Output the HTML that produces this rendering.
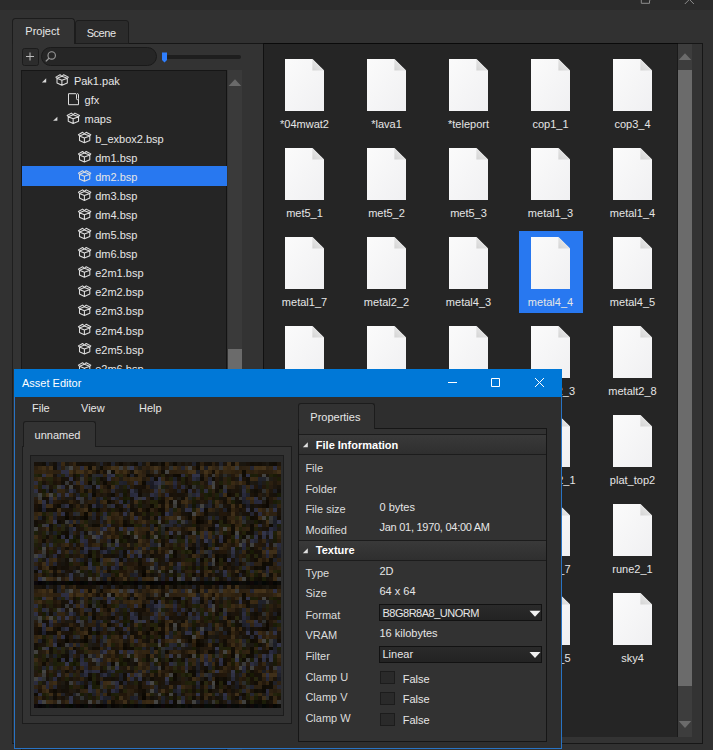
<!DOCTYPE html><html><head><meta charset="utf-8"><style>
html,body{margin:0;padding:0;}
body{width:713px;height:750px;position:relative;overflow:hidden;background:#313131;font-family:"Liberation Sans", sans-serif;}
.t{position:absolute;white-space:pre;}
.b{position:absolute;box-sizing:border-box;}
svg{position:absolute;overflow:visible;}
</style></head><body>
<div class="b" style="left:0px;top:0px;width:713px;height:10px;background:#2b2b2b"></div>
<svg style="left:0;top:0" width="713" height="10"><path d="M641.3 -3 V3.3 H649.5 V1 L650 0" stroke="#8c8c8c" fill="none" stroke-width="1"/><path d="M684.8 4 L689.4 -0.6 L693.9 4" stroke="#8c8c8c" fill="none" stroke-width="1"/></svg>
<div class="b" style="left:12px;top:43px;width:691px;height:701px;background:#333333;border:1px solid #161616;border-left-color:#1e1e1e"></div>
<div class="b" style="left:12px;top:18px;width:63px;height:26px;background:#333333;border:1px solid #1c1c1c;border-bottom:none;border-radius:3.5px 3.5px 0 0"></div>
<div class="b" style="left:75px;top:20px;width:54px;height:24px;background:#2b2b2b;border:1px solid #1c1c1c;border-radius:3px 3px 0 0"></div>
<div class="b" style="left:13px;top:42px;width:61px;height:3px;background:#333333"></div>
<div class="t" style="left:25.3px;top:26.39px;font-size:11px;line-height:11px;color:#e6e6e6;font-weight:normal;">Project</div>
<div class="t" style="left:86.7px;top:28.09px;font-size:11px;line-height:11px;color:#e6e6e6;font-weight:normal;letter-spacing:-0.45px">Scene</div>
<div class="b" style="left:21.5px;top:47.5px;width:17.5px;height:18px;background:#2c2c2c;border:1px solid #1c1c1c;border-radius:2.5px"></div>
<svg style="left:0;top:0" width="713" height="750"><path d="M26 56.5 H34 M30 52.5 V60.5" stroke="#bdbdbd" stroke-width="1" fill="none"/></svg>
<div class="b" style="left:41px;top:47px;width:116px;height:19px;background:#262626;border:1px solid #1a1a1a;border-radius:9.5px"></div>
<svg style="left:0;top:0" width="713" height="750"><circle cx="51.7" cy="55.4" r="3.7" stroke="#9c9c9c" stroke-width="1.1" fill="none"/><path d="M49 58.2 L45.8 61.4" stroke="#9c9c9c" stroke-width="1.3"/></svg>
<div class="b" style="left:166px;top:55px;width:75px;height:4px;background:#1e1e1e;border-radius:2px"></div>
<svg style="left:0;top:0" width="713" height="750"><path d="M162 52.5 H167 V60 L164.5 62.5 L162 60 Z" fill="#2f7fff"/></svg>
<div class="b" style="left:21px;top:70px;width:206px;height:680px;background:#252525;border-left:1px solid #181818;border-top:1px solid #161616;border-right:1px solid #141414"></div>
<div class="b" style="left:228px;top:70px;width:14px;height:680px;background:#3a3a3a"></div>
<svg style="left:0;top:0" width="713" height="750"><path d="M228.6 86 L235 79.2 L241.2 86 Z" fill="#6a6a6a"/></svg>
<div class="b" style="left:228px;top:349px;width:14px;height:30px;background:#6b6b6b"></div>
<div class="t" style="left:73.9px;top:75.99px;font-size:11px;line-height:11px;color:#e6e6e6;font-weight:normal;">Pak1.pak</div>
<div class="t" style="left:84.55000000000001px;top:95.19px;font-size:11px;line-height:11px;color:#e6e6e6;font-weight:normal;">gfx</div>
<div class="t" style="left:84.55000000000001px;top:114.39px;font-size:11px;line-height:11px;color:#e6e6e6;font-weight:normal;">maps</div>
<div class="t" style="left:95.2px;top:133.59px;font-size:11px;line-height:11px;color:#e6e6e6;font-weight:normal;">b_exbox2.bsp</div>
<div class="t" style="left:95.2px;top:152.79px;font-size:11px;line-height:11px;color:#e6e6e6;font-weight:normal;">dm1.bsp</div>
<div class="b" style="left:22px;top:166.4px;width:205px;height:19.2px;background:#2878f0"></div>
<div class="t" style="left:95.2px;top:171.99px;font-size:11px;line-height:11px;color:#e6e6e6;font-weight:normal;">dm2.bsp</div>
<div class="t" style="left:95.2px;top:191.19px;font-size:11px;line-height:11px;color:#e6e6e6;font-weight:normal;">dm3.bsp</div>
<div class="t" style="left:95.2px;top:210.39px;font-size:11px;line-height:11px;color:#e6e6e6;font-weight:normal;">dm4.bsp</div>
<div class="t" style="left:95.2px;top:229.59px;font-size:11px;line-height:11px;color:#e6e6e6;font-weight:normal;">dm5.bsp</div>
<div class="t" style="left:95.2px;top:248.79px;font-size:11px;line-height:11px;color:#e6e6e6;font-weight:normal;">dm6.bsp</div>
<div class="t" style="left:95.2px;top:267.99px;font-size:11px;line-height:11px;color:#e6e6e6;font-weight:normal;">e2m1.bsp</div>
<div class="t" style="left:95.2px;top:287.19px;font-size:11px;line-height:11px;color:#e6e6e6;font-weight:normal;">e2m2.bsp</div>
<div class="t" style="left:95.2px;top:306.39px;font-size:11px;line-height:11px;color:#e6e6e6;font-weight:normal;">e2m3.bsp</div>
<div class="t" style="left:95.2px;top:325.59px;font-size:11px;line-height:11px;color:#e6e6e6;font-weight:normal;">e2m4.bsp</div>
<div class="t" style="left:95.2px;top:344.79px;font-size:11px;line-height:11px;color:#e6e6e6;font-weight:normal;">e2m5.bsp</div>
<div class="t" style="left:95.2px;top:363.99px;font-size:11px;line-height:11px;color:#e6e6e6;font-weight:normal;">e2m6.bsp</div>
<svg style="left:0;top:0" width="713" height="750"><path d="M41.9 82.4 L46.199999999999996 82.4 L46.199999999999996 78.30000000000001 Z" fill="#d8d8d8"/><g transform="translate(55.7,74.30000000000001)" stroke="#dedede" stroke-width="1.05" fill="none" stroke-linejoin="round"><path d="M1.3 4 L6.2 6 L11.6 4 M1.3 4 L6.2 2 L11.6 4 M1.3 4 V8.6 L6.2 10.9 L11.6 8.6 V4 M6.2 6 V10.9 M1.3 4 L0.2 2.8 L4.4 0.4 L6.2 2 M11.6 4 L12.6 2.8 L8 0.4 L6.2 2"/></g><g transform="translate(68,93.2)" stroke="#dedede" stroke-width="1" fill="none"><path d="M8 0.5 H0.5 V11.5 H10.5 V6"/><rect x="8.5" y="0.5" width="2" height="6" rx="1"/></g><path d="M53.099999999999994 120.80000000000001 L57.39999999999999 120.80000000000001 L57.39999999999999 116.70000000000002 Z" fill="#d8d8d8"/><g transform="translate(66.95,112.70000000000002)" stroke="#dedede" stroke-width="1.05" fill="none" stroke-linejoin="round"><path d="M1.3 4 L6.2 6 L11.6 4 M1.3 4 L6.2 2 L11.6 4 M1.3 4 V8.6 L6.2 10.9 L11.6 8.6 V4 M6.2 6 V10.9 M1.3 4 L0.2 2.8 L4.4 0.4 L6.2 2 M11.6 4 L12.6 2.8 L8 0.4 L6.2 2"/></g><g transform="translate(78.2,131.9)" stroke="#dedede" stroke-width="1.05" fill="none" stroke-linejoin="round"><path d="M1.3 4 L6.2 6 L11.6 4 M1.3 4 L6.2 2 L11.6 4 M1.3 4 V8.6 L6.2 10.9 L11.6 8.6 V4 M6.2 6 V10.9 M1.3 4 L0.2 2.8 L4.4 0.4 L6.2 2 M11.6 4 L12.6 2.8 L8 0.4 L6.2 2"/></g><g transform="translate(78.2,151.1)" stroke="#dedede" stroke-width="1.05" fill="none" stroke-linejoin="round"><path d="M1.3 4 L6.2 6 L11.6 4 M1.3 4 L6.2 2 L11.6 4 M1.3 4 V8.6 L6.2 10.9 L11.6 8.6 V4 M6.2 6 V10.9 M1.3 4 L0.2 2.8 L4.4 0.4 L6.2 2 M11.6 4 L12.6 2.8 L8 0.4 L6.2 2"/></g><g transform="translate(78.2,170.3)" stroke="#dedede" stroke-width="1.05" fill="none" stroke-linejoin="round"><path d="M1.3 4 L6.2 6 L11.6 4 M1.3 4 L6.2 2 L11.6 4 M1.3 4 V8.6 L6.2 10.9 L11.6 8.6 V4 M6.2 6 V10.9 M1.3 4 L0.2 2.8 L4.4 0.4 L6.2 2 M11.6 4 L12.6 2.8 L8 0.4 L6.2 2"/></g><g transform="translate(78.2,189.5)" stroke="#dedede" stroke-width="1.05" fill="none" stroke-linejoin="round"><path d="M1.3 4 L6.2 6 L11.6 4 M1.3 4 L6.2 2 L11.6 4 M1.3 4 V8.6 L6.2 10.9 L11.6 8.6 V4 M6.2 6 V10.9 M1.3 4 L0.2 2.8 L4.4 0.4 L6.2 2 M11.6 4 L12.6 2.8 L8 0.4 L6.2 2"/></g><g transform="translate(78.2,208.70000000000002)" stroke="#dedede" stroke-width="1.05" fill="none" stroke-linejoin="round"><path d="M1.3 4 L6.2 6 L11.6 4 M1.3 4 L6.2 2 L11.6 4 M1.3 4 V8.6 L6.2 10.9 L11.6 8.6 V4 M6.2 6 V10.9 M1.3 4 L0.2 2.8 L4.4 0.4 L6.2 2 M11.6 4 L12.6 2.8 L8 0.4 L6.2 2"/></g><g transform="translate(78.2,227.9)" stroke="#dedede" stroke-width="1.05" fill="none" stroke-linejoin="round"><path d="M1.3 4 L6.2 6 L11.6 4 M1.3 4 L6.2 2 L11.6 4 M1.3 4 V8.6 L6.2 10.9 L11.6 8.6 V4 M6.2 6 V10.9 M1.3 4 L0.2 2.8 L4.4 0.4 L6.2 2 M11.6 4 L12.6 2.8 L8 0.4 L6.2 2"/></g><g transform="translate(78.2,247.1)" stroke="#dedede" stroke-width="1.05" fill="none" stroke-linejoin="round"><path d="M1.3 4 L6.2 6 L11.6 4 M1.3 4 L6.2 2 L11.6 4 M1.3 4 V8.6 L6.2 10.9 L11.6 8.6 V4 M6.2 6 V10.9 M1.3 4 L0.2 2.8 L4.4 0.4 L6.2 2 M11.6 4 L12.6 2.8 L8 0.4 L6.2 2"/></g><g transform="translate(78.2,266.29999999999995)" stroke="#dedede" stroke-width="1.05" fill="none" stroke-linejoin="round"><path d="M1.3 4 L6.2 6 L11.6 4 M1.3 4 L6.2 2 L11.6 4 M1.3 4 V8.6 L6.2 10.9 L11.6 8.6 V4 M6.2 6 V10.9 M1.3 4 L0.2 2.8 L4.4 0.4 L6.2 2 M11.6 4 L12.6 2.8 L8 0.4 L6.2 2"/></g><g transform="translate(78.2,285.5)" stroke="#dedede" stroke-width="1.05" fill="none" stroke-linejoin="round"><path d="M1.3 4 L6.2 6 L11.6 4 M1.3 4 L6.2 2 L11.6 4 M1.3 4 V8.6 L6.2 10.9 L11.6 8.6 V4 M6.2 6 V10.9 M1.3 4 L0.2 2.8 L4.4 0.4 L6.2 2 M11.6 4 L12.6 2.8 L8 0.4 L6.2 2"/></g><g transform="translate(78.2,304.69999999999993)" stroke="#dedede" stroke-width="1.05" fill="none" stroke-linejoin="round"><path d="M1.3 4 L6.2 6 L11.6 4 M1.3 4 L6.2 2 L11.6 4 M1.3 4 V8.6 L6.2 10.9 L11.6 8.6 V4 M6.2 6 V10.9 M1.3 4 L0.2 2.8 L4.4 0.4 L6.2 2 M11.6 4 L12.6 2.8 L8 0.4 L6.2 2"/></g><g transform="translate(78.2,323.9)" stroke="#dedede" stroke-width="1.05" fill="none" stroke-linejoin="round"><path d="M1.3 4 L6.2 6 L11.6 4 M1.3 4 L6.2 2 L11.6 4 M1.3 4 V8.6 L6.2 10.9 L11.6 8.6 V4 M6.2 6 V10.9 M1.3 4 L0.2 2.8 L4.4 0.4 L6.2 2 M11.6 4 L12.6 2.8 L8 0.4 L6.2 2"/></g><g transform="translate(78.2,343.1)" stroke="#dedede" stroke-width="1.05" fill="none" stroke-linejoin="round"><path d="M1.3 4 L6.2 6 L11.6 4 M1.3 4 L6.2 2 L11.6 4 M1.3 4 V8.6 L6.2 10.9 L11.6 8.6 V4 M6.2 6 V10.9 M1.3 4 L0.2 2.8 L4.4 0.4 L6.2 2 M11.6 4 L12.6 2.8 L8 0.4 L6.2 2"/></g><g transform="translate(78.2,362.29999999999995)" stroke="#dedede" stroke-width="1.05" fill="none" stroke-linejoin="round"><path d="M1.3 4 L6.2 6 L11.6 4 M1.3 4 L6.2 2 L11.6 4 M1.3 4 V8.6 L6.2 10.9 L11.6 8.6 V4 M6.2 6 V10.9 M1.3 4 L0.2 2.8 L4.4 0.4 L6.2 2 M11.6 4 L12.6 2.8 L8 0.4 L6.2 2"/></g></svg>
<div class="b" style="left:263px;top:43px;width:415px;height:694px;background:#252525;border-left:1px solid #111111;border-top:1px solid #0a0a0a"></div>
<div class="b" style="left:677px;top:44px;width:1px;height:693px;background:#1a1a1a"></div>
<div class="b" style="left:678px;top:44px;width:14px;height:693px;background:#3d3d3d"></div>
<div class="b" style="left:678px;top:69.5px;width:14px;height:616px;background:#6b6b6b"></div>
<svg style="left:0;top:0" width="713" height="750"><path d="M678.7 60 L685 53.2 L691.3 60 Z" fill="#6b6b6b"/><path d="M678.7 721 L685 728 L691.3 721 Z" fill="#6b6b6b"/></svg>
<div class="t" style="left:244.5px;width:120px;text-align:center;top:118.69px;font-size:11px;line-height:11px;color:#e6e6e6;">*04mwat2</div>
<div class="t" style="left:326.5px;width:120px;text-align:center;top:118.69px;font-size:11px;line-height:11px;color:#e6e6e6;">*lava1</div>
<div class="t" style="left:408.5px;width:120px;text-align:center;top:118.69px;font-size:11px;line-height:11px;color:#e6e6e6;">*teleport</div>
<div class="t" style="left:490.5px;width:120px;text-align:center;top:118.69px;font-size:11px;line-height:11px;color:#e6e6e6;">cop1_1</div>
<div class="t" style="left:572.5px;width:120px;text-align:center;top:118.69px;font-size:11px;line-height:11px;color:#e6e6e6;">cop3_4</div>
<div class="t" style="left:244.5px;width:120px;text-align:center;top:207.69px;font-size:11px;line-height:11px;color:#e6e6e6;">met5_1</div>
<div class="t" style="left:326.5px;width:120px;text-align:center;top:207.69px;font-size:11px;line-height:11px;color:#e6e6e6;">met5_2</div>
<div class="t" style="left:408.5px;width:120px;text-align:center;top:207.69px;font-size:11px;line-height:11px;color:#e6e6e6;">met5_3</div>
<div class="t" style="left:490.5px;width:120px;text-align:center;top:207.69px;font-size:11px;line-height:11px;color:#e6e6e6;">metal1_3</div>
<div class="t" style="left:572.5px;width:120px;text-align:center;top:207.69px;font-size:11px;line-height:11px;color:#e6e6e6;">metal1_4</div>
<div class="t" style="left:244.5px;width:120px;text-align:center;top:296.69px;font-size:11px;line-height:11px;color:#e6e6e6;">metal1_7</div>
<div class="t" style="left:326.5px;width:120px;text-align:center;top:296.69px;font-size:11px;line-height:11px;color:#e6e6e6;">metal2_2</div>
<div class="t" style="left:408.5px;width:120px;text-align:center;top:296.69px;font-size:11px;line-height:11px;color:#e6e6e6;">metal4_3</div>
<div class="b" style="left:519px;top:231px;width:64px;height:82px;background:#2878f0"></div>
<div class="t" style="left:490.5px;width:120px;text-align:center;top:296.69px;font-size:11px;line-height:11px;color:#e6e6e6;">metal4_4</div>
<div class="t" style="left:572.5px;width:120px;text-align:center;top:296.69px;font-size:11px;line-height:11px;color:#e6e6e6;">metal4_5</div>
<div class="t" style="left:244.5px;width:120px;text-align:center;top:385.69px;font-size:11px;line-height:11px;color:#e6e6e6;">metal5_1</div>
<div class="t" style="left:326.5px;width:120px;text-align:center;top:385.69px;font-size:11px;line-height:11px;color:#e6e6e6;">metal5_2</div>
<div class="t" style="left:408.5px;width:120px;text-align:center;top:385.69px;font-size:11px;line-height:11px;color:#e6e6e6;">metal5_4</div>
<div class="t" style="left:455.0px;width:120px;text-align:center;top:385.69px;font-size:11px;line-height:11px;color:#e6e6e6;text-align:right">metalt2_3</div>
<div class="t" style="left:572.5px;width:120px;text-align:center;top:385.69px;font-size:11px;line-height:11px;color:#e6e6e6;">metalt2_8</div>
<div class="t" style="left:244.5px;width:120px;text-align:center;top:474.69px;font-size:11px;line-height:11px;color:#e6e6e6;">mmetal1_1</div>
<div class="t" style="left:326.5px;width:120px;text-align:center;top:474.69px;font-size:11px;line-height:11px;color:#e6e6e6;">mmetal1_2</div>
<div class="t" style="left:408.5px;width:120px;text-align:center;top:474.69px;font-size:11px;line-height:11px;color:#e6e6e6;">mmetal1_3</div>
<div class="t" style="left:455.5px;width:120px;text-align:center;top:474.69px;font-size:11px;line-height:11px;color:#e6e6e6;text-align:right">plat_top2_1</div>
<div class="t" style="left:572.5px;width:120px;text-align:center;top:474.69px;font-size:11px;line-height:11px;color:#e6e6e6;">plat_top2</div>
<div class="t" style="left:244.5px;width:120px;text-align:center;top:563.69px;font-size:11px;line-height:11px;color:#e6e6e6;">plat_side1</div>
<div class="t" style="left:326.5px;width:120px;text-align:center;top:563.69px;font-size:11px;line-height:11px;color:#e6e6e6;">plat_stem</div>
<div class="t" style="left:408.5px;width:120px;text-align:center;top:563.69px;font-size:11px;line-height:11px;color:#e6e6e6;">plat_top1</div>
<div class="t" style="left:450.5px;width:120px;text-align:center;top:563.69px;font-size:11px;line-height:11px;color:#e6e6e6;text-align:right">rune1_7</div>
<div class="t" style="left:572.5px;width:120px;text-align:center;top:563.69px;font-size:11px;line-height:11px;color:#e6e6e6;">rune2_1</div>
<div class="t" style="left:244.5px;width:120px;text-align:center;top:652.69px;font-size:11px;line-height:11px;color:#e6e6e6;">rune2_2</div>
<div class="t" style="left:326.5px;width:120px;text-align:center;top:652.69px;font-size:11px;line-height:11px;color:#e6e6e6;">rune2_3</div>
<div class="t" style="left:408.5px;width:120px;text-align:center;top:652.69px;font-size:11px;line-height:11px;color:#e6e6e6;">rune2_4</div>
<div class="t" style="left:450.5px;width:120px;text-align:center;top:652.69px;font-size:11px;line-height:11px;color:#e6e6e6;text-align:right">rune1_5</div>
<div class="t" style="left:572.5px;width:120px;text-align:center;top:652.69px;font-size:11px;line-height:11px;color:#e6e6e6;">sky4</div>
<svg style="left:0;top:0" width="713" height="750"><defs><linearGradient id="pg" x1="0" y1="0" x2="1" y2="1"><stop offset="0" stop-color="#fbfbfb"/><stop offset="1" stop-color="#f0f0f2"/></linearGradient><linearGradient id="fd" x1="1" y1="0" x2="0" y2="1"><stop offset="0" stop-color="#f2f2f2"/><stop offset="1" stop-color="#d4d4d4"/></linearGradient></defs><g transform="translate(285,59)"><path d="M0 0 H27.4 L39 11.4 V52 H0 Z" fill="url(#pg)"/><path d="M27.4 0 L39 11.4 H27.4 Z" fill="url(#fd)"/></g><g transform="translate(367,59)"><path d="M0 0 H27.4 L39 11.4 V52 H0 Z" fill="url(#pg)"/><path d="M27.4 0 L39 11.4 H27.4 Z" fill="url(#fd)"/></g><g transform="translate(449,59)"><path d="M0 0 H27.4 L39 11.4 V52 H0 Z" fill="url(#pg)"/><path d="M27.4 0 L39 11.4 H27.4 Z" fill="url(#fd)"/></g><g transform="translate(531,59)"><path d="M0 0 H27.4 L39 11.4 V52 H0 Z" fill="url(#pg)"/><path d="M27.4 0 L39 11.4 H27.4 Z" fill="url(#fd)"/></g><g transform="translate(613,59)"><path d="M0 0 H27.4 L39 11.4 V52 H0 Z" fill="url(#pg)"/><path d="M27.4 0 L39 11.4 H27.4 Z" fill="url(#fd)"/></g><g transform="translate(285,148)"><path d="M0 0 H27.4 L39 11.4 V52 H0 Z" fill="url(#pg)"/><path d="M27.4 0 L39 11.4 H27.4 Z" fill="url(#fd)"/></g><g transform="translate(367,148)"><path d="M0 0 H27.4 L39 11.4 V52 H0 Z" fill="url(#pg)"/><path d="M27.4 0 L39 11.4 H27.4 Z" fill="url(#fd)"/></g><g transform="translate(449,148)"><path d="M0 0 H27.4 L39 11.4 V52 H0 Z" fill="url(#pg)"/><path d="M27.4 0 L39 11.4 H27.4 Z" fill="url(#fd)"/></g><g transform="translate(531,148)"><path d="M0 0 H27.4 L39 11.4 V52 H0 Z" fill="url(#pg)"/><path d="M27.4 0 L39 11.4 H27.4 Z" fill="url(#fd)"/></g><g transform="translate(613,148)"><path d="M0 0 H27.4 L39 11.4 V52 H0 Z" fill="url(#pg)"/><path d="M27.4 0 L39 11.4 H27.4 Z" fill="url(#fd)"/></g><g transform="translate(285,237)"><path d="M0 0 H27.4 L39 11.4 V52 H0 Z" fill="url(#pg)"/><path d="M27.4 0 L39 11.4 H27.4 Z" fill="url(#fd)"/></g><g transform="translate(367,237)"><path d="M0 0 H27.4 L39 11.4 V52 H0 Z" fill="url(#pg)"/><path d="M27.4 0 L39 11.4 H27.4 Z" fill="url(#fd)"/></g><g transform="translate(449,237)"><path d="M0 0 H27.4 L39 11.4 V52 H0 Z" fill="url(#pg)"/><path d="M27.4 0 L39 11.4 H27.4 Z" fill="url(#fd)"/></g><g transform="translate(531,237)"><path d="M0 0 H27.4 L39 11.4 V52 H0 Z" fill="url(#pg)"/><path d="M27.4 0 L39 11.4 H27.4 Z" fill="url(#fd)"/></g><g transform="translate(613,237)"><path d="M0 0 H27.4 L39 11.4 V52 H0 Z" fill="url(#pg)"/><path d="M27.4 0 L39 11.4 H27.4 Z" fill="url(#fd)"/></g><g transform="translate(285,326)"><path d="M0 0 H27.4 L39 11.4 V52 H0 Z" fill="url(#pg)"/><path d="M27.4 0 L39 11.4 H27.4 Z" fill="url(#fd)"/></g><g transform="translate(367,326)"><path d="M0 0 H27.4 L39 11.4 V52 H0 Z" fill="url(#pg)"/><path d="M27.4 0 L39 11.4 H27.4 Z" fill="url(#fd)"/></g><g transform="translate(449,326)"><path d="M0 0 H27.4 L39 11.4 V52 H0 Z" fill="url(#pg)"/><path d="M27.4 0 L39 11.4 H27.4 Z" fill="url(#fd)"/></g><g transform="translate(531,326)"><path d="M0 0 H27.4 L39 11.4 V52 H0 Z" fill="url(#pg)"/><path d="M27.4 0 L39 11.4 H27.4 Z" fill="url(#fd)"/></g><g transform="translate(613,326)"><path d="M0 0 H27.4 L39 11.4 V52 H0 Z" fill="url(#pg)"/><path d="M27.4 0 L39 11.4 H27.4 Z" fill="url(#fd)"/></g><g transform="translate(285,415)"><path d="M0 0 H27.4 L39 11.4 V52 H0 Z" fill="url(#pg)"/><path d="M27.4 0 L39 11.4 H27.4 Z" fill="url(#fd)"/></g><g transform="translate(367,415)"><path d="M0 0 H27.4 L39 11.4 V52 H0 Z" fill="url(#pg)"/><path d="M27.4 0 L39 11.4 H27.4 Z" fill="url(#fd)"/></g><g transform="translate(449,415)"><path d="M0 0 H27.4 L39 11.4 V52 H0 Z" fill="url(#pg)"/><path d="M27.4 0 L39 11.4 H27.4 Z" fill="url(#fd)"/></g><g transform="translate(531,415)"><path d="M0 0 H27.4 L39 11.4 V52 H0 Z" fill="url(#pg)"/><path d="M27.4 0 L39 11.4 H27.4 Z" fill="url(#fd)"/></g><g transform="translate(613,415)"><path d="M0 0 H27.4 L39 11.4 V52 H0 Z" fill="url(#pg)"/><path d="M27.4 0 L39 11.4 H27.4 Z" fill="url(#fd)"/></g><g transform="translate(285,504)"><path d="M0 0 H27.4 L39 11.4 V52 H0 Z" fill="url(#pg)"/><path d="M27.4 0 L39 11.4 H27.4 Z" fill="url(#fd)"/></g><g transform="translate(367,504)"><path d="M0 0 H27.4 L39 11.4 V52 H0 Z" fill="url(#pg)"/><path d="M27.4 0 L39 11.4 H27.4 Z" fill="url(#fd)"/></g><g transform="translate(449,504)"><path d="M0 0 H27.4 L39 11.4 V52 H0 Z" fill="url(#pg)"/><path d="M27.4 0 L39 11.4 H27.4 Z" fill="url(#fd)"/></g><g transform="translate(531,504)"><path d="M0 0 H27.4 L39 11.4 V52 H0 Z" fill="url(#pg)"/><path d="M27.4 0 L39 11.4 H27.4 Z" fill="url(#fd)"/></g><g transform="translate(613,504)"><path d="M0 0 H27.4 L39 11.4 V52 H0 Z" fill="url(#pg)"/><path d="M27.4 0 L39 11.4 H27.4 Z" fill="url(#fd)"/></g><g transform="translate(285,593)"><path d="M0 0 H27.4 L39 11.4 V52 H0 Z" fill="url(#pg)"/><path d="M27.4 0 L39 11.4 H27.4 Z" fill="url(#fd)"/></g><g transform="translate(367,593)"><path d="M0 0 H27.4 L39 11.4 V52 H0 Z" fill="url(#pg)"/><path d="M27.4 0 L39 11.4 H27.4 Z" fill="url(#fd)"/></g><g transform="translate(449,593)"><path d="M0 0 H27.4 L39 11.4 V52 H0 Z" fill="url(#pg)"/><path d="M27.4 0 L39 11.4 H27.4 Z" fill="url(#fd)"/></g><g transform="translate(531,593)"><path d="M0 0 H27.4 L39 11.4 V52 H0 Z" fill="url(#pg)"/><path d="M27.4 0 L39 11.4 H27.4 Z" fill="url(#fd)"/></g><g transform="translate(613,593)"><path d="M0 0 H27.4 L39 11.4 V52 H0 Z" fill="url(#pg)"/><path d="M27.4 0 L39 11.4 H27.4 Z" fill="url(#fd)"/></g></svg>
<div class="b" style="left:14px;top:369px;width:548px;height:380px;background:#2e2e2e;border:1px solid #2873c4;border-top:none"></div>
<div class="b" style="left:14px;top:369px;width:548px;height:28px;background:#0078d7"></div>
<div class="t" style="left:22px;top:377.69px;font-size:11px;line-height:11px;color:#ffffff;font-weight:normal;">Asset Editor</div>
<svg style="left:0;top:0" width="713" height="750"><path d="M448 382.5 H457" stroke="#fff" stroke-width="1"/><path d="M491.5 378.5 H499.5 V386.5 H491.5 Z" stroke="#fff" fill="none"/><path d="M535 378 L544 387 M544 378 L535 387" stroke="#fff" stroke-width="1"/></svg>
<div class="t" style="left:32px;top:403.19px;font-size:11px;line-height:11px;color:#e6e6e6;font-weight:normal;">File</div>
<div class="t" style="left:81px;top:403.19px;font-size:11px;line-height:11px;color:#e6e6e6;font-weight:normal;">View</div>
<div class="t" style="left:139px;top:403.19px;font-size:11px;line-height:11px;color:#e6e6e6;font-weight:normal;">Help</div>
<div class="b" style="left:22px;top:446px;width:270px;height:278px;border:1px solid #1c1c1c;background:#333333"></div>
<div class="b" style="left:23px;top:421px;width:73px;height:26px;background:#333333;border:1px solid #1c1c1c;border-bottom:none;border-radius:3px 3px 0 0"></div>
<div class="t" style="left:34.6px;top:430.29px;font-size:11px;line-height:11px;color:#e6e6e6;font-weight:normal;">unnamed</div>
<div class="b" style="left:30px;top:455px;width:254px;height:261px;background:linear-gradient(#2a2a2a,#2e2e2e);border:1px solid #1c1c1c"></div>
<div class="b" style="left:34px;top:462px;width:247px;height:246px;background:#2c261c"><svg id="tex" width="247" height="246" viewBox="0 0 64 64" preserveAspectRatio="none" shape-rendering="crispEdges"><rect x="0" y="0" width="1.02" height="1.02" fill="#19120a"/><rect x="1" y="0" width="1.02" height="1.02" fill="#17120b"/><rect x="2" y="0" width="1.02" height="1.02" fill="#120e07"/><rect x="3" y="0" width="1.02" height="1.02" fill="#1e2029"/><rect x="4" y="0" width="1.02" height="1.02" fill="#1d1912"/><rect x="5" y="0" width="1.02" height="1.02" fill="#151009"/><rect x="6" y="0" width="1.02" height="1.02" fill="#1d1f28"/><rect x="7" y="0" width="1.02" height="1.02" fill="#392913"/><rect x="8" y="0" width="1.02" height="1.02" fill="#1a160f"/><rect x="9" y="0" width="1.02" height="1.02" fill="#251a0e"/><rect x="10" y="0" width="1.02" height="1.02" fill="#332512"/><rect x="11" y="0" width="1.02" height="1.02" fill="#151009"/><rect x="12" y="0" width="1.02" height="1.02" fill="#160f07"/><rect x="13" y="0" width="1.02" height="1.02" fill="#181109"/><rect x="14" y="0" width="1.02" height="1.02" fill="#151009"/><rect x="15" y="0" width="1.02" height="1.02" fill="#19120a"/><rect x="16" y="0" width="1.02" height="1.02" fill="#201c15"/><rect x="17" y="0" width="1.02" height="1.02" fill="#20222b"/><rect x="18" y="0" width="1.02" height="1.02" fill="#1c150d"/><rect x="19" y="0" width="1.02" height="1.02" fill="#160f07"/><rect x="20" y="0" width="1.02" height="1.02" fill="#20222b"/><rect x="21" y="0" width="1.02" height="1.02" fill="#1d150b"/><rect x="22" y="0" width="1.02" height="1.02" fill="#110c05"/><rect x="23" y="0" width="1.02" height="1.02" fill="#1c150d"/><rect x="24" y="0" width="1.02" height="1.02" fill="#1d1912"/><rect x="25" y="0" width="1.02" height="1.02" fill="#17120b"/><rect x="26" y="0" width="1.02" height="1.02" fill="#100c05"/><rect x="27" y="0" width="1.02" height="1.02" fill="#20222b"/><rect x="28" y="0" width="1.02" height="1.02" fill="#1a160f"/><rect x="29" y="0" width="1.02" height="1.02" fill="#332512"/><rect x="30" y="0" width="1.02" height="1.02" fill="#110c05"/><rect x="31" y="0" width="1.02" height="1.02" fill="#130f08"/><rect x="32" y="0" width="1.02" height="1.02" fill="#1c1811"/><rect x="33" y="0" width="1.02" height="1.02" fill="#0e0a03"/><rect x="34" y="0" width="1.02" height="1.02" fill="#312310"/><rect x="35" y="0" width="1.02" height="1.02" fill="#1a160f"/><rect x="36" y="0" width="1.02" height="1.02" fill="#0f0b04"/><rect x="37" y="0" width="1.02" height="1.02" fill="#1d1912"/><rect x="38" y="0" width="1.02" height="1.02" fill="#1b1309"/><rect x="39" y="0" width="1.02" height="1.02" fill="#1e1a13"/><rect x="40" y="0" width="1.02" height="1.02" fill="#1c150d"/><rect x="41" y="0" width="1.02" height="1.02" fill="#1f212a"/><rect x="42" y="0" width="1.02" height="1.02" fill="#130f08"/><rect x="43" y="0" width="1.02" height="1.02" fill="#2a1e0f"/><rect x="44" y="0" width="1.02" height="1.02" fill="#171008"/><rect x="45" y="0" width="1.02" height="1.02" fill="#140f08"/><rect x="46" y="0" width="1.02" height="1.02" fill="#2b1f10"/><rect x="47" y="0" width="1.02" height="1.02" fill="#19120a"/><rect x="48" y="0" width="1.02" height="1.02" fill="#21232c"/><rect x="49" y="0" width="1.02" height="1.02" fill="#1b140c"/><rect x="50" y="0" width="1.02" height="1.02" fill="#3e2e18"/><rect x="51" y="0" width="1.02" height="1.02" fill="#140f08"/><rect x="52" y="0" width="1.02" height="1.02" fill="#3c2c16"/><rect x="53" y="0" width="1.02" height="1.02" fill="#1a160f"/><rect x="54" y="0" width="1.02" height="1.02" fill="#1a160f"/><rect x="55" y="0" width="1.02" height="1.02" fill="#19120a"/><rect x="56" y="0" width="1.02" height="1.02" fill="#120e07"/><rect x="57" y="0" width="1.02" height="1.02" fill="#151009"/><rect x="58" y="0" width="1.02" height="1.02" fill="#130e07"/><rect x="59" y="0" width="1.02" height="1.02" fill="#17120b"/><rect x="60" y="0" width="1.02" height="1.02" fill="#1b1710"/><rect x="61" y="0" width="1.02" height="1.02" fill="#120e07"/><rect x="62" y="0" width="1.02" height="1.02" fill="#110c05"/><rect x="63" y="0" width="1.02" height="1.02" fill="#1e160c"/><rect x="0" y="1" width="1.02" height="1.02" fill="#2a1e0f"/><rect x="1" y="1" width="1.02" height="1.02" fill="#352714"/><rect x="2" y="1" width="1.02" height="1.02" fill="#3f2e16"/><rect x="3" y="1" width="1.02" height="1.02" fill="#2d2112"/><rect x="4" y="1" width="1.02" height="1.02" fill="#423119"/><rect x="5" y="1" width="1.02" height="1.02" fill="#130f08"/><rect x="6" y="1" width="1.02" height="1.02" fill="#21232c"/><rect x="7" y="1" width="1.02" height="1.02" fill="#2b1f10"/><rect x="8" y="1" width="1.02" height="1.02" fill="#2d2f2f"/><rect x="9" y="1" width="1.02" height="1.02" fill="#454543"/><rect x="10" y="1" width="1.02" height="1.02" fill="#2f2314"/><rect x="11" y="1" width="1.02" height="1.02" fill="#352714"/><rect x="12" y="1" width="1.02" height="1.02" fill="#2c2d40"/><rect x="13" y="1" width="1.02" height="1.02" fill="#3e2d15"/><rect x="14" y="1" width="1.02" height="1.02" fill="#110d06"/><rect x="15" y="1" width="1.02" height="1.02" fill="#423119"/><rect x="16" y="1" width="1.02" height="1.02" fill="#201c15"/><rect x="17" y="1" width="1.02" height="1.02" fill="#100c05"/><rect x="18" y="1" width="1.02" height="1.02" fill="#2a1e0f"/><rect x="19" y="1" width="1.02" height="1.02" fill="#312310"/><rect x="20" y="1" width="1.02" height="1.02" fill="#44331b"/><rect x="21" y="1" width="1.02" height="1.02" fill="#402f17"/><rect x="22" y="1" width="1.02" height="1.02" fill="#3a3a3a"/><rect x="23" y="1" width="1.02" height="1.02" fill="#362815"/><rect x="24" y="1" width="1.02" height="1.02" fill="#373737"/><rect x="25" y="1" width="1.02" height="1.02" fill="#34364b"/><rect x="26" y="1" width="1.02" height="1.02" fill="#2f2314"/><rect x="27" y="1" width="1.02" height="1.02" fill="#1d1912"/><rect x="28" y="1" width="1.02" height="1.02" fill="#2e2213"/><rect x="29" y="1" width="1.02" height="1.02" fill="#291d0e"/><rect x="30" y="1" width="1.02" height="1.02" fill="#362815"/><rect x="31" y="1" width="1.02" height="1.02" fill="#44331b"/><rect x="32" y="1" width="1.02" height="1.02" fill="#352714"/><rect x="33" y="1" width="1.02" height="1.02" fill="#1a130b"/><rect x="34" y="1" width="1.02" height="1.02" fill="#291d0e"/><rect x="35" y="1" width="1.02" height="1.02" fill="#2e3030"/><rect x="36" y="1" width="1.02" height="1.02" fill="#3f2e16"/><rect x="37" y="1" width="1.02" height="1.02" fill="#2f2314"/><rect x="38" y="1" width="1.02" height="1.02" fill="#232430"/><rect x="39" y="1" width="1.02" height="1.02" fill="#3f2e16"/><rect x="40" y="1" width="1.02" height="1.02" fill="#424240"/><rect x="41" y="1" width="1.02" height="1.02" fill="#291d0e"/><rect x="42" y="1" width="1.02" height="1.02" fill="#110d06"/><rect x="43" y="1" width="1.02" height="1.02" fill="#413018"/><rect x="44" y="1" width="1.02" height="1.02" fill="#1b1c23"/><rect x="45" y="1" width="1.02" height="1.02" fill="#423119"/><rect x="46" y="1" width="1.02" height="1.02" fill="#362815"/><rect x="47" y="1" width="1.02" height="1.02" fill="#2f2314"/><rect x="48" y="1" width="1.02" height="1.02" fill="#353535"/><rect x="49" y="1" width="1.02" height="1.02" fill="#3e2d15"/><rect x="50" y="1" width="1.02" height="1.02" fill="#352714"/><rect x="51" y="1" width="1.02" height="1.02" fill="#413018"/><rect x="52" y="1" width="1.02" height="1.02" fill="#383838"/><rect x="53" y="1" width="1.02" height="1.02" fill="#2b1f10"/><rect x="54" y="1" width="1.02" height="1.02" fill="#2d2112"/><rect x="55" y="1" width="1.02" height="1.02" fill="#2f2314"/><rect x="56" y="1" width="1.02" height="1.02" fill="#242531"/><rect x="57" y="1" width="1.02" height="1.02" fill="#423119"/><rect x="58" y="1" width="1.02" height="1.02" fill="#402f17"/><rect x="59" y="1" width="1.02" height="1.02" fill="#44331b"/><rect x="60" y="1" width="1.02" height="1.02" fill="#2e2213"/><rect x="61" y="1" width="1.02" height="1.02" fill="#342613"/><rect x="62" y="1" width="1.02" height="1.02" fill="#2e2f42"/><rect x="63" y="1" width="1.02" height="1.02" fill="#30220f"/><rect x="0" y="2" width="1.02" height="1.02" fill="#30220f"/><rect x="1" y="2" width="1.02" height="1.02" fill="#30220f"/><rect x="2" y="2" width="1.02" height="1.02" fill="#362815"/><rect x="3" y="2" width="1.02" height="1.02" fill="#2e2213"/><rect x="4" y="2" width="1.02" height="1.02" fill="#312310"/><rect x="5" y="2" width="1.02" height="1.02" fill="#2c2011"/><rect x="6" y="2" width="1.02" height="1.02" fill="#2c2011"/><rect x="7" y="2" width="1.02" height="1.02" fill="#2d2e41"/><rect x="8" y="2" width="1.02" height="1.02" fill="#2d2e41"/><rect x="9" y="2" width="1.02" height="1.02" fill="#413018"/><rect x="10" y="2" width="1.02" height="1.02" fill="#2b1f10"/><rect x="11" y="2" width="1.02" height="1.02" fill="#402f17"/><rect x="12" y="2" width="1.02" height="1.02" fill="#413018"/><rect x="13" y="2" width="1.02" height="1.02" fill="#2c2011"/><rect x="14" y="2" width="1.02" height="1.02" fill="#402f17"/><rect x="15" y="2" width="1.02" height="1.02" fill="#291d0e"/><rect x="16" y="2" width="1.02" height="1.02" fill="#160f07"/><rect x="17" y="2" width="1.02" height="1.02" fill="#30220f"/><rect x="18" y="2" width="1.02" height="1.02" fill="#181109"/><rect x="19" y="2" width="1.02" height="1.02" fill="#464644"/><rect x="20" y="2" width="1.02" height="1.02" fill="#110d06"/><rect x="21" y="2" width="1.02" height="1.02" fill="#423119"/><rect x="22" y="2" width="1.02" height="1.02" fill="#30220f"/><rect x="23" y="2" width="1.02" height="1.02" fill="#3f2e16"/><rect x="24" y="2" width="1.02" height="1.02" fill="#2b1f10"/><rect x="25" y="2" width="1.02" height="1.02" fill="#17120b"/><rect x="26" y="2" width="1.02" height="1.02" fill="#44331b"/><rect x="27" y="2" width="1.02" height="1.02" fill="#362815"/><rect x="28" y="2" width="1.02" height="1.02" fill="#2b1f10"/><rect x="29" y="2" width="1.02" height="1.02" fill="#1c1811"/><rect x="30" y="2" width="1.02" height="1.02" fill="#2d2112"/><rect x="31" y="2" width="1.02" height="1.02" fill="#353535"/><rect x="32" y="2" width="1.02" height="1.02" fill="#2a1e0f"/><rect x="33" y="2" width="1.02" height="1.02" fill="#120e07"/><rect x="34" y="2" width="1.02" height="1.02" fill="#434341"/><rect x="35" y="2" width="1.02" height="1.02" fill="#2b1f10"/><rect x="36" y="2" width="1.02" height="1.02" fill="#2b1f10"/><rect x="37" y="2" width="1.02" height="1.02" fill="#2e2213"/><rect x="38" y="2" width="1.02" height="1.02" fill="#2d2112"/><rect x="39" y="2" width="1.02" height="1.02" fill="#30220f"/><rect x="40" y="2" width="1.02" height="1.02" fill="#413018"/><rect x="41" y="2" width="1.02" height="1.02" fill="#44331b"/><rect x="42" y="2" width="1.02" height="1.02" fill="#1c1d24"/><rect x="43" y="2" width="1.02" height="1.02" fill="#2b1f10"/><rect x="44" y="2" width="1.02" height="1.02" fill="#43321a"/><rect x="45" y="2" width="1.02" height="1.02" fill="#322411"/><rect x="46" y="2" width="1.02" height="1.02" fill="#160f07"/><rect x="47" y="2" width="1.02" height="1.02" fill="#402f17"/><rect x="48" y="2" width="1.02" height="1.02" fill="#291d0e"/><rect x="49" y="2" width="1.02" height="1.02" fill="#362815"/><rect x="50" y="2" width="1.02" height="1.02" fill="#342613"/><rect x="51" y="2" width="1.02" height="1.02" fill="#30220f"/><rect x="52" y="2" width="1.02" height="1.02" fill="#2b1f10"/><rect x="53" y="2" width="1.02" height="1.02" fill="#322411"/><rect x="54" y="2" width="1.02" height="1.02" fill="#0f0b04"/><rect x="55" y="2" width="1.02" height="1.02" fill="#312310"/><rect x="56" y="2" width="1.02" height="1.02" fill="#2b1f10"/><rect x="57" y="2" width="1.02" height="1.02" fill="#322411"/><rect x="58" y="2" width="1.02" height="1.02" fill="#2a1e0f"/><rect x="59" y="2" width="1.02" height="1.02" fill="#291d0e"/><rect x="60" y="2" width="1.02" height="1.02" fill="#2a1e0f"/><rect x="61" y="2" width="1.02" height="1.02" fill="#2c2011"/><rect x="62" y="2" width="1.02" height="1.02" fill="#352714"/><rect x="63" y="2" width="1.02" height="1.02" fill="#423119"/><rect x="0" y="3" width="1.02" height="1.02" fill="#22220c"/><rect x="1" y="3" width="1.02" height="1.02" fill="#1b1d08"/><rect x="2" y="3" width="1.02" height="1.02" fill="#2f3146"/><rect x="3" y="3" width="1.02" height="1.02" fill="#3e2e18"/><rect x="4" y="3" width="1.02" height="1.02" fill="#3e2e18"/><rect x="5" y="3" width="1.02" height="1.02" fill="#1a130b"/><rect x="6" y="3" width="1.02" height="1.02" fill="#202128"/><rect x="7" y="3" width="1.02" height="1.02" fill="#23230d"/><rect x="8" y="3" width="1.02" height="1.02" fill="#28293c"/><rect x="9" y="3" width="1.02" height="1.02" fill="#2e2213"/><rect x="10" y="3" width="1.02" height="1.02" fill="#140f08"/><rect x="11" y="3" width="1.02" height="1.02" fill="#181a05"/><rect x="12" y="3" width="1.02" height="1.02" fill="#1f2027"/><rect x="13" y="3" width="1.02" height="1.02" fill="#30220f"/><rect x="14" y="3" width="1.02" height="1.02" fill="#16110a"/><rect x="15" y="3" width="1.02" height="1.02" fill="#292b2b"/><rect x="16" y="3" width="1.02" height="1.02" fill="#262733"/><rect x="17" y="3" width="1.02" height="1.02" fill="#23252e"/><rect x="18" y="3" width="1.02" height="1.02" fill="#312310"/><rect x="19" y="3" width="1.02" height="1.02" fill="#292a3d"/><rect x="20" y="3" width="1.02" height="1.02" fill="#313348"/><rect x="21" y="3" width="1.02" height="1.02" fill="#20200a"/><rect x="22" y="3" width="1.02" height="1.02" fill="#282710"/><rect x="23" y="3" width="1.02" height="1.02" fill="#291d0e"/><rect x="24" y="3" width="1.02" height="1.02" fill="#100c05"/><rect x="25" y="3" width="1.02" height="1.02" fill="#21232c"/><rect x="26" y="3" width="1.02" height="1.02" fill="#140f08"/><rect x="27" y="3" width="1.02" height="1.02" fill="#352714"/><rect x="28" y="3" width="1.02" height="1.02" fill="#2e2213"/><rect x="29" y="3" width="1.02" height="1.02" fill="#110d06"/><rect x="30" y="3" width="1.02" height="1.02" fill="#151009"/><rect x="31" y="3" width="1.02" height="1.02" fill="#24190d"/><rect x="32" y="3" width="1.02" height="1.02" fill="#1b1309"/><rect x="33" y="3" width="1.02" height="1.02" fill="#24230c"/><rect x="34" y="3" width="1.02" height="1.02" fill="#160f07"/><rect x="35" y="3" width="1.02" height="1.02" fill="#1b140c"/><rect x="36" y="3" width="1.02" height="1.02" fill="#0f0b04"/><rect x="37" y="3" width="1.02" height="1.02" fill="#0e0a03"/><rect x="38" y="3" width="1.02" height="1.02" fill="#2b2c3f"/><rect x="39" y="3" width="1.02" height="1.02" fill="#25240d"/><rect x="40" y="3" width="1.02" height="1.02" fill="#24190d"/><rect x="41" y="3" width="1.02" height="1.02" fill="#303247"/><rect x="42" y="3" width="1.02" height="1.02" fill="#303247"/><rect x="43" y="3" width="1.02" height="1.02" fill="#17120b"/><rect x="44" y="3" width="1.02" height="1.02" fill="#362815"/><rect x="45" y="3" width="1.02" height="1.02" fill="#1b1309"/><rect x="46" y="3" width="1.02" height="1.02" fill="#393939"/><rect x="47" y="3" width="1.02" height="1.02" fill="#322411"/><rect x="48" y="3" width="1.02" height="1.02" fill="#1d1912"/><rect x="49" y="3" width="1.02" height="1.02" fill="#292b2b"/><rect x="50" y="3" width="1.02" height="1.02" fill="#201c15"/><rect x="51" y="3" width="1.02" height="1.02" fill="#23180c"/><rect x="52" y="3" width="1.02" height="1.02" fill="#352714"/><rect x="53" y="3" width="1.02" height="1.02" fill="#363636"/><rect x="54" y="3" width="1.02" height="1.02" fill="#0f0b04"/><rect x="55" y="3" width="1.02" height="1.02" fill="#2e3045"/><rect x="56" y="3" width="1.02" height="1.02" fill="#1b1d08"/><rect x="57" y="3" width="1.02" height="1.02" fill="#1c1e09"/><rect x="58" y="3" width="1.02" height="1.02" fill="#21160a"/><rect x="59" y="3" width="1.02" height="1.02" fill="#434341"/><rect x="60" y="3" width="1.02" height="1.02" fill="#1b140c"/><rect x="61" y="3" width="1.02" height="1.02" fill="#22210a"/><rect x="62" y="3" width="1.02" height="1.02" fill="#191b06"/><rect x="63" y="3" width="1.02" height="1.02" fill="#1d150b"/><rect x="0" y="4" width="1.02" height="1.02" fill="#332512"/><rect x="1" y="4" width="1.02" height="1.02" fill="#3e2e18"/><rect x="2" y="4" width="1.02" height="1.02" fill="#291d0e"/><rect x="3" y="4" width="1.02" height="1.02" fill="#26250e"/><rect x="4" y="4" width="1.02" height="1.02" fill="#25240d"/><rect x="5" y="4" width="1.02" height="1.02" fill="#22170b"/><rect x="6" y="4" width="1.02" height="1.02" fill="#2b1f10"/><rect x="7" y="4" width="1.02" height="1.02" fill="#16110a"/><rect x="8" y="4" width="1.02" height="1.02" fill="#19120a"/><rect x="9" y="4" width="1.02" height="1.02" fill="#303247"/><rect x="10" y="4" width="1.02" height="1.02" fill="#160f07"/><rect x="11" y="4" width="1.02" height="1.02" fill="#20180e"/><rect x="12" y="4" width="1.02" height="1.02" fill="#353535"/><rect x="13" y="4" width="1.02" height="1.02" fill="#2b1f0e"/><rect x="14" y="4" width="1.02" height="1.02" fill="#1b1d08"/><rect x="15" y="4" width="1.02" height="1.02" fill="#232424"/><rect x="16" y="4" width="1.02" height="1.02" fill="#1e200b"/><rect x="17" y="4" width="1.02" height="1.02" fill="#120d06"/><rect x="18" y="4" width="1.02" height="1.02" fill="#17120b"/><rect x="19" y="4" width="1.02" height="1.02" fill="#2e3045"/><rect x="20" y="4" width="1.02" height="1.02" fill="#2a1e0f"/><rect x="21" y="4" width="1.02" height="1.02" fill="#312310"/><rect x="22" y="4" width="1.02" height="1.02" fill="#1f1b14"/><rect x="23" y="4" width="1.02" height="1.02" fill="#342613"/><rect x="24" y="4" width="1.02" height="1.02" fill="#312310"/><rect x="25" y="4" width="1.02" height="1.02" fill="#3b2b15"/><rect x="26" y="4" width="1.02" height="1.02" fill="#352714"/><rect x="27" y="4" width="1.02" height="1.02" fill="#3a2a14"/><rect x="28" y="4" width="1.02" height="1.02" fill="#20180e"/><rect x="29" y="4" width="1.02" height="1.02" fill="#2c2011"/><rect x="30" y="4" width="1.02" height="1.02" fill="#232430"/><rect x="31" y="4" width="1.02" height="1.02" fill="#0f0b04"/><rect x="32" y="4" width="1.02" height="1.02" fill="#303247"/><rect x="33" y="4" width="1.02" height="1.02" fill="#352714"/><rect x="34" y="4" width="1.02" height="1.02" fill="#1c140a"/><rect x="35" y="4" width="1.02" height="1.02" fill="#20200a"/><rect x="36" y="4" width="1.02" height="1.02" fill="#1d1f28"/><rect x="37" y="4" width="1.02" height="1.02" fill="#171008"/><rect x="38" y="4" width="1.02" height="1.02" fill="#21210b"/><rect x="39" y="4" width="1.02" height="1.02" fill="#160f07"/><rect x="40" y="4" width="1.02" height="1.02" fill="#261b0f"/><rect x="41" y="4" width="1.02" height="1.02" fill="#292b3d"/><rect x="42" y="4" width="1.02" height="1.02" fill="#22242d"/><rect x="43" y="4" width="1.02" height="1.02" fill="#100c06"/><rect x="44" y="4" width="1.02" height="1.02" fill="#2e2213"/><rect x="45" y="4" width="1.02" height="1.02" fill="#232430"/><rect x="46" y="4" width="1.02" height="1.02" fill="#100c05"/><rect x="47" y="4" width="1.02" height="1.02" fill="#23180c"/><rect x="48" y="4" width="1.02" height="1.02" fill="#18150f"/><rect x="49" y="4" width="1.02" height="1.02" fill="#2c2011"/><rect x="50" y="4" width="1.02" height="1.02" fill="#22210a"/><rect x="51" y="4" width="1.02" height="1.02" fill="#1e140a"/><rect x="52" y="4" width="1.02" height="1.02" fill="#1b1710"/><rect x="53" y="4" width="1.02" height="1.02" fill="#2e3045"/><rect x="54" y="4" width="1.02" height="1.02" fill="#1b1309"/><rect x="55" y="4" width="1.02" height="1.02" fill="#130e07"/><rect x="56" y="4" width="1.02" height="1.02" fill="#3b2b15"/><rect x="57" y="4" width="1.02" height="1.02" fill="#392913"/><rect x="58" y="4" width="1.02" height="1.02" fill="#1f212a"/><rect x="59" y="4" width="1.02" height="1.02" fill="#202128"/><rect x="60" y="4" width="1.02" height="1.02" fill="#3a3a3a"/><rect x="61" y="4" width="1.02" height="1.02" fill="#201c15"/><rect x="62" y="4" width="1.02" height="1.02" fill="#21190f"/><rect x="63" y="4" width="1.02" height="1.02" fill="#1d1d07"/><rect x="0" y="5" width="1.02" height="1.02" fill="#2c2d40"/><rect x="1" y="5" width="1.02" height="1.02" fill="#24230c"/><rect x="2" y="5" width="1.02" height="1.02" fill="#19120a"/><rect x="3" y="5" width="1.02" height="1.02" fill="#261b0f"/><rect x="4" y="5" width="1.02" height="1.02" fill="#201f0c"/><rect x="5" y="5" width="1.02" height="1.02" fill="#1b1309"/><rect x="6" y="5" width="1.02" height="1.02" fill="#22170b"/><rect x="7" y="5" width="1.02" height="1.02" fill="#120e08"/><rect x="8" y="5" width="1.02" height="1.02" fill="#353535"/><rect x="9" y="5" width="1.02" height="1.02" fill="#1b140c"/><rect x="10" y="5" width="1.02" height="1.02" fill="#272834"/><rect x="11" y="5" width="1.02" height="1.02" fill="#3b2b15"/><rect x="12" y="5" width="1.02" height="1.02" fill="#2b2c3f"/><rect x="13" y="5" width="1.02" height="1.02" fill="#2b1f10"/><rect x="14" y="5" width="1.02" height="1.02" fill="#0e0a03"/><rect x="15" y="5" width="1.02" height="1.02" fill="#2d2f2f"/><rect x="16" y="5" width="1.02" height="1.02" fill="#1b1d08"/><rect x="17" y="5" width="1.02" height="1.02" fill="#21190f"/><rect x="18" y="5" width="1.02" height="1.02" fill="#0e0a03"/><rect x="19" y="5" width="1.02" height="1.02" fill="#22170b"/><rect x="20" y="5" width="1.02" height="1.02" fill="#1d1d07"/><rect x="21" y="5" width="1.02" height="1.02" fill="#26250e"/><rect x="22" y="5" width="1.02" height="1.02" fill="#21222e"/><rect x="23" y="5" width="1.02" height="1.02" fill="#1e2029"/><rect x="24" y="5" width="1.02" height="1.02" fill="#291d0c"/><rect x="25" y="5" width="1.02" height="1.02" fill="#30220f"/><rect x="26" y="5" width="1.02" height="1.02" fill="#2e2f42"/><rect x="27" y="5" width="1.02" height="1.02" fill="#302310"/><rect x="28" y="5" width="1.02" height="1.02" fill="#0e0a03"/><rect x="29" y="5" width="1.02" height="1.02" fill="#1d1e25"/><rect x="30" y="5" width="1.02" height="1.02" fill="#1b1b26"/><rect x="31" y="5" width="1.02" height="1.02" fill="#2d2e41"/><rect x="32" y="5" width="1.02" height="1.02" fill="#33354a"/><rect x="33" y="5" width="1.02" height="1.02" fill="#2b2d2d"/><rect x="34" y="5" width="1.02" height="1.02" fill="#3b2b15"/><rect x="35" y="5" width="1.02" height="1.02" fill="#352714"/><rect x="36" y="5" width="1.02" height="1.02" fill="#28293c"/><rect x="37" y="5" width="1.02" height="1.02" fill="#271c10"/><rect x="38" y="5" width="1.02" height="1.02" fill="#1d1d0a"/><rect x="39" y="5" width="1.02" height="1.02" fill="#171008"/><rect x="40" y="5" width="1.02" height="1.02" fill="#21180d"/><rect x="41" y="5" width="1.02" height="1.02" fill="#22210a"/><rect x="42" y="5" width="1.02" height="1.02" fill="#1c1e09"/><rect x="43" y="5" width="1.02" height="1.02" fill="#2d2112"/><rect x="44" y="5" width="1.02" height="1.02" fill="#1e160c"/><rect x="45" y="5" width="1.02" height="1.02" fill="#2a2b3e"/><rect x="46" y="5" width="1.02" height="1.02" fill="#424240"/><rect x="47" y="5" width="1.02" height="1.02" fill="#20160c"/><rect x="48" y="5" width="1.02" height="1.02" fill="#1d1f0a"/><rect x="49" y="5" width="1.02" height="1.02" fill="#2d2112"/><rect x="50" y="5" width="1.02" height="1.02" fill="#23220b"/><rect x="51" y="5" width="1.02" height="1.02" fill="#3a2a14"/><rect x="52" y="5" width="1.02" height="1.02" fill="#2e2213"/><rect x="53" y="5" width="1.02" height="1.02" fill="#3f2f19"/><rect x="54" y="5" width="1.02" height="1.02" fill="#30220f"/><rect x="55" y="5" width="1.02" height="1.02" fill="#130f08"/><rect x="56" y="5" width="1.02" height="1.02" fill="#1d1912"/><rect x="57" y="5" width="1.02" height="1.02" fill="#1b1710"/><rect x="58" y="5" width="1.02" height="1.02" fill="#1b1d25"/><rect x="59" y="5" width="1.02" height="1.02" fill="#201c15"/><rect x="60" y="5" width="1.02" height="1.02" fill="#23230d"/><rect x="61" y="5" width="1.02" height="1.02" fill="#2b1f10"/><rect x="62" y="5" width="1.02" height="1.02" fill="#1f170d"/><rect x="63" y="5" width="1.02" height="1.02" fill="#291d0e"/><rect x="0" y="6" width="1.02" height="1.02" fill="#392913"/><rect x="1" y="6" width="1.02" height="1.02" fill="#1f1f0b"/><rect x="2" y="6" width="1.02" height="1.02" fill="#28293c"/><rect x="3" y="6" width="1.02" height="1.02" fill="#2e3030"/><rect x="4" y="6" width="1.02" height="1.02" fill="#1d150b"/><rect x="5" y="6" width="1.02" height="1.02" fill="#22220c"/><rect x="6" y="6" width="1.02" height="1.02" fill="#3a3a3a"/><rect x="7" y="6" width="1.02" height="1.02" fill="#2a2b3e"/><rect x="8" y="6" width="1.02" height="1.02" fill="#1c140a"/><rect x="9" y="6" width="1.02" height="1.02" fill="#41413f"/><rect x="10" y="6" width="1.02" height="1.02" fill="#181109"/><rect x="11" y="6" width="1.02" height="1.02" fill="#1c140a"/><rect x="12" y="6" width="1.02" height="1.02" fill="#332512"/><rect x="13" y="6" width="1.02" height="1.02" fill="#272834"/><rect x="14" y="6" width="1.02" height="1.02" fill="#23252e"/><rect x="15" y="6" width="1.02" height="1.02" fill="#130e07"/><rect x="16" y="6" width="1.02" height="1.02" fill="#33354a"/><rect x="17" y="6" width="1.02" height="1.02" fill="#342613"/><rect x="18" y="6" width="1.02" height="1.02" fill="#24190d"/><rect x="19" y="6" width="1.02" height="1.02" fill="#130e07"/><rect x="20" y="6" width="1.02" height="1.02" fill="#3e2e18"/><rect x="21" y="6" width="1.02" height="1.02" fill="#22232f"/><rect x="22" y="6" width="1.02" height="1.02" fill="#1d1912"/><rect x="23" y="6" width="1.02" height="1.02" fill="#20200a"/><rect x="24" y="6" width="1.02" height="1.02" fill="#21222e"/><rect x="25" y="6" width="1.02" height="1.02" fill="#281c0b"/><rect x="26" y="6" width="1.02" height="1.02" fill="#19120a"/><rect x="27" y="6" width="1.02" height="1.02" fill="#181109"/><rect x="28" y="6" width="1.02" height="1.02" fill="#160f07"/><rect x="29" y="6" width="1.02" height="1.02" fill="#2c2011"/><rect x="30" y="6" width="1.02" height="1.02" fill="#191922"/><rect x="31" y="6" width="1.02" height="1.02" fill="#20222b"/><rect x="32" y="6" width="1.02" height="1.02" fill="#393939"/><rect x="33" y="6" width="1.02" height="1.02" fill="#1d1f0a"/><rect x="34" y="6" width="1.02" height="1.02" fill="#1b1710"/><rect x="35" y="6" width="1.02" height="1.02" fill="#251a0e"/><rect x="36" y="6" width="1.02" height="1.02" fill="#202131"/><rect x="37" y="6" width="1.02" height="1.02" fill="#21160a"/><rect x="38" y="6" width="1.02" height="1.02" fill="#292a3d"/><rect x="39" y="6" width="1.02" height="1.02" fill="#201c15"/><rect x="40" y="6" width="1.02" height="1.02" fill="#130e07"/><rect x="41" y="6" width="1.02" height="1.02" fill="#2f3131"/><rect x="42" y="6" width="1.02" height="1.02" fill="#201c15"/><rect x="43" y="6" width="1.02" height="1.02" fill="#22220c"/><rect x="44" y="6" width="1.02" height="1.02" fill="#23180c"/><rect x="45" y="6" width="1.02" height="1.02" fill="#352714"/><rect x="46" y="6" width="1.02" height="1.02" fill="#454543"/><rect x="47" y="6" width="1.02" height="1.02" fill="#1d140c"/><rect x="48" y="6" width="1.02" height="1.02" fill="#100c05"/><rect x="49" y="6" width="1.02" height="1.02" fill="#343434"/><rect x="50" y="6" width="1.02" height="1.02" fill="#312310"/><rect x="51" y="6" width="1.02" height="1.02" fill="#2e2213"/><rect x="52" y="6" width="1.02" height="1.02" fill="#1d150b"/><rect x="53" y="6" width="1.02" height="1.02" fill="#1d1912"/><rect x="54" y="6" width="1.02" height="1.02" fill="#242531"/><rect x="55" y="6" width="1.02" height="1.02" fill="#362815"/><rect x="56" y="6" width="1.02" height="1.02" fill="#252632"/><rect x="57" y="6" width="1.02" height="1.02" fill="#21160a"/><rect x="58" y="6" width="1.02" height="1.02" fill="#15161d"/><rect x="59" y="6" width="1.02" height="1.02" fill="#21160a"/><rect x="60" y="6" width="1.02" height="1.02" fill="#20200d"/><rect x="61" y="6" width="1.02" height="1.02" fill="#261b0f"/><rect x="62" y="6" width="1.02" height="1.02" fill="#1d160e"/><rect x="63" y="6" width="1.02" height="1.02" fill="#17120b"/><rect x="0" y="7" width="1.02" height="1.02" fill="#2e3045"/><rect x="1" y="7" width="1.02" height="1.02" fill="#21160a"/><rect x="2" y="7" width="1.02" height="1.02" fill="#181a05"/><rect x="3" y="7" width="1.02" height="1.02" fill="#20222b"/><rect x="4" y="7" width="1.02" height="1.02" fill="#150f06"/><rect x="5" y="7" width="1.02" height="1.02" fill="#1f212a"/><rect x="6" y="7" width="1.02" height="1.02" fill="#322411"/><rect x="7" y="7" width="1.02" height="1.02" fill="#322411"/><rect x="8" y="7" width="1.02" height="1.02" fill="#201c15"/><rect x="9" y="7" width="1.02" height="1.02" fill="#2e3045"/><rect x="10" y="7" width="1.02" height="1.02" fill="#20222b"/><rect x="11" y="7" width="1.02" height="1.02" fill="#1b140c"/><rect x="12" y="7" width="1.02" height="1.02" fill="#312310"/><rect x="13" y="7" width="1.02" height="1.02" fill="#141009"/><rect x="14" y="7" width="1.02" height="1.02" fill="#332512"/><rect x="15" y="7" width="1.02" height="1.02" fill="#120e08"/><rect x="16" y="7" width="1.02" height="1.02" fill="#1f170d"/><rect x="17" y="7" width="1.02" height="1.02" fill="#26250e"/><rect x="18" y="7" width="1.02" height="1.02" fill="#2e2213"/><rect x="19" y="7" width="1.02" height="1.02" fill="#24190d"/><rect x="20" y="7" width="1.02" height="1.02" fill="#262733"/><rect x="21" y="7" width="1.02" height="1.02" fill="#20180e"/><rect x="22" y="7" width="1.02" height="1.02" fill="#1a1711"/><rect x="23" y="7" width="1.02" height="1.02" fill="#191906"/><rect x="24" y="7" width="1.02" height="1.02" fill="#19120a"/><rect x="25" y="7" width="1.02" height="1.02" fill="#2f3146"/><rect x="26" y="7" width="1.02" height="1.02" fill="#1f2027"/><rect x="27" y="7" width="1.02" height="1.02" fill="#150f08"/><rect x="28" y="7" width="1.02" height="1.02" fill="#20180e"/><rect x="29" y="7" width="1.02" height="1.02" fill="#1e160c"/><rect x="30" y="7" width="1.02" height="1.02" fill="#2a1e0f"/><rect x="31" y="7" width="1.02" height="1.02" fill="#2c2d40"/><rect x="32" y="7" width="1.02" height="1.02" fill="#3a2a14"/><rect x="33" y="7" width="1.02" height="1.02" fill="#2b2d2d"/><rect x="34" y="7" width="1.02" height="1.02" fill="#2b1f10"/><rect x="35" y="7" width="1.02" height="1.02" fill="#22170b"/><rect x="36" y="7" width="1.02" height="1.02" fill="#1c140a"/><rect x="37" y="7" width="1.02" height="1.02" fill="#20222b"/><rect x="38" y="7" width="1.02" height="1.02" fill="#23180c"/><rect x="39" y="7" width="1.02" height="1.02" fill="#110c05"/><rect x="40" y="7" width="1.02" height="1.02" fill="#2c2d40"/><rect x="41" y="7" width="1.02" height="1.02" fill="#22170b"/><rect x="42" y="7" width="1.02" height="1.02" fill="#262733"/><rect x="43" y="7" width="1.02" height="1.02" fill="#1c1e09"/><rect x="44" y="7" width="1.02" height="1.02" fill="#2d2e41"/><rect x="45" y="7" width="1.02" height="1.02" fill="#1d1f0a"/><rect x="46" y="7" width="1.02" height="1.02" fill="#2e2213"/><rect x="47" y="7" width="1.02" height="1.02" fill="#130f08"/><rect x="48" y="7" width="1.02" height="1.02" fill="#23230d"/><rect x="49" y="7" width="1.02" height="1.02" fill="#2a2b3e"/><rect x="50" y="7" width="1.02" height="1.02" fill="#151009"/><rect x="51" y="7" width="1.02" height="1.02" fill="#1b140c"/><rect x="52" y="7" width="1.02" height="1.02" fill="#1b1309"/><rect x="53" y="7" width="1.02" height="1.02" fill="#191610"/><rect x="54" y="7" width="1.02" height="1.02" fill="#2c2d40"/><rect x="55" y="7" width="1.02" height="1.02" fill="#26250e"/><rect x="56" y="7" width="1.02" height="1.02" fill="#16110a"/><rect x="57" y="7" width="1.02" height="1.02" fill="#110d06"/><rect x="58" y="7" width="1.02" height="1.02" fill="#19120a"/><rect x="59" y="7" width="1.02" height="1.02" fill="#2d2f2f"/><rect x="60" y="7" width="1.02" height="1.02" fill="#332512"/><rect x="61" y="7" width="1.02" height="1.02" fill="#1e160c"/><rect x="62" y="7" width="1.02" height="1.02" fill="#1c1d24"/><rect x="63" y="7" width="1.02" height="1.02" fill="#120e08"/><rect x="0" y="8" width="1.02" height="1.02" fill="#2a2c2c"/><rect x="1" y="8" width="1.02" height="1.02" fill="#41413f"/><rect x="2" y="8" width="1.02" height="1.02" fill="#23230d"/><rect x="3" y="8" width="1.02" height="1.02" fill="#3e2e18"/><rect x="4" y="8" width="1.02" height="1.02" fill="#454543"/><rect x="5" y="8" width="1.02" height="1.02" fill="#25240d"/><rect x="6" y="8" width="1.02" height="1.02" fill="#2e2f42"/><rect x="7" y="8" width="1.02" height="1.02" fill="#2b1f10"/><rect x="8" y="8" width="1.02" height="1.02" fill="#33354a"/><rect x="9" y="8" width="1.02" height="1.02" fill="#322411"/><rect x="10" y="8" width="1.02" height="1.02" fill="#1e160c"/><rect x="11" y="8" width="1.02" height="1.02" fill="#1e2029"/><rect x="12" y="8" width="1.02" height="1.02" fill="#1d1d07"/><rect x="13" y="8" width="1.02" height="1.02" fill="#21210b"/><rect x="14" y="8" width="1.02" height="1.02" fill="#262733"/><rect x="15" y="8" width="1.02" height="1.02" fill="#0c0903"/><rect x="16" y="8" width="1.02" height="1.02" fill="#251a0e"/><rect x="17" y="8" width="1.02" height="1.02" fill="#1d150b"/><rect x="18" y="8" width="1.02" height="1.02" fill="#21190f"/><rect x="19" y="8" width="1.02" height="1.02" fill="#16110a"/><rect x="20" y="8" width="1.02" height="1.02" fill="#0f0b04"/><rect x="21" y="8" width="1.02" height="1.02" fill="#261b0f"/><rect x="22" y="8" width="1.02" height="1.02" fill="#252632"/><rect x="23" y="8" width="1.02" height="1.02" fill="#151505"/><rect x="24" y="8" width="1.02" height="1.02" fill="#1f170d"/><rect x="25" y="8" width="1.02" height="1.02" fill="#282a3c"/><rect x="26" y="8" width="1.02" height="1.02" fill="#2b2c3f"/><rect x="27" y="8" width="1.02" height="1.02" fill="#120d06"/><rect x="28" y="8" width="1.02" height="1.02" fill="#1f1b14"/><rect x="29" y="8" width="1.02" height="1.02" fill="#1d1912"/><rect x="30" y="8" width="1.02" height="1.02" fill="#2d2e41"/><rect x="31" y="8" width="1.02" height="1.02" fill="#252632"/><rect x="32" y="8" width="1.02" height="1.02" fill="#332613"/><rect x="33" y="8" width="1.02" height="1.02" fill="#251a0e"/><rect x="34" y="8" width="1.02" height="1.02" fill="#28293c"/><rect x="35" y="8" width="1.02" height="1.02" fill="#181109"/><rect x="36" y="8" width="1.02" height="1.02" fill="#1a130a"/><rect x="37" y="8" width="1.02" height="1.02" fill="#181109"/><rect x="38" y="8" width="1.02" height="1.02" fill="#17120b"/><rect x="39" y="8" width="1.02" height="1.02" fill="#1e160c"/><rect x="40" y="8" width="1.02" height="1.02" fill="#2b2d2d"/><rect x="41" y="8" width="1.02" height="1.02" fill="#232430"/><rect x="42" y="8" width="1.02" height="1.02" fill="#2c2d40"/><rect x="43" y="8" width="1.02" height="1.02" fill="#24190d"/><rect x="44" y="8" width="1.02" height="1.02" fill="#1c1e09"/><rect x="45" y="8" width="1.02" height="1.02" fill="#171907"/><rect x="46" y="8" width="1.02" height="1.02" fill="#241a0d"/><rect x="47" y="8" width="1.02" height="1.02" fill="#1e200b"/><rect x="48" y="8" width="1.02" height="1.02" fill="#1e1f26"/><rect x="49" y="8" width="1.02" height="1.02" fill="#3e2e18"/><rect x="50" y="8" width="1.02" height="1.02" fill="#0f0a04"/><rect x="51" y="8" width="1.02" height="1.02" fill="#160f07"/><rect x="52" y="8" width="1.02" height="1.02" fill="#282710"/><rect x="53" y="8" width="1.02" height="1.02" fill="#17140f"/><rect x="54" y="8" width="1.02" height="1.02" fill="#28293a"/><rect x="55" y="8" width="1.02" height="1.02" fill="#1f2027"/><rect x="56" y="8" width="1.02" height="1.02" fill="#1b1309"/><rect x="57" y="8" width="1.02" height="1.02" fill="#140f08"/><rect x="58" y="8" width="1.02" height="1.02" fill="#271c10"/><rect x="59" y="8" width="1.02" height="1.02" fill="#1d1912"/><rect x="60" y="8" width="1.02" height="1.02" fill="#2d2111"/><rect x="61" y="8" width="1.02" height="1.02" fill="#19120a"/><rect x="62" y="8" width="1.02" height="1.02" fill="#16110a"/><rect x="63" y="8" width="1.02" height="1.02" fill="#181a05"/><rect x="0" y="9" width="1.02" height="1.02" fill="#271c10"/><rect x="1" y="9" width="1.02" height="1.02" fill="#3a3a39"/><rect x="2" y="9" width="1.02" height="1.02" fill="#130f08"/><rect x="3" y="9" width="1.02" height="1.02" fill="#160f07"/><rect x="4" y="9" width="1.02" height="1.02" fill="#2d2e41"/><rect x="5" y="9" width="1.02" height="1.02" fill="#3e2e18"/><rect x="6" y="9" width="1.02" height="1.02" fill="#1d1f28"/><rect x="7" y="9" width="1.02" height="1.02" fill="#261b0f"/><rect x="8" y="9" width="1.02" height="1.02" fill="#1c1811"/><rect x="9" y="9" width="1.02" height="1.02" fill="#1e1a13"/><rect x="10" y="9" width="1.02" height="1.02" fill="#181109"/><rect x="11" y="9" width="1.02" height="1.02" fill="#33354a"/><rect x="12" y="9" width="1.02" height="1.02" fill="#363636"/><rect x="13" y="9" width="1.02" height="1.02" fill="#1e160c"/><rect x="14" y="9" width="1.02" height="1.02" fill="#23252e"/><rect x="15" y="9" width="1.02" height="1.02" fill="#30220f"/><rect x="16" y="9" width="1.02" height="1.02" fill="#1c1d24"/><rect x="17" y="9" width="1.02" height="1.02" fill="#272834"/><rect x="18" y="9" width="1.02" height="1.02" fill="#1b1d08"/><rect x="19" y="9" width="1.02" height="1.02" fill="#20180e"/><rect x="20" y="9" width="1.02" height="1.02" fill="#2e2f42"/><rect x="21" y="9" width="1.02" height="1.02" fill="#1f212a"/><rect x="22" y="9" width="1.02" height="1.02" fill="#23180c"/><rect x="23" y="9" width="1.02" height="1.02" fill="#191b06"/><rect x="24" y="9" width="1.02" height="1.02" fill="#1d1f0a"/><rect x="25" y="9" width="1.02" height="1.02" fill="#151009"/><rect x="26" y="9" width="1.02" height="1.02" fill="#2e2f42"/><rect x="27" y="9" width="1.02" height="1.02" fill="#363636"/><rect x="28" y="9" width="1.02" height="1.02" fill="#33354a"/><rect x="29" y="9" width="1.02" height="1.02" fill="#271c10"/><rect x="30" y="9" width="1.02" height="1.02" fill="#141009"/><rect x="31" y="9" width="1.02" height="1.02" fill="#1f202b"/><rect x="32" y="9" width="1.02" height="1.02" fill="#1a1c07"/><rect x="33" y="9" width="1.02" height="1.02" fill="#171008"/><rect x="34" y="9" width="1.02" height="1.02" fill="#322411"/><rect x="35" y="9" width="1.02" height="1.02" fill="#3f2f19"/><rect x="36" y="9" width="1.02" height="1.02" fill="#1d150b"/><rect x="37" y="9" width="1.02" height="1.02" fill="#201c15"/><rect x="38" y="9" width="1.02" height="1.02" fill="#120e08"/><rect x="39" y="9" width="1.02" height="1.02" fill="#3d2d17"/><rect x="40" y="9" width="1.02" height="1.02" fill="#212323"/><rect x="41" y="9" width="1.02" height="1.02" fill="#1b1d08"/><rect x="42" y="9" width="1.02" height="1.02" fill="#332512"/><rect x="43" y="9" width="1.02" height="1.02" fill="#1e150b"/><rect x="44" y="9" width="1.02" height="1.02" fill="#1f1f09"/><rect x="45" y="9" width="1.02" height="1.02" fill="#2c2011"/><rect x="46" y="9" width="1.02" height="1.02" fill="#1b1308"/><rect x="47" y="9" width="1.02" height="1.02" fill="#181a08"/><rect x="48" y="9" width="1.02" height="1.02" fill="#17120b"/><rect x="49" y="9" width="1.02" height="1.02" fill="#16110a"/><rect x="50" y="9" width="1.02" height="1.02" fill="#3a2a14"/><rect x="51" y="9" width="1.02" height="1.02" fill="#2d2f2f"/><rect x="52" y="9" width="1.02" height="1.02" fill="#181109"/><rect x="53" y="9" width="1.02" height="1.02" fill="#353535"/><rect x="54" y="9" width="1.02" height="1.02" fill="#212230"/><rect x="55" y="9" width="1.02" height="1.02" fill="#392913"/><rect x="56" y="9" width="1.02" height="1.02" fill="#3e2e18"/><rect x="57" y="9" width="1.02" height="1.02" fill="#2e3045"/><rect x="58" y="9" width="1.02" height="1.02" fill="#20170c"/><rect x="59" y="9" width="1.02" height="1.02" fill="#2e3030"/><rect x="60" y="9" width="1.02" height="1.02" fill="#140f08"/><rect x="61" y="9" width="1.02" height="1.02" fill="#23180c"/><rect x="62" y="9" width="1.02" height="1.02" fill="#2f2314"/><rect x="63" y="9" width="1.02" height="1.02" fill="#242531"/><rect x="0" y="10" width="1.02" height="1.02" fill="#22170b"/><rect x="1" y="10" width="1.02" height="1.02" fill="#3f2f19"/><rect x="2" y="10" width="1.02" height="1.02" fill="#2e3045"/><rect x="3" y="10" width="1.02" height="1.02" fill="#16110a"/><rect x="4" y="10" width="1.02" height="1.02" fill="#252636"/><rect x="5" y="10" width="1.02" height="1.02" fill="#261b0f"/><rect x="6" y="10" width="1.02" height="1.02" fill="#22170b"/><rect x="7" y="10" width="1.02" height="1.02" fill="#19120a"/><rect x="8" y="10" width="1.02" height="1.02" fill="#1c140a"/><rect x="9" y="10" width="1.02" height="1.02" fill="#322411"/><rect x="10" y="10" width="1.02" height="1.02" fill="#23180c"/><rect x="11" y="10" width="1.02" height="1.02" fill="#1a130b"/><rect x="12" y="10" width="1.02" height="1.02" fill="#313131"/><rect x="13" y="10" width="1.02" height="1.02" fill="#21190f"/><rect x="14" y="10" width="1.02" height="1.02" fill="#2b1f10"/><rect x="15" y="10" width="1.02" height="1.02" fill="#2a1e0f"/><rect x="16" y="10" width="1.02" height="1.02" fill="#17171d"/><rect x="17" y="10" width="1.02" height="1.02" fill="#312310"/><rect x="18" y="10" width="1.02" height="1.02" fill="#3b2b15"/><rect x="19" y="10" width="1.02" height="1.02" fill="#0f0b04"/><rect x="20" y="10" width="1.02" height="1.02" fill="#1c140a"/><rect x="21" y="10" width="1.02" height="1.02" fill="#2d2112"/><rect x="22" y="10" width="1.02" height="1.02" fill="#2c2d40"/><rect x="23" y="10" width="1.02" height="1.02" fill="#121402"/><rect x="24" y="10" width="1.02" height="1.02" fill="#1e2029"/><rect x="25" y="10" width="1.02" height="1.02" fill="#1a130b"/><rect x="26" y="10" width="1.02" height="1.02" fill="#3c2c16"/><rect x="27" y="10" width="1.02" height="1.02" fill="#1e200b"/><rect x="28" y="10" width="1.02" height="1.02" fill="#1b1309"/><rect x="29" y="10" width="1.02" height="1.02" fill="#241b10"/><rect x="30" y="10" width="1.02" height="1.02" fill="#23220b"/><rect x="31" y="10" width="1.02" height="1.02" fill="#22210a"/><rect x="32" y="10" width="1.02" height="1.02" fill="#130e07"/><rect x="33" y="10" width="1.02" height="1.02" fill="#110c05"/><rect x="34" y="10" width="1.02" height="1.02" fill="#362815"/><rect x="35" y="10" width="1.02" height="1.02" fill="#130e07"/><rect x="36" y="10" width="1.02" height="1.02" fill="#434341"/><rect x="37" y="10" width="1.02" height="1.02" fill="#160f07"/><rect x="38" y="10" width="1.02" height="1.02" fill="#3a2a14"/><rect x="39" y="10" width="1.02" height="1.02" fill="#3f2f19"/><rect x="40" y="10" width="1.02" height="1.02" fill="#2b1f10"/><rect x="41" y="10" width="1.02" height="1.02" fill="#181907"/><rect x="42" y="10" width="1.02" height="1.02" fill="#1b140c"/><rect x="43" y="10" width="1.02" height="1.02" fill="#261b0f"/><rect x="44" y="10" width="1.02" height="1.02" fill="#1e160c"/><rect x="45" y="10" width="1.02" height="1.02" fill="#21222e"/><rect x="46" y="10" width="1.02" height="1.02" fill="#1c1e09"/><rect x="47" y="10" width="1.02" height="1.02" fill="#3c2c16"/><rect x="48" y="10" width="1.02" height="1.02" fill="#261b0f"/><rect x="49" y="10" width="1.02" height="1.02" fill="#140f08"/><rect x="50" y="10" width="1.02" height="1.02" fill="#322411"/><rect x="51" y="10" width="1.02" height="1.02" fill="#1b1d08"/><rect x="52" y="10" width="1.02" height="1.02" fill="#141009"/><rect x="53" y="10" width="1.02" height="1.02" fill="#120e07"/><rect x="54" y="10" width="1.02" height="1.02" fill="#1e2029"/><rect x="55" y="10" width="1.02" height="1.02" fill="#232430"/><rect x="56" y="10" width="1.02" height="1.02" fill="#332512"/><rect x="57" y="10" width="1.02" height="1.02" fill="#27293b"/><rect x="58" y="10" width="1.02" height="1.02" fill="#292a3d"/><rect x="59" y="10" width="1.02" height="1.02" fill="#1f1b14"/><rect x="60" y="10" width="1.02" height="1.02" fill="#0e0903"/><rect x="61" y="10" width="1.02" height="1.02" fill="#20160c"/><rect x="62" y="10" width="1.02" height="1.02" fill="#1a1c07"/><rect x="63" y="10" width="1.02" height="1.02" fill="#21210b"/><rect x="0" y="11" width="1.02" height="1.02" fill="#1a1006"/><rect x="1" y="11" width="1.02" height="1.02" fill="#130e07"/><rect x="2" y="11" width="1.02" height="1.02" fill="#26283a"/><rect x="3" y="11" width="1.02" height="1.02" fill="#3d2d17"/><rect x="4" y="11" width="1.02" height="1.02" fill="#3d2d17"/><rect x="5" y="11" width="1.02" height="1.02" fill="#181109"/><rect x="6" y="11" width="1.02" height="1.02" fill="#0f0b04"/><rect x="7" y="11" width="1.02" height="1.02" fill="#23252e"/><rect x="8" y="11" width="1.02" height="1.02" fill="#2d2e41"/><rect x="9" y="11" width="1.02" height="1.02" fill="#110d06"/><rect x="10" y="11" width="1.02" height="1.02" fill="#1e160c"/><rect x="11" y="11" width="1.02" height="1.02" fill="#312310"/><rect x="12" y="11" width="1.02" height="1.02" fill="#1a160f"/><rect x="13" y="11" width="1.02" height="1.02" fill="#2b1f10"/><rect x="14" y="11" width="1.02" height="1.02" fill="#0f0b04"/><rect x="15" y="11" width="1.02" height="1.02" fill="#2c2d40"/><rect x="16" y="11" width="1.02" height="1.02" fill="#16161b"/><rect x="17" y="11" width="1.02" height="1.02" fill="#1d1e25"/><rect x="18" y="11" width="1.02" height="1.02" fill="#251a0e"/><rect x="19" y="11" width="1.02" height="1.02" fill="#2a2c2c"/><rect x="20" y="11" width="1.02" height="1.02" fill="#2d2e41"/><rect x="21" y="11" width="1.02" height="1.02" fill="#141009"/><rect x="22" y="11" width="1.02" height="1.02" fill="#1d150b"/><rect x="23" y="11" width="1.02" height="1.02" fill="#2b2c3f"/><rect x="24" y="11" width="1.02" height="1.02" fill="#3d2d17"/><rect x="25" y="11" width="1.02" height="1.02" fill="#161009"/><rect x="26" y="11" width="1.02" height="1.02" fill="#201c15"/><rect x="27" y="11" width="1.02" height="1.02" fill="#181a05"/><rect x="28" y="11" width="1.02" height="1.02" fill="#1c1811"/><rect x="29" y="11" width="1.02" height="1.02" fill="#1f170d"/><rect x="30" y="11" width="1.02" height="1.02" fill="#0e0a03"/><rect x="31" y="11" width="1.02" height="1.02" fill="#25240d"/><rect x="32" y="11" width="1.02" height="1.02" fill="#362815"/><rect x="33" y="11" width="1.02" height="1.02" fill="#160f07"/><rect x="34" y="11" width="1.02" height="1.02" fill="#3f2f19"/><rect x="35" y="11" width="1.02" height="1.02" fill="#1b1309"/><rect x="36" y="11" width="1.02" height="1.02" fill="#383836"/><rect x="37" y="11" width="1.02" height="1.02" fill="#120e07"/><rect x="38" y="11" width="1.02" height="1.02" fill="#1d1912"/><rect x="39" y="11" width="1.02" height="1.02" fill="#332512"/><rect x="40" y="11" width="1.02" height="1.02" fill="#1b1c23"/><rect x="41" y="11" width="1.02" height="1.02" fill="#131405"/><rect x="42" y="11" width="1.02" height="1.02" fill="#1b1c23"/><rect x="43" y="11" width="1.02" height="1.02" fill="#434341"/><rect x="44" y="11" width="1.02" height="1.02" fill="#1c1d24"/><rect x="45" y="11" width="1.02" height="1.02" fill="#22232f"/><rect x="46" y="11" width="1.02" height="1.02" fill="#17120b"/><rect x="47" y="11" width="1.02" height="1.02" fill="#352714"/><rect x="48" y="11" width="1.02" height="1.02" fill="#2c2e2e"/><rect x="49" y="11" width="1.02" height="1.02" fill="#1a130b"/><rect x="50" y="11" width="1.02" height="1.02" fill="#16110a"/><rect x="51" y="11" width="1.02" height="1.02" fill="#3e2e18"/><rect x="52" y="11" width="1.02" height="1.02" fill="#1b1309"/><rect x="53" y="11" width="1.02" height="1.02" fill="#392913"/><rect x="54" y="11" width="1.02" height="1.02" fill="#151009"/><rect x="55" y="11" width="1.02" height="1.02" fill="#1b1b26"/><rect x="56" y="11" width="1.02" height="1.02" fill="#141009"/><rect x="57" y="11" width="1.02" height="1.02" fill="#1a130b"/><rect x="58" y="11" width="1.02" height="1.02" fill="#171008"/><rect x="59" y="11" width="1.02" height="1.02" fill="#110c05"/><rect x="60" y="11" width="1.02" height="1.02" fill="#0d0803"/><rect x="61" y="11" width="1.02" height="1.02" fill="#201c15"/><rect x="62" y="11" width="1.02" height="1.02" fill="#1c1d24"/><rect x="63" y="11" width="1.02" height="1.02" fill="#312310"/><rect x="0" y="12" width="1.02" height="1.02" fill="#180f07"/><rect x="1" y="12" width="1.02" height="1.02" fill="#110d07"/><rect x="2" y="12" width="1.02" height="1.02" fill="#1e202f"/><rect x="3" y="12" width="1.02" height="1.02" fill="#120d06"/><rect x="4" y="12" width="1.02" height="1.02" fill="#140f08"/><rect x="5" y="12" width="1.02" height="1.02" fill="#120c05"/><rect x="6" y="12" width="1.02" height="1.02" fill="#3f2f19"/><rect x="7" y="12" width="1.02" height="1.02" fill="#1d150b"/><rect x="8" y="12" width="1.02" height="1.02" fill="#1b1309"/><rect x="9" y="12" width="1.02" height="1.02" fill="#19120a"/><rect x="10" y="12" width="1.02" height="1.02" fill="#22210a"/><rect x="11" y="12" width="1.02" height="1.02" fill="#2a1e0f"/><rect x="12" y="12" width="1.02" height="1.02" fill="#332512"/><rect x="13" y="12" width="1.02" height="1.02" fill="#3f2f19"/><rect x="14" y="12" width="1.02" height="1.02" fill="#110c05"/><rect x="15" y="12" width="1.02" height="1.02" fill="#191b06"/><rect x="16" y="12" width="1.02" height="1.02" fill="#0f0b04"/><rect x="17" y="12" width="1.02" height="1.02" fill="#23180c"/><rect x="18" y="12" width="1.02" height="1.02" fill="#291d0e"/><rect x="19" y="12" width="1.02" height="1.02" fill="#1a130b"/><rect x="20" y="12" width="1.02" height="1.02" fill="#1e1e08"/><rect x="21" y="12" width="1.02" height="1.02" fill="#1e160c"/><rect x="22" y="12" width="1.02" height="1.02" fill="#110d06"/><rect x="23" y="12" width="1.02" height="1.02" fill="#20180e"/><rect x="24" y="12" width="1.02" height="1.02" fill="#21232c"/><rect x="25" y="12" width="1.02" height="1.02" fill="#120e07"/><rect x="26" y="12" width="1.02" height="1.02" fill="#171008"/><rect x="27" y="12" width="1.02" height="1.02" fill="#392913"/><rect x="28" y="12" width="1.02" height="1.02" fill="#1b1309"/><rect x="29" y="12" width="1.02" height="1.02" fill="#0e0a03"/><rect x="30" y="12" width="1.02" height="1.02" fill="#2f2314"/><rect x="31" y="12" width="1.02" height="1.02" fill="#21160a"/><rect x="32" y="12" width="1.02" height="1.02" fill="#0f0b04"/><rect x="33" y="12" width="1.02" height="1.02" fill="#110b05"/><rect x="34" y="12" width="1.02" height="1.02" fill="#352714"/><rect x="35" y="12" width="1.02" height="1.02" fill="#1f212a"/><rect x="36" y="12" width="1.02" height="1.02" fill="#1d1f0a"/><rect x="37" y="12" width="1.02" height="1.02" fill="#312310"/><rect x="38" y="12" width="1.02" height="1.02" fill="#1a1711"/><rect x="39" y="12" width="1.02" height="1.02" fill="#2e3045"/><rect x="40" y="12" width="1.02" height="1.02" fill="#2e2f42"/><rect x="41" y="12" width="1.02" height="1.02" fill="#1e1e08"/><rect x="42" y="12" width="1.02" height="1.02" fill="#3e2e18"/><rect x="43" y="12" width="1.02" height="1.02" fill="#2e3045"/><rect x="44" y="12" width="1.02" height="1.02" fill="#0f0b04"/><rect x="45" y="12" width="1.02" height="1.02" fill="#352714"/><rect x="46" y="12" width="1.02" height="1.02" fill="#2d2112"/><rect x="47" y="12" width="1.02" height="1.02" fill="#1f1b14"/><rect x="48" y="12" width="1.02" height="1.02" fill="#21160a"/><rect x="49" y="12" width="1.02" height="1.02" fill="#1d1f28"/><rect x="50" y="12" width="1.02" height="1.02" fill="#120d06"/><rect x="51" y="12" width="1.02" height="1.02" fill="#312310"/><rect x="52" y="12" width="1.02" height="1.02" fill="#24190d"/><rect x="53" y="12" width="1.02" height="1.02" fill="#181109"/><rect x="54" y="12" width="1.02" height="1.02" fill="#1e160c"/><rect x="55" y="12" width="1.02" height="1.02" fill="#323449"/><rect x="56" y="12" width="1.02" height="1.02" fill="#130f09"/><rect x="57" y="12" width="1.02" height="1.02" fill="#2b2c3f"/><rect x="58" y="12" width="1.02" height="1.02" fill="#3b2b15"/><rect x="59" y="12" width="1.02" height="1.02" fill="#2d2112"/><rect x="60" y="12" width="1.02" height="1.02" fill="#363636"/><rect x="61" y="12" width="1.02" height="1.02" fill="#312310"/><rect x="62" y="12" width="1.02" height="1.02" fill="#2f3146"/><rect x="63" y="12" width="1.02" height="1.02" fill="#1c140a"/><rect x="0" y="13" width="1.02" height="1.02" fill="#312310"/><rect x="1" y="13" width="1.02" height="1.02" fill="#3a2a14"/><rect x="2" y="13" width="1.02" height="1.02" fill="#1b1d08"/><rect x="3" y="13" width="1.02" height="1.02" fill="#2d2112"/><rect x="4" y="13" width="1.02" height="1.02" fill="#282710"/><rect x="5" y="13" width="1.02" height="1.02" fill="#232430"/><rect x="6" y="13" width="1.02" height="1.02" fill="#322411"/><rect x="7" y="13" width="1.02" height="1.02" fill="#2e3045"/><rect x="8" y="13" width="1.02" height="1.02" fill="#100c05"/><rect x="9" y="13" width="1.02" height="1.02" fill="#24190d"/><rect x="10" y="13" width="1.02" height="1.02" fill="#262733"/><rect x="11" y="13" width="1.02" height="1.02" fill="#2b2d2d"/><rect x="12" y="13" width="1.02" height="1.02" fill="#2b1f0f"/><rect x="13" y="13" width="1.02" height="1.02" fill="#0e0a03"/><rect x="14" y="13" width="1.02" height="1.02" fill="#352714"/><rect x="15" y="13" width="1.02" height="1.02" fill="#22242d"/><rect x="16" y="13" width="1.02" height="1.02" fill="#21160a"/><rect x="17" y="13" width="1.02" height="1.02" fill="#24230c"/><rect x="18" y="13" width="1.02" height="1.02" fill="#28293c"/><rect x="19" y="13" width="1.02" height="1.02" fill="#1c1e09"/><rect x="20" y="13" width="1.02" height="1.02" fill="#322411"/><rect x="21" y="13" width="1.02" height="1.02" fill="#362815"/><rect x="22" y="13" width="1.02" height="1.02" fill="#21160a"/><rect x="23" y="13" width="1.02" height="1.02" fill="#2e3045"/><rect x="24" y="13" width="1.02" height="1.02" fill="#1f1b14"/><rect x="25" y="13" width="1.02" height="1.02" fill="#3e2e18"/><rect x="26" y="13" width="1.02" height="1.02" fill="#150f08"/><rect x="27" y="13" width="1.02" height="1.02" fill="#1b1309"/><rect x="28" y="13" width="1.02" height="1.02" fill="#23220b"/><rect x="29" y="13" width="1.02" height="1.02" fill="#17120b"/><rect x="30" y="13" width="1.02" height="1.02" fill="#1b1d08"/><rect x="31" y="13" width="1.02" height="1.02" fill="#251a0e"/><rect x="32" y="13" width="1.02" height="1.02" fill="#20200a"/><rect x="33" y="13" width="1.02" height="1.02" fill="#110c07"/><rect x="34" y="13" width="1.02" height="1.02" fill="#303247"/><rect x="35" y="13" width="1.02" height="1.02" fill="#1d1f27"/><rect x="36" y="13" width="1.02" height="1.02" fill="#2c2011"/><rect x="37" y="13" width="1.02" height="1.02" fill="#291d0c"/><rect x="38" y="13" width="1.02" height="1.02" fill="#19120a"/><rect x="39" y="13" width="1.02" height="1.02" fill="#16110a"/><rect x="40" y="13" width="1.02" height="1.02" fill="#120e07"/><rect x="41" y="13" width="1.02" height="1.02" fill="#454543"/><rect x="42" y="13" width="1.02" height="1.02" fill="#342613"/><rect x="43" y="13" width="1.02" height="1.02" fill="#2a1e0f"/><rect x="44" y="13" width="1.02" height="1.02" fill="#120d06"/><rect x="45" y="13" width="1.02" height="1.02" fill="#1c1811"/><rect x="46" y="13" width="1.02" height="1.02" fill="#1c1811"/><rect x="47" y="13" width="1.02" height="1.02" fill="#18150f"/><rect x="48" y="13" width="1.02" height="1.02" fill="#22170b"/><rect x="49" y="13" width="1.02" height="1.02" fill="#22170b"/><rect x="50" y="13" width="1.02" height="1.02" fill="#1c140a"/><rect x="51" y="13" width="1.02" height="1.02" fill="#3e2e18"/><rect x="52" y="13" width="1.02" height="1.02" fill="#1f160c"/><rect x="53" y="13" width="1.02" height="1.02" fill="#1f1b14"/><rect x="54" y="13" width="1.02" height="1.02" fill="#19120a"/><rect x="55" y="13" width="1.02" height="1.02" fill="#16110a"/><rect x="56" y="13" width="1.02" height="1.02" fill="#242531"/><rect x="57" y="13" width="1.02" height="1.02" fill="#171008"/><rect x="58" y="13" width="1.02" height="1.02" fill="#2a2b3e"/><rect x="59" y="13" width="1.02" height="1.02" fill="#291d0e"/><rect x="60" y="13" width="1.02" height="1.02" fill="#3a2a14"/><rect x="61" y="13" width="1.02" height="1.02" fill="#2c2011"/><rect x="62" y="13" width="1.02" height="1.02" fill="#2d2112"/><rect x="63" y="13" width="1.02" height="1.02" fill="#1a130a"/><rect x="0" y="14" width="1.02" height="1.02" fill="#362815"/><rect x="1" y="14" width="1.02" height="1.02" fill="#1d1f28"/><rect x="2" y="14" width="1.02" height="1.02" fill="#130f08"/><rect x="3" y="14" width="1.02" height="1.02" fill="#22210a"/><rect x="4" y="14" width="1.02" height="1.02" fill="#392913"/><rect x="5" y="14" width="1.02" height="1.02" fill="#20202b"/><rect x="6" y="14" width="1.02" height="1.02" fill="#1b1309"/><rect x="7" y="14" width="1.02" height="1.02" fill="#17120b"/><rect x="8" y="14" width="1.02" height="1.02" fill="#0a0701"/><rect x="9" y="14" width="1.02" height="1.02" fill="#1d140a"/><rect x="10" y="14" width="1.02" height="1.02" fill="#141009"/><rect x="11" y="14" width="1.02" height="1.02" fill="#1a130b"/><rect x="12" y="14" width="1.02" height="1.02" fill="#110d06"/><rect x="13" y="14" width="1.02" height="1.02" fill="#0b0701"/><rect x="14" y="14" width="1.02" height="1.02" fill="#201c15"/><rect x="15" y="14" width="1.02" height="1.02" fill="#202129"/><rect x="16" y="14" width="1.02" height="1.02" fill="#1a1006"/><rect x="17" y="14" width="1.02" height="1.02" fill="#1d1e25"/><rect x="18" y="14" width="1.02" height="1.02" fill="#2f3131"/><rect x="19" y="14" width="1.02" height="1.02" fill="#3d2d17"/><rect x="20" y="14" width="1.02" height="1.02" fill="#2a1d0d"/><rect x="21" y="14" width="1.02" height="1.02" fill="#2d2112"/><rect x="22" y="14" width="1.02" height="1.02" fill="#352714"/><rect x="23" y="14" width="1.02" height="1.02" fill="#1c1811"/><rect x="24" y="14" width="1.02" height="1.02" fill="#1d150b"/><rect x="25" y="14" width="1.02" height="1.02" fill="#392913"/><rect x="26" y="14" width="1.02" height="1.02" fill="#2a2b3e"/><rect x="27" y="14" width="1.02" height="1.02" fill="#322411"/><rect x="28" y="14" width="1.02" height="1.02" fill="#1b140c"/><rect x="29" y="14" width="1.02" height="1.02" fill="#14100a"/><rect x="30" y="14" width="1.02" height="1.02" fill="#2f2314"/><rect x="31" y="14" width="1.02" height="1.02" fill="#130e07"/><rect x="32" y="14" width="1.02" height="1.02" fill="#2e2f42"/><rect x="33" y="14" width="1.02" height="1.02" fill="#23180c"/><rect x="34" y="14" width="1.02" height="1.02" fill="#342613"/><rect x="35" y="14" width="1.02" height="1.02" fill="#3e2e18"/><rect x="36" y="14" width="1.02" height="1.02" fill="#352714"/><rect x="37" y="14" width="1.02" height="1.02" fill="#444442"/><rect x="38" y="14" width="1.02" height="1.02" fill="#2b1f10"/><rect x="39" y="14" width="1.02" height="1.02" fill="#1e160c"/><rect x="40" y="14" width="1.02" height="1.02" fill="#0f0b04"/><rect x="41" y="14" width="1.02" height="1.02" fill="#322411"/><rect x="42" y="14" width="1.02" height="1.02" fill="#0e0a03"/><rect x="43" y="14" width="1.02" height="1.02" fill="#151009"/><rect x="44" y="14" width="1.02" height="1.02" fill="#1c1811"/><rect x="45" y="14" width="1.02" height="1.02" fill="#272834"/><rect x="46" y="14" width="1.02" height="1.02" fill="#24230c"/><rect x="47" y="14" width="1.02" height="1.02" fill="#1e2029"/><rect x="48" y="14" width="1.02" height="1.02" fill="#1e160c"/><rect x="49" y="14" width="1.02" height="1.02" fill="#120d06"/><rect x="50" y="14" width="1.02" height="1.02" fill="#2d2112"/><rect x="51" y="14" width="1.02" height="1.02" fill="#322411"/><rect x="52" y="14" width="1.02" height="1.02" fill="#27260f"/><rect x="53" y="14" width="1.02" height="1.02" fill="#3e2e18"/><rect x="54" y="14" width="1.02" height="1.02" fill="#22232f"/><rect x="55" y="14" width="1.02" height="1.02" fill="#22220c"/><rect x="56" y="14" width="1.02" height="1.02" fill="#0f0b04"/><rect x="57" y="14" width="1.02" height="1.02" fill="#130d06"/><rect x="58" y="14" width="1.02" height="1.02" fill="#3b2b15"/><rect x="59" y="14" width="1.02" height="1.02" fill="#424240"/><rect x="60" y="14" width="1.02" height="1.02" fill="#1f1f09"/><rect x="61" y="14" width="1.02" height="1.02" fill="#373737"/><rect x="62" y="14" width="1.02" height="1.02" fill="#1e2029"/><rect x="63" y="14" width="1.02" height="1.02" fill="#140e06"/><rect x="0" y="15" width="1.02" height="1.02" fill="#130e07"/><rect x="1" y="15" width="1.02" height="1.02" fill="#1b140c"/><rect x="2" y="15" width="1.02" height="1.02" fill="#1b140c"/><rect x="3" y="15" width="1.02" height="1.02" fill="#282710"/><rect x="4" y="15" width="1.02" height="1.02" fill="#332512"/><rect x="5" y="15" width="1.02" height="1.02" fill="#323449"/><rect x="6" y="15" width="1.02" height="1.02" fill="#0f0b04"/><rect x="7" y="15" width="1.02" height="1.02" fill="#16110a"/><rect x="8" y="15" width="1.02" height="1.02" fill="#393939"/><rect x="9" y="15" width="1.02" height="1.02" fill="#21222e"/><rect x="10" y="15" width="1.02" height="1.02" fill="#3d2d17"/><rect x="11" y="15" width="1.02" height="1.02" fill="#21232c"/><rect x="12" y="15" width="1.02" height="1.02" fill="#2f2314"/><rect x="13" y="15" width="1.02" height="1.02" fill="#21210b"/><rect x="14" y="15" width="1.02" height="1.02" fill="#1e1b15"/><rect x="15" y="15" width="1.02" height="1.02" fill="#1b1710"/><rect x="16" y="15" width="1.02" height="1.02" fill="#1e160c"/><rect x="17" y="15" width="1.02" height="1.02" fill="#21222e"/><rect x="18" y="15" width="1.02" height="1.02" fill="#20180e"/><rect x="19" y="15" width="1.02" height="1.02" fill="#3c2c16"/><rect x="20" y="15" width="1.02" height="1.02" fill="#1d1f0a"/><rect x="21" y="15" width="1.02" height="1.02" fill="#23180c"/><rect x="22" y="15" width="1.02" height="1.02" fill="#312310"/><rect x="23" y="15" width="1.02" height="1.02" fill="#100c05"/><rect x="24" y="15" width="1.02" height="1.02" fill="#19120a"/><rect x="25" y="15" width="1.02" height="1.02" fill="#282710"/><rect x="26" y="15" width="1.02" height="1.02" fill="#23180c"/><rect x="27" y="15" width="1.02" height="1.02" fill="#2e2111"/><rect x="28" y="15" width="1.02" height="1.02" fill="#3d2d17"/><rect x="29" y="15" width="1.02" height="1.02" fill="#271c10"/><rect x="30" y="15" width="1.02" height="1.02" fill="#22210a"/><rect x="31" y="15" width="1.02" height="1.02" fill="#20200a"/><rect x="32" y="15" width="1.02" height="1.02" fill="#454543"/><rect x="33" y="15" width="1.02" height="1.02" fill="#1b1107"/><rect x="34" y="15" width="1.02" height="1.02" fill="#1f1f09"/><rect x="35" y="15" width="1.02" height="1.02" fill="#272834"/><rect x="36" y="15" width="1.02" height="1.02" fill="#242531"/><rect x="37" y="15" width="1.02" height="1.02" fill="#1b1d08"/><rect x="38" y="15" width="1.02" height="1.02" fill="#383838"/><rect x="39" y="15" width="1.02" height="1.02" fill="#21222e"/><rect x="40" y="15" width="1.02" height="1.02" fill="#1f1b14"/><rect x="41" y="15" width="1.02" height="1.02" fill="#281b0b"/><rect x="42" y="15" width="1.02" height="1.02" fill="#0b0701"/><rect x="43" y="15" width="1.02" height="1.02" fill="#0f0a04"/><rect x="44" y="15" width="1.02" height="1.02" fill="#1a130b"/><rect x="45" y="15" width="1.02" height="1.02" fill="#3a2a14"/><rect x="46" y="15" width="1.02" height="1.02" fill="#151009"/><rect x="47" y="15" width="1.02" height="1.02" fill="#130e07"/><rect x="48" y="15" width="1.02" height="1.02" fill="#22220c"/><rect x="49" y="15" width="1.02" height="1.02" fill="#110d07"/><rect x="50" y="15" width="1.02" height="1.02" fill="#21160a"/><rect x="51" y="15" width="1.02" height="1.02" fill="#3b2b15"/><rect x="52" y="15" width="1.02" height="1.02" fill="#261b0f"/><rect x="53" y="15" width="1.02" height="1.02" fill="#352714"/><rect x="54" y="15" width="1.02" height="1.02" fill="#2e3030"/><rect x="55" y="15" width="1.02" height="1.02" fill="#1d1912"/><rect x="56" y="15" width="1.02" height="1.02" fill="#1d1912"/><rect x="57" y="15" width="1.02" height="1.02" fill="#181a05"/><rect x="58" y="15" width="1.02" height="1.02" fill="#130f08"/><rect x="59" y="15" width="1.02" height="1.02" fill="#1c150d"/><rect x="60" y="15" width="1.02" height="1.02" fill="#3f2f19"/><rect x="61" y="15" width="1.02" height="1.02" fill="#313131"/><rect x="62" y="15" width="1.02" height="1.02" fill="#1b1d25"/><rect x="63" y="15" width="1.02" height="1.02" fill="#323449"/><rect x="0" y="16" width="1.02" height="1.02" fill="#140f08"/><rect x="1" y="16" width="1.02" height="1.02" fill="#1a1c07"/><rect x="2" y="16" width="1.02" height="1.02" fill="#3a3a3a"/><rect x="3" y="16" width="1.02" height="1.02" fill="#303247"/><rect x="4" y="16" width="1.02" height="1.02" fill="#120e07"/><rect x="5" y="16" width="1.02" height="1.02" fill="#22220c"/><rect x="6" y="16" width="1.02" height="1.02" fill="#202128"/><rect x="7" y="16" width="1.02" height="1.02" fill="#282710"/><rect x="8" y="16" width="1.02" height="1.02" fill="#1e1a13"/><rect x="9" y="16" width="1.02" height="1.02" fill="#3b2b15"/><rect x="10" y="16" width="1.02" height="1.02" fill="#0f0b04"/><rect x="11" y="16" width="1.02" height="1.02" fill="#1c140a"/><rect x="12" y="16" width="1.02" height="1.02" fill="#1e200b"/><rect x="13" y="16" width="1.02" height="1.02" fill="#362815"/><rect x="14" y="16" width="1.02" height="1.02" fill="#1b1710"/><rect x="15" y="16" width="1.02" height="1.02" fill="#100c05"/><rect x="16" y="16" width="1.02" height="1.02" fill="#110d06"/><rect x="17" y="16" width="1.02" height="1.02" fill="#332512"/><rect x="18" y="16" width="1.02" height="1.02" fill="#1f1b14"/><rect x="19" y="16" width="1.02" height="1.02" fill="#28293c"/><rect x="20" y="16" width="1.02" height="1.02" fill="#1a130b"/><rect x="21" y="16" width="1.02" height="1.02" fill="#1d150b"/><rect x="22" y="16" width="1.02" height="1.02" fill="#281c0b"/><rect x="23" y="16" width="1.02" height="1.02" fill="#0c0903"/><rect x="24" y="16" width="1.02" height="1.02" fill="#130d06"/><rect x="25" y="16" width="1.02" height="1.02" fill="#100c05"/><rect x="26" y="16" width="1.02" height="1.02" fill="#21210b"/><rect x="27" y="16" width="1.02" height="1.02" fill="#1e1e08"/><rect x="28" y="16" width="1.02" height="1.02" fill="#202128"/><rect x="29" y="16" width="1.02" height="1.02" fill="#1e160c"/><rect x="30" y="16" width="1.02" height="1.02" fill="#20222b"/><rect x="31" y="16" width="1.02" height="1.02" fill="#100c05"/><rect x="32" y="16" width="1.02" height="1.02" fill="#21210b"/><rect x="33" y="16" width="1.02" height="1.02" fill="#2d2f2f"/><rect x="34" y="16" width="1.02" height="1.02" fill="#23252e"/><rect x="35" y="16" width="1.02" height="1.02" fill="#24252f"/><rect x="36" y="16" width="1.02" height="1.02" fill="#1d1912"/><rect x="37" y="16" width="1.02" height="1.02" fill="#21222e"/><rect x="38" y="16" width="1.02" height="1.02" fill="#1f1b14"/><rect x="39" y="16" width="1.02" height="1.02" fill="#1b1710"/><rect x="40" y="16" width="1.02" height="1.02" fill="#1b1710"/><rect x="41" y="16" width="1.02" height="1.02" fill="#191b06"/><rect x="42" y="16" width="1.02" height="1.02" fill="#16110a"/><rect x="43" y="16" width="1.02" height="1.02" fill="#21190f"/><rect x="44" y="16" width="1.02" height="1.02" fill="#251a0e"/><rect x="45" y="16" width="1.02" height="1.02" fill="#271c10"/><rect x="46" y="16" width="1.02" height="1.02" fill="#17120b"/><rect x="47" y="16" width="1.02" height="1.02" fill="#34364b"/><rect x="48" y="16" width="1.02" height="1.02" fill="#1f1f0c"/><rect x="49" y="16" width="1.02" height="1.02" fill="#20200a"/><rect x="50" y="16" width="1.02" height="1.02" fill="#1f1f09"/><rect x="51" y="16" width="1.02" height="1.02" fill="#120d06"/><rect x="52" y="16" width="1.02" height="1.02" fill="#30220f"/><rect x="53" y="16" width="1.02" height="1.02" fill="#342613"/><rect x="54" y="16" width="1.02" height="1.02" fill="#181a05"/><rect x="55" y="16" width="1.02" height="1.02" fill="#21190f"/><rect x="56" y="16" width="1.02" height="1.02" fill="#0f0b04"/><rect x="57" y="16" width="1.02" height="1.02" fill="#332512"/><rect x="58" y="16" width="1.02" height="1.02" fill="#2a2b3e"/><rect x="59" y="16" width="1.02" height="1.02" fill="#20180e"/><rect x="60" y="16" width="1.02" height="1.02" fill="#30220f"/><rect x="61" y="16" width="1.02" height="1.02" fill="#0e0a03"/><rect x="62" y="16" width="1.02" height="1.02" fill="#1e2029"/><rect x="63" y="16" width="1.02" height="1.02" fill="#1c1e09"/><rect x="0" y="17" width="1.02" height="1.02" fill="#41413f"/><rect x="1" y="17" width="1.02" height="1.02" fill="#21190f"/><rect x="2" y="17" width="1.02" height="1.02" fill="#271c10"/><rect x="3" y="17" width="1.02" height="1.02" fill="#3e2e18"/><rect x="4" y="17" width="1.02" height="1.02" fill="#141009"/><rect x="5" y="17" width="1.02" height="1.02" fill="#23230d"/><rect x="6" y="17" width="1.02" height="1.02" fill="#24190d"/><rect x="7" y="17" width="1.02" height="1.02" fill="#252410"/><rect x="8" y="17" width="1.02" height="1.02" fill="#16130d"/><rect x="9" y="17" width="1.02" height="1.02" fill="#22242d"/><rect x="10" y="17" width="1.02" height="1.02" fill="#2e2f42"/><rect x="11" y="17" width="1.02" height="1.02" fill="#1a130a"/><rect x="12" y="17" width="1.02" height="1.02" fill="#1d150b"/><rect x="13" y="17" width="1.02" height="1.02" fill="#27260f"/><rect x="14" y="17" width="1.02" height="1.02" fill="#322411"/><rect x="15" y="17" width="1.02" height="1.02" fill="#2c2011"/><rect x="16" y="17" width="1.02" height="1.02" fill="#2e2213"/><rect x="17" y="17" width="1.02" height="1.02" fill="#22232f"/><rect x="18" y="17" width="1.02" height="1.02" fill="#303247"/><rect x="19" y="17" width="1.02" height="1.02" fill="#30220f"/><rect x="20" y="17" width="1.02" height="1.02" fill="#3d2d17"/><rect x="21" y="17" width="1.02" height="1.02" fill="#181209"/><rect x="22" y="17" width="1.02" height="1.02" fill="#2e3045"/><rect x="23" y="17" width="1.02" height="1.02" fill="#342613"/><rect x="24" y="17" width="1.02" height="1.02" fill="#292a3d"/><rect x="25" y="17" width="1.02" height="1.02" fill="#2c2d40"/><rect x="26" y="17" width="1.02" height="1.02" fill="#392913"/><rect x="27" y="17" width="1.02" height="1.02" fill="#2e2213"/><rect x="28" y="17" width="1.02" height="1.02" fill="#332512"/><rect x="29" y="17" width="1.02" height="1.02" fill="#312310"/><rect x="30" y="17" width="1.02" height="1.02" fill="#1e2027"/><rect x="31" y="17" width="1.02" height="1.02" fill="#3c2c16"/><rect x="32" y="17" width="1.02" height="1.02" fill="#1d1d0a"/><rect x="33" y="17" width="1.02" height="1.02" fill="#242626"/><rect x="34" y="17" width="1.02" height="1.02" fill="#110c05"/><rect x="35" y="17" width="1.02" height="1.02" fill="#2c2011"/><rect x="36" y="17" width="1.02" height="1.02" fill="#352714"/><rect x="37" y="17" width="1.02" height="1.02" fill="#2e2213"/><rect x="38" y="17" width="1.02" height="1.02" fill="#1d150b"/><rect x="39" y="17" width="1.02" height="1.02" fill="#291d0e"/><rect x="40" y="17" width="1.02" height="1.02" fill="#392913"/><rect x="41" y="17" width="1.02" height="1.02" fill="#3d2d17"/><rect x="42" y="17" width="1.02" height="1.02" fill="#110d07"/><rect x="43" y="17" width="1.02" height="1.02" fill="#1f170d"/><rect x="44" y="17" width="1.02" height="1.02" fill="#2e2213"/><rect x="45" y="17" width="1.02" height="1.02" fill="#110c05"/><rect x="46" y="17" width="1.02" height="1.02" fill="#100c06"/><rect x="47" y="17" width="1.02" height="1.02" fill="#1b1c23"/><rect x="48" y="17" width="1.02" height="1.02" fill="#2a1e0f"/><rect x="49" y="17" width="1.02" height="1.02" fill="#434341"/><rect x="50" y="17" width="1.02" height="1.02" fill="#392913"/><rect x="51" y="17" width="1.02" height="1.02" fill="#100c06"/><rect x="52" y="17" width="1.02" height="1.02" fill="#3e2e18"/><rect x="53" y="17" width="1.02" height="1.02" fill="#21210b"/><rect x="54" y="17" width="1.02" height="1.02" fill="#2d2112"/><rect x="55" y="17" width="1.02" height="1.02" fill="#322411"/><rect x="56" y="17" width="1.02" height="1.02" fill="#0f0c06"/><rect x="57" y="17" width="1.02" height="1.02" fill="#1f1f09"/><rect x="58" y="17" width="1.02" height="1.02" fill="#1a160f"/><rect x="59" y="17" width="1.02" height="1.02" fill="#19120a"/><rect x="60" y="17" width="1.02" height="1.02" fill="#171008"/><rect x="61" y="17" width="1.02" height="1.02" fill="#292a3d"/><rect x="62" y="17" width="1.02" height="1.02" fill="#21222e"/><rect x="63" y="17" width="1.02" height="1.02" fill="#1e1a13"/><rect x="0" y="18" width="1.02" height="1.02" fill="#1d1f0a"/><rect x="1" y="18" width="1.02" height="1.02" fill="#1f180f"/><rect x="2" y="18" width="1.02" height="1.02" fill="#22210a"/><rect x="3" y="18" width="1.02" height="1.02" fill="#2a2c2c"/><rect x="4" y="18" width="1.02" height="1.02" fill="#1b1710"/><rect x="5" y="18" width="1.02" height="1.02" fill="#1d1f28"/><rect x="6" y="18" width="1.02" height="1.02" fill="#1c1e09"/><rect x="7" y="18" width="1.02" height="1.02" fill="#130f08"/><rect x="8" y="18" width="1.02" height="1.02" fill="#110c05"/><rect x="9" y="18" width="1.02" height="1.02" fill="#23252e"/><rect x="10" y="18" width="1.02" height="1.02" fill="#2d2112"/><rect x="11" y="18" width="1.02" height="1.02" fill="#1f170d"/><rect x="12" y="18" width="1.02" height="1.02" fill="#242531"/><rect x="13" y="18" width="1.02" height="1.02" fill="#141009"/><rect x="14" y="18" width="1.02" height="1.02" fill="#393939"/><rect x="15" y="18" width="1.02" height="1.02" fill="#202128"/><rect x="16" y="18" width="1.02" height="1.02" fill="#332512"/><rect x="17" y="18" width="1.02" height="1.02" fill="#434341"/><rect x="18" y="18" width="1.02" height="1.02" fill="#2b1f10"/><rect x="19" y="18" width="1.02" height="1.02" fill="#21190f"/><rect x="20" y="18" width="1.02" height="1.02" fill="#30220f"/><rect x="21" y="18" width="1.02" height="1.02" fill="#1e160c"/><rect x="22" y="18" width="1.02" height="1.02" fill="#1e1e08"/><rect x="23" y="18" width="1.02" height="1.02" fill="#2c2011"/><rect x="24" y="18" width="1.02" height="1.02" fill="#41413f"/><rect x="25" y="18" width="1.02" height="1.02" fill="#1b1d08"/><rect x="26" y="18" width="1.02" height="1.02" fill="#3f2f19"/><rect x="27" y="18" width="1.02" height="1.02" fill="#2c2011"/><rect x="28" y="18" width="1.02" height="1.02" fill="#291d0e"/><rect x="29" y="18" width="1.02" height="1.02" fill="#130f08"/><rect x="30" y="18" width="1.02" height="1.02" fill="#3e2e18"/><rect x="31" y="18" width="1.02" height="1.02" fill="#1b1710"/><rect x="32" y="18" width="1.02" height="1.02" fill="#1b1d08"/><rect x="33" y="18" width="1.02" height="1.02" fill="#1f2121"/><rect x="34" y="18" width="1.02" height="1.02" fill="#322411"/><rect x="35" y="18" width="1.02" height="1.02" fill="#323449"/><rect x="36" y="18" width="1.02" height="1.02" fill="#1e160c"/><rect x="37" y="18" width="1.02" height="1.02" fill="#3a3a3a"/><rect x="38" y="18" width="1.02" height="1.02" fill="#1e160c"/><rect x="39" y="18" width="1.02" height="1.02" fill="#1b140c"/><rect x="40" y="18" width="1.02" height="1.02" fill="#110d06"/><rect x="41" y="18" width="1.02" height="1.02" fill="#41413f"/><rect x="42" y="18" width="1.02" height="1.02" fill="#181a05"/><rect x="43" y="18" width="1.02" height="1.02" fill="#3e2e18"/><rect x="44" y="18" width="1.02" height="1.02" fill="#2a2b3e"/><rect x="45" y="18" width="1.02" height="1.02" fill="#3c2c16"/><rect x="46" y="18" width="1.02" height="1.02" fill="#1d1f0a"/><rect x="47" y="18" width="1.02" height="1.02" fill="#2b2d2d"/><rect x="48" y="18" width="1.02" height="1.02" fill="#2f2314"/><rect x="49" y="18" width="1.02" height="1.02" fill="#1a1c07"/><rect x="50" y="18" width="1.02" height="1.02" fill="#22170b"/><rect x="51" y="18" width="1.02" height="1.02" fill="#0e0a03"/><rect x="52" y="18" width="1.02" height="1.02" fill="#454543"/><rect x="53" y="18" width="1.02" height="1.02" fill="#1c140a"/><rect x="54" y="18" width="1.02" height="1.02" fill="#22210a"/><rect x="55" y="18" width="1.02" height="1.02" fill="#110d06"/><rect x="56" y="18" width="1.02" height="1.02" fill="#120d06"/><rect x="57" y="18" width="1.02" height="1.02" fill="#202128"/><rect x="58" y="18" width="1.02" height="1.02" fill="#30220f"/><rect x="59" y="18" width="1.02" height="1.02" fill="#33354a"/><rect x="60" y="18" width="1.02" height="1.02" fill="#232430"/><rect x="61" y="18" width="1.02" height="1.02" fill="#323449"/><rect x="62" y="18" width="1.02" height="1.02" fill="#1f1f09"/><rect x="63" y="18" width="1.02" height="1.02" fill="#3f2f19"/><rect x="0" y="19" width="1.02" height="1.02" fill="#3b2b15"/><rect x="1" y="19" width="1.02" height="1.02" fill="#251a0e"/><rect x="2" y="19" width="1.02" height="1.02" fill="#1e1d09"/><rect x="3" y="19" width="1.02" height="1.02" fill="#130e07"/><rect x="4" y="19" width="1.02" height="1.02" fill="#271c10"/><rect x="5" y="19" width="1.02" height="1.02" fill="#1e200b"/><rect x="6" y="19" width="1.02" height="1.02" fill="#100c05"/><rect x="7" y="19" width="1.02" height="1.02" fill="#2c2d40"/><rect x="8" y="19" width="1.02" height="1.02" fill="#0f0b04"/><rect x="9" y="19" width="1.02" height="1.02" fill="#2e3045"/><rect x="10" y="19" width="1.02" height="1.02" fill="#191b06"/><rect x="11" y="19" width="1.02" height="1.02" fill="#141009"/><rect x="12" y="19" width="1.02" height="1.02" fill="#292a3d"/><rect x="13" y="19" width="1.02" height="1.02" fill="#21210b"/><rect x="14" y="19" width="1.02" height="1.02" fill="#261b0f"/><rect x="15" y="19" width="1.02" height="1.02" fill="#424240"/><rect x="16" y="19" width="1.02" height="1.02" fill="#323449"/><rect x="17" y="19" width="1.02" height="1.02" fill="#1e1f26"/><rect x="18" y="19" width="1.02" height="1.02" fill="#2a1e0f"/><rect x="19" y="19" width="1.02" height="1.02" fill="#3f2f19"/><rect x="20" y="19" width="1.02" height="1.02" fill="#261a09"/><rect x="21" y="19" width="1.02" height="1.02" fill="#312310"/><rect x="22" y="19" width="1.02" height="1.02" fill="#1b1b08"/><rect x="23" y="19" width="1.02" height="1.02" fill="#140f08"/><rect x="24" y="19" width="1.02" height="1.02" fill="#110c05"/><rect x="25" y="19" width="1.02" height="1.02" fill="#1b1710"/><rect x="26" y="19" width="1.02" height="1.02" fill="#444442"/><rect x="27" y="19" width="1.02" height="1.02" fill="#2b1f10"/><rect x="28" y="19" width="1.02" height="1.02" fill="#1d1f0a"/><rect x="29" y="19" width="1.02" height="1.02" fill="#130f09"/><rect x="30" y="19" width="1.02" height="1.02" fill="#25240d"/><rect x="31" y="19" width="1.02" height="1.02" fill="#454543"/><rect x="32" y="19" width="1.02" height="1.02" fill="#141503"/><rect x="33" y="19" width="1.02" height="1.02" fill="#1b1710"/><rect x="34" y="19" width="1.02" height="1.02" fill="#23230d"/><rect x="35" y="19" width="1.02" height="1.02" fill="#0e0a03"/><rect x="36" y="19" width="1.02" height="1.02" fill="#1d1912"/><rect x="37" y="19" width="1.02" height="1.02" fill="#1b1d08"/><rect x="38" y="19" width="1.02" height="1.02" fill="#140f08"/><rect x="39" y="19" width="1.02" height="1.02" fill="#262733"/><rect x="40" y="19" width="1.02" height="1.02" fill="#2f2314"/><rect x="41" y="19" width="1.02" height="1.02" fill="#312310"/><rect x="42" y="19" width="1.02" height="1.02" fill="#22242d"/><rect x="43" y="19" width="1.02" height="1.02" fill="#3e2e18"/><rect x="44" y="19" width="1.02" height="1.02" fill="#232334"/><rect x="45" y="19" width="1.02" height="1.02" fill="#3b2b15"/><rect x="46" y="19" width="1.02" height="1.02" fill="#1f2027"/><rect x="47" y="19" width="1.02" height="1.02" fill="#21160a"/><rect x="48" y="19" width="1.02" height="1.02" fill="#2e3045"/><rect x="49" y="19" width="1.02" height="1.02" fill="#130e07"/><rect x="50" y="19" width="1.02" height="1.02" fill="#1b1107"/><rect x="51" y="19" width="1.02" height="1.02" fill="#22210a"/><rect x="52" y="19" width="1.02" height="1.02" fill="#34364b"/><rect x="53" y="19" width="1.02" height="1.02" fill="#1c1e09"/><rect x="54" y="19" width="1.02" height="1.02" fill="#100c05"/><rect x="55" y="19" width="1.02" height="1.02" fill="#393939"/><rect x="56" y="19" width="1.02" height="1.02" fill="#1b1d08"/><rect x="57" y="19" width="1.02" height="1.02" fill="#2e2f42"/><rect x="58" y="19" width="1.02" height="1.02" fill="#160f07"/><rect x="59" y="19" width="1.02" height="1.02" fill="#2d2f41"/><rect x="60" y="19" width="1.02" height="1.02" fill="#17120b"/><rect x="61" y="19" width="1.02" height="1.02" fill="#34364b"/><rect x="62" y="19" width="1.02" height="1.02" fill="#1b1b08"/><rect x="63" y="19" width="1.02" height="1.02" fill="#322411"/><rect x="0" y="20" width="1.02" height="1.02" fill="#282710"/><rect x="1" y="20" width="1.02" height="1.02" fill="#2a1e0f"/><rect x="2" y="20" width="1.02" height="1.02" fill="#110c05"/><rect x="3" y="20" width="1.02" height="1.02" fill="#2c2011"/><rect x="4" y="20" width="1.02" height="1.02" fill="#201c15"/><rect x="5" y="20" width="1.02" height="1.02" fill="#1b1d0b"/><rect x="6" y="20" width="1.02" height="1.02" fill="#20200a"/><rect x="7" y="20" width="1.02" height="1.02" fill="#22220c"/><rect x="8" y="20" width="1.02" height="1.02" fill="#323449"/><rect x="9" y="20" width="1.02" height="1.02" fill="#1b1d08"/><rect x="10" y="20" width="1.02" height="1.02" fill="#131503"/><rect x="11" y="20" width="1.02" height="1.02" fill="#20200a"/><rect x="12" y="20" width="1.02" height="1.02" fill="#2d2e41"/><rect x="13" y="20" width="1.02" height="1.02" fill="#28293c"/><rect x="14" y="20" width="1.02" height="1.02" fill="#21160a"/><rect x="15" y="20" width="1.02" height="1.02" fill="#1c150d"/><rect x="16" y="20" width="1.02" height="1.02" fill="#2d2f2f"/><rect x="17" y="20" width="1.02" height="1.02" fill="#2c2011"/><rect x="18" y="20" width="1.02" height="1.02" fill="#271c0f"/><rect x="19" y="20" width="1.02" height="1.02" fill="#22232f"/><rect x="20" y="20" width="1.02" height="1.02" fill="#0e0a03"/><rect x="21" y="20" width="1.02" height="1.02" fill="#40403e"/><rect x="22" y="20" width="1.02" height="1.02" fill="#141403"/><rect x="23" y="20" width="1.02" height="1.02" fill="#1c1e09"/><rect x="24" y="20" width="1.02" height="1.02" fill="#16110a"/><rect x="25" y="20" width="1.02" height="1.02" fill="#18140e"/><rect x="26" y="20" width="1.02" height="1.02" fill="#151009"/><rect x="27" y="20" width="1.02" height="1.02" fill="#3f2f19"/><rect x="28" y="20" width="1.02" height="1.02" fill="#2e2213"/><rect x="29" y="20" width="1.02" height="1.02" fill="#251a0e"/><rect x="30" y="20" width="1.02" height="1.02" fill="#262733"/><rect x="31" y="20" width="1.02" height="1.02" fill="#1d1d07"/><rect x="32" y="20" width="1.02" height="1.02" fill="#312310"/><rect x="33" y="20" width="1.02" height="1.02" fill="#141009"/><rect x="34" y="20" width="1.02" height="1.02" fill="#21160a"/><rect x="35" y="20" width="1.02" height="1.02" fill="#2c2d40"/><rect x="36" y="20" width="1.02" height="1.02" fill="#2d2f2f"/><rect x="37" y="20" width="1.02" height="1.02" fill="#1e200b"/><rect x="38" y="20" width="1.02" height="1.02" fill="#22220c"/><rect x="39" y="20" width="1.02" height="1.02" fill="#2e2f42"/><rect x="40" y="20" width="1.02" height="1.02" fill="#1e1e08"/><rect x="41" y="20" width="1.02" height="1.02" fill="#352714"/><rect x="42" y="20" width="1.02" height="1.02" fill="#1d1f28"/><rect x="43" y="20" width="1.02" height="1.02" fill="#1c140a"/><rect x="44" y="20" width="1.02" height="1.02" fill="#34364b"/><rect x="45" y="20" width="1.02" height="1.02" fill="#1f212a"/><rect x="46" y="20" width="1.02" height="1.02" fill="#392913"/><rect x="47" y="20" width="1.02" height="1.02" fill="#141009"/><rect x="48" y="20" width="1.02" height="1.02" fill="#2a2b3e"/><rect x="49" y="20" width="1.02" height="1.02" fill="#110c05"/><rect x="50" y="20" width="1.02" height="1.02" fill="#322411"/><rect x="51" y="20" width="1.02" height="1.02" fill="#1a1905"/><rect x="52" y="20" width="1.02" height="1.02" fill="#392913"/><rect x="53" y="20" width="1.02" height="1.02" fill="#1e1a13"/><rect x="54" y="20" width="1.02" height="1.02" fill="#393939"/><rect x="55" y="20" width="1.02" height="1.02" fill="#261b0f"/><rect x="56" y="20" width="1.02" height="1.02" fill="#2c2d40"/><rect x="57" y="20" width="1.02" height="1.02" fill="#23252e"/><rect x="58" y="20" width="1.02" height="1.02" fill="#21160a"/><rect x="59" y="20" width="1.02" height="1.02" fill="#342613"/><rect x="60" y="20" width="1.02" height="1.02" fill="#1b1c23"/><rect x="61" y="20" width="1.02" height="1.02" fill="#1c1811"/><rect x="62" y="20" width="1.02" height="1.02" fill="#191908"/><rect x="63" y="20" width="1.02" height="1.02" fill="#281b0b"/><rect x="0" y="21" width="1.02" height="1.02" fill="#1f1e0a"/><rect x="1" y="21" width="1.02" height="1.02" fill="#20180e"/><rect x="2" y="21" width="1.02" height="1.02" fill="#23252e"/><rect x="3" y="21" width="1.02" height="1.02" fill="#24230c"/><rect x="4" y="21" width="1.02" height="1.02" fill="#2b2c3f"/><rect x="5" y="21" width="1.02" height="1.02" fill="#24230c"/><rect x="6" y="21" width="1.02" height="1.02" fill="#21190f"/><rect x="7" y="21" width="1.02" height="1.02" fill="#2f2314"/><rect x="8" y="21" width="1.02" height="1.02" fill="#392913"/><rect x="9" y="21" width="1.02" height="1.02" fill="#22170b"/><rect x="10" y="21" width="1.02" height="1.02" fill="#22242d"/><rect x="11" y="21" width="1.02" height="1.02" fill="#1b1309"/><rect x="12" y="21" width="1.02" height="1.02" fill="#352714"/><rect x="13" y="21" width="1.02" height="1.02" fill="#232434"/><rect x="14" y="21" width="1.02" height="1.02" fill="#23180c"/><rect x="15" y="21" width="1.02" height="1.02" fill="#322411"/><rect x="16" y="21" width="1.02" height="1.02" fill="#362815"/><rect x="17" y="21" width="1.02" height="1.02" fill="#1a130b"/><rect x="18" y="21" width="1.02" height="1.02" fill="#1f1f09"/><rect x="19" y="21" width="1.02" height="1.02" fill="#353535"/><rect x="20" y="21" width="1.02" height="1.02" fill="#282710"/><rect x="21" y="21" width="1.02" height="1.02" fill="#303247"/><rect x="22" y="21" width="1.02" height="1.02" fill="#21190f"/><rect x="23" y="21" width="1.02" height="1.02" fill="#1e160c"/><rect x="24" y="21" width="1.02" height="1.02" fill="#3e2e18"/><rect x="25" y="21" width="1.02" height="1.02" fill="#1d1912"/><rect x="26" y="21" width="1.02" height="1.02" fill="#25240d"/><rect x="27" y="21" width="1.02" height="1.02" fill="#342613"/><rect x="28" y="21" width="1.02" height="1.02" fill="#261c0f"/><rect x="29" y="21" width="1.02" height="1.02" fill="#342613"/><rect x="30" y="21" width="1.02" height="1.02" fill="#21222c"/><rect x="31" y="21" width="1.02" height="1.02" fill="#1e1f26"/><rect x="32" y="21" width="1.02" height="1.02" fill="#40403e"/><rect x="33" y="21" width="1.02" height="1.02" fill="#110d07"/><rect x="34" y="21" width="1.02" height="1.02" fill="#2d2112"/><rect x="35" y="21" width="1.02" height="1.02" fill="#24190d"/><rect x="36" y="21" width="1.02" height="1.02" fill="#282710"/><rect x="37" y="21" width="1.02" height="1.02" fill="#20180e"/><rect x="38" y="21" width="1.02" height="1.02" fill="#30220f"/><rect x="39" y="21" width="1.02" height="1.02" fill="#272838"/><rect x="40" y="21" width="1.02" height="1.02" fill="#261b0f"/><rect x="41" y="21" width="1.02" height="1.02" fill="#16110a"/><rect x="42" y="21" width="1.02" height="1.02" fill="#1f2027"/><rect x="43" y="21" width="1.02" height="1.02" fill="#1b140c"/><rect x="44" y="21" width="1.02" height="1.02" fill="#130f08"/><rect x="45" y="21" width="1.02" height="1.02" fill="#1d1f27"/><rect x="46" y="21" width="1.02" height="1.02" fill="#22220c"/><rect x="47" y="21" width="1.02" height="1.02" fill="#140f08"/><rect x="48" y="21" width="1.02" height="1.02" fill="#1c140a"/><rect x="49" y="21" width="1.02" height="1.02" fill="#342613"/><rect x="50" y="21" width="1.02" height="1.02" fill="#261b0f"/><rect x="51" y="21" width="1.02" height="1.02" fill="#1c140a"/><rect x="52" y="21" width="1.02" height="1.02" fill="#30220f"/><rect x="53" y="21" width="1.02" height="1.02" fill="#454543"/><rect x="54" y="21" width="1.02" height="1.02" fill="#292a3d"/><rect x="55" y="21" width="1.02" height="1.02" fill="#1d150b"/><rect x="56" y="21" width="1.02" height="1.02" fill="#40403e"/><rect x="57" y="21" width="1.02" height="1.02" fill="#251a0e"/><rect x="58" y="21" width="1.02" height="1.02" fill="#22170b"/><rect x="59" y="21" width="1.02" height="1.02" fill="#1e160c"/><rect x="60" y="21" width="1.02" height="1.02" fill="#2a2b3e"/><rect x="61" y="21" width="1.02" height="1.02" fill="#1c140a"/><rect x="62" y="21" width="1.02" height="1.02" fill="#383838"/><rect x="63" y="21" width="1.02" height="1.02" fill="#292a3d"/><rect x="0" y="22" width="1.02" height="1.02" fill="#21190f"/><rect x="1" y="22" width="1.02" height="1.02" fill="#191b06"/><rect x="2" y="22" width="1.02" height="1.02" fill="#454543"/><rect x="3" y="22" width="1.02" height="1.02" fill="#21160a"/><rect x="4" y="22" width="1.02" height="1.02" fill="#2f2314"/><rect x="5" y="22" width="1.02" height="1.02" fill="#21190f"/><rect x="6" y="22" width="1.02" height="1.02" fill="#1e1f26"/><rect x="7" y="22" width="1.02" height="1.02" fill="#261c0f"/><rect x="8" y="22" width="1.02" height="1.02" fill="#120e07"/><rect x="9" y="22" width="1.02" height="1.02" fill="#251a0e"/><rect x="10" y="22" width="1.02" height="1.02" fill="#1c150d"/><rect x="11" y="22" width="1.02" height="1.02" fill="#2c2011"/><rect x="12" y="22" width="1.02" height="1.02" fill="#16110a"/><rect x="13" y="22" width="1.02" height="1.02" fill="#2f3146"/><rect x="14" y="22" width="1.02" height="1.02" fill="#242531"/><rect x="15" y="22" width="1.02" height="1.02" fill="#2b2c3f"/><rect x="16" y="22" width="1.02" height="1.02" fill="#2b2c3f"/><rect x="17" y="22" width="1.02" height="1.02" fill="#140e07"/><rect x="18" y="22" width="1.02" height="1.02" fill="#1b140c"/><rect x="19" y="22" width="1.02" height="1.02" fill="#20222b"/><rect x="20" y="22" width="1.02" height="1.02" fill="#292a3d"/><rect x="21" y="22" width="1.02" height="1.02" fill="#1d1d07"/><rect x="22" y="22" width="1.02" height="1.02" fill="#1b1d08"/><rect x="23" y="22" width="1.02" height="1.02" fill="#1c1811"/><rect x="24" y="22" width="1.02" height="1.02" fill="#1d150b"/><rect x="25" y="22" width="1.02" height="1.02" fill="#16110a"/><rect x="26" y="22" width="1.02" height="1.02" fill="#30220f"/><rect x="27" y="22" width="1.02" height="1.02" fill="#1f2027"/><rect x="28" y="22" width="1.02" height="1.02" fill="#3f2f19"/><rect x="29" y="22" width="1.02" height="1.02" fill="#22242d"/><rect x="30" y="22" width="1.02" height="1.02" fill="#1b1d08"/><rect x="31" y="22" width="1.02" height="1.02" fill="#181a05"/><rect x="32" y="22" width="1.02" height="1.02" fill="#3c2c16"/><rect x="33" y="22" width="1.02" height="1.02" fill="#271c10"/><rect x="34" y="22" width="1.02" height="1.02" fill="#241a0d"/><rect x="35" y="22" width="1.02" height="1.02" fill="#1c1309"/><rect x="36" y="22" width="1.02" height="1.02" fill="#201f0b"/><rect x="37" y="22" width="1.02" height="1.02" fill="#1d1d07"/><rect x="38" y="22" width="1.02" height="1.02" fill="#261a09"/><rect x="39" y="22" width="1.02" height="1.02" fill="#373737"/><rect x="40" y="22" width="1.02" height="1.02" fill="#100c05"/><rect x="41" y="22" width="1.02" height="1.02" fill="#100c05"/><rect x="42" y="22" width="1.02" height="1.02" fill="#17181e"/><rect x="43" y="22" width="1.02" height="1.02" fill="#251a0e"/><rect x="44" y="22" width="1.02" height="1.02" fill="#0f0b05"/><rect x="45" y="22" width="1.02" height="1.02" fill="#24230c"/><rect x="46" y="22" width="1.02" height="1.02" fill="#3d2d17"/><rect x="47" y="22" width="1.02" height="1.02" fill="#313348"/><rect x="48" y="22" width="1.02" height="1.02" fill="#362815"/><rect x="49" y="22" width="1.02" height="1.02" fill="#2c2010"/><rect x="50" y="22" width="1.02" height="1.02" fill="#21180d"/><rect x="51" y="22" width="1.02" height="1.02" fill="#34364b"/><rect x="52" y="22" width="1.02" height="1.02" fill="#181a05"/><rect x="53" y="22" width="1.02" height="1.02" fill="#1b1710"/><rect x="54" y="22" width="1.02" height="1.02" fill="#242535"/><rect x="55" y="22" width="1.02" height="1.02" fill="#23220b"/><rect x="56" y="22" width="1.02" height="1.02" fill="#130f08"/><rect x="57" y="22" width="1.02" height="1.02" fill="#1d140a"/><rect x="58" y="22" width="1.02" height="1.02" fill="#312310"/><rect x="59" y="22" width="1.02" height="1.02" fill="#1b1c23"/><rect x="60" y="22" width="1.02" height="1.02" fill="#352714"/><rect x="61" y="22" width="1.02" height="1.02" fill="#22170b"/><rect x="62" y="22" width="1.02" height="1.02" fill="#332512"/><rect x="63" y="22" width="1.02" height="1.02" fill="#272834"/><rect x="0" y="23" width="1.02" height="1.02" fill="#23180c"/><rect x="1" y="23" width="1.02" height="1.02" fill="#2c2011"/><rect x="2" y="23" width="1.02" height="1.02" fill="#3a3a38"/><rect x="3" y="23" width="1.02" height="1.02" fill="#1d1309"/><rect x="4" y="23" width="1.02" height="1.02" fill="#1d1f0a"/><rect x="5" y="23" width="1.02" height="1.02" fill="#21160a"/><rect x="6" y="23" width="1.02" height="1.02" fill="#313348"/><rect x="7" y="23" width="1.02" height="1.02" fill="#231b0f"/><rect x="8" y="23" width="1.02" height="1.02" fill="#362815"/><rect x="9" y="23" width="1.02" height="1.02" fill="#21232c"/><rect x="10" y="23" width="1.02" height="1.02" fill="#26250e"/><rect x="11" y="23" width="1.02" height="1.02" fill="#281e11"/><rect x="12" y="23" width="1.02" height="1.02" fill="#1e2029"/><rect x="13" y="23" width="1.02" height="1.02" fill="#292b3d"/><rect x="14" y="23" width="1.02" height="1.02" fill="#130e07"/><rect x="15" y="23" width="1.02" height="1.02" fill="#1e200b"/><rect x="16" y="23" width="1.02" height="1.02" fill="#19120a"/><rect x="17" y="23" width="1.02" height="1.02" fill="#21222e"/><rect x="18" y="23" width="1.02" height="1.02" fill="#2c2d40"/><rect x="19" y="23" width="1.02" height="1.02" fill="#181a21"/><rect x="20" y="23" width="1.02" height="1.02" fill="#1e200b"/><rect x="21" y="23" width="1.02" height="1.02" fill="#21190f"/><rect x="22" y="23" width="1.02" height="1.02" fill="#1d1f28"/><rect x="23" y="23" width="1.02" height="1.02" fill="#110c05"/><rect x="24" y="23" width="1.02" height="1.02" fill="#313348"/><rect x="25" y="23" width="1.02" height="1.02" fill="#362815"/><rect x="26" y="23" width="1.02" height="1.02" fill="#2d2e41"/><rect x="27" y="23" width="1.02" height="1.02" fill="#3a3a3a"/><rect x="28" y="23" width="1.02" height="1.02" fill="#291d0e"/><rect x="29" y="23" width="1.02" height="1.02" fill="#1c150d"/><rect x="30" y="23" width="1.02" height="1.02" fill="#352714"/><rect x="31" y="23" width="1.02" height="1.02" fill="#17120b"/><rect x="32" y="23" width="1.02" height="1.02" fill="#342613"/><rect x="33" y="23" width="1.02" height="1.02" fill="#1e150a"/><rect x="34" y="23" width="1.02" height="1.02" fill="#362815"/><rect x="35" y="23" width="1.02" height="1.02" fill="#424240"/><rect x="36" y="23" width="1.02" height="1.02" fill="#0e0a03"/><rect x="37" y="23" width="1.02" height="1.02" fill="#21190f"/><rect x="38" y="23" width="1.02" height="1.02" fill="#23230d"/><rect x="39" y="23" width="1.02" height="1.02" fill="#191b06"/><rect x="40" y="23" width="1.02" height="1.02" fill="#26250e"/><rect x="41" y="23" width="1.02" height="1.02" fill="#0f0b04"/><rect x="42" y="23" width="1.02" height="1.02" fill="#232430"/><rect x="43" y="23" width="1.02" height="1.02" fill="#362815"/><rect x="44" y="23" width="1.02" height="1.02" fill="#2f3131"/><rect x="45" y="23" width="1.02" height="1.02" fill="#272834"/><rect x="46" y="23" width="1.02" height="1.02" fill="#1c1811"/><rect x="47" y="23" width="1.02" height="1.02" fill="#1b140c"/><rect x="48" y="23" width="1.02" height="1.02" fill="#21160a"/><rect x="49" y="23" width="1.02" height="1.02" fill="#22170b"/><rect x="50" y="23" width="1.02" height="1.02" fill="#1f1b14"/><rect x="51" y="23" width="1.02" height="1.02" fill="#2f3143"/><rect x="52" y="23" width="1.02" height="1.02" fill="#1d1912"/><rect x="53" y="23" width="1.02" height="1.02" fill="#1d1e25"/><rect x="54" y="23" width="1.02" height="1.02" fill="#352714"/><rect x="55" y="23" width="1.02" height="1.02" fill="#151009"/><rect x="56" y="23" width="1.02" height="1.02" fill="#181a05"/><rect x="57" y="23" width="1.02" height="1.02" fill="#171008"/><rect x="58" y="23" width="1.02" height="1.02" fill="#16110a"/><rect x="59" y="23" width="1.02" height="1.02" fill="#3d2d17"/><rect x="60" y="23" width="1.02" height="1.02" fill="#2e3045"/><rect x="61" y="23" width="1.02" height="1.02" fill="#3f2f19"/><rect x="62" y="23" width="1.02" height="1.02" fill="#3f2f19"/><rect x="63" y="23" width="1.02" height="1.02" fill="#20212b"/><rect x="0" y="24" width="1.02" height="1.02" fill="#41413f"/><rect x="1" y="24" width="1.02" height="1.02" fill="#2f3146"/><rect x="2" y="24" width="1.02" height="1.02" fill="#2e3030"/><rect x="3" y="24" width="1.02" height="1.02" fill="#16110a"/><rect x="4" y="24" width="1.02" height="1.02" fill="#201c15"/><rect x="5" y="24" width="1.02" height="1.02" fill="#28293c"/><rect x="6" y="24" width="1.02" height="1.02" fill="#17120b"/><rect x="7" y="24" width="1.02" height="1.02" fill="#22170b"/><rect x="8" y="24" width="1.02" height="1.02" fill="#1d1f0a"/><rect x="9" y="24" width="1.02" height="1.02" fill="#1a130b"/><rect x="10" y="24" width="1.02" height="1.02" fill="#21190f"/><rect x="11" y="24" width="1.02" height="1.02" fill="#20170c"/><rect x="12" y="24" width="1.02" height="1.02" fill="#312310"/><rect x="13" y="24" width="1.02" height="1.02" fill="#1a160f"/><rect x="14" y="24" width="1.02" height="1.02" fill="#0d0903"/><rect x="15" y="24" width="1.02" height="1.02" fill="#22220c"/><rect x="16" y="24" width="1.02" height="1.02" fill="#1a130b"/><rect x="17" y="24" width="1.02" height="1.02" fill="#2f2314"/><rect x="18" y="24" width="1.02" height="1.02" fill="#16110a"/><rect x="19" y="24" width="1.02" height="1.02" fill="#181109"/><rect x="20" y="24" width="1.02" height="1.02" fill="#140f08"/><rect x="21" y="24" width="1.02" height="1.02" fill="#17120b"/><rect x="22" y="24" width="1.02" height="1.02" fill="#1b1d25"/><rect x="23" y="24" width="1.02" height="1.02" fill="#110d06"/><rect x="24" y="24" width="1.02" height="1.02" fill="#3b2b15"/><rect x="25" y="24" width="1.02" height="1.02" fill="#292a3d"/><rect x="26" y="24" width="1.02" height="1.02" fill="#1c1811"/><rect x="27" y="24" width="1.02" height="1.02" fill="#2e3045"/><rect x="28" y="24" width="1.02" height="1.02" fill="#151009"/><rect x="29" y="24" width="1.02" height="1.02" fill="#201c15"/><rect x="30" y="24" width="1.02" height="1.02" fill="#110d06"/><rect x="31" y="24" width="1.02" height="1.02" fill="#1a130b"/><rect x="32" y="24" width="1.02" height="1.02" fill="#1b1309"/><rect x="33" y="24" width="1.02" height="1.02" fill="#1d150b"/><rect x="34" y="24" width="1.02" height="1.02" fill="#33354a"/><rect x="35" y="24" width="1.02" height="1.02" fill="#1c1e09"/><rect x="36" y="24" width="1.02" height="1.02" fill="#0f0b05"/><rect x="37" y="24" width="1.02" height="1.02" fill="#1d1912"/><rect x="38" y="24" width="1.02" height="1.02" fill="#261b0f"/><rect x="39" y="24" width="1.02" height="1.02" fill="#201c15"/><rect x="40" y="24" width="1.02" height="1.02" fill="#181109"/><rect x="41" y="24" width="1.02" height="1.02" fill="#3c2c16"/><rect x="42" y="24" width="1.02" height="1.02" fill="#2f2314"/><rect x="43" y="24" width="1.02" height="1.02" fill="#1d1912"/><rect x="44" y="24" width="1.02" height="1.02" fill="#130e07"/><rect x="45" y="24" width="1.02" height="1.02" fill="#22242d"/><rect x="46" y="24" width="1.02" height="1.02" fill="#332512"/><rect x="47" y="24" width="1.02" height="1.02" fill="#0e0a03"/><rect x="48" y="24" width="1.02" height="1.02" fill="#141009"/><rect x="49" y="24" width="1.02" height="1.02" fill="#100c05"/><rect x="50" y="24" width="1.02" height="1.02" fill="#1a160f"/><rect x="51" y="24" width="1.02" height="1.02" fill="#262837"/><rect x="52" y="24" width="1.02" height="1.02" fill="#1b1812"/><rect x="53" y="24" width="1.02" height="1.02" fill="#291d0e"/><rect x="54" y="24" width="1.02" height="1.02" fill="#22170b"/><rect x="55" y="24" width="1.02" height="1.02" fill="#23230d"/><rect x="56" y="24" width="1.02" height="1.02" fill="#160f07"/><rect x="57" y="24" width="1.02" height="1.02" fill="#25240d"/><rect x="58" y="24" width="1.02" height="1.02" fill="#15110b"/><rect x="59" y="24" width="1.02" height="1.02" fill="#2b1f10"/><rect x="60" y="24" width="1.02" height="1.02" fill="#242638"/><rect x="61" y="24" width="1.02" height="1.02" fill="#352714"/><rect x="62" y="24" width="1.02" height="1.02" fill="#1c140a"/><rect x="63" y="24" width="1.02" height="1.02" fill="#191a22"/><rect x="0" y="25" width="1.02" height="1.02" fill="#2a2b3e"/><rect x="1" y="25" width="1.02" height="1.02" fill="#25240d"/><rect x="2" y="25" width="1.02" height="1.02" fill="#1a160f"/><rect x="3" y="25" width="1.02" height="1.02" fill="#292a3d"/><rect x="4" y="25" width="1.02" height="1.02" fill="#352714"/><rect x="5" y="25" width="1.02" height="1.02" fill="#3d2d17"/><rect x="6" y="25" width="1.02" height="1.02" fill="#1f170d"/><rect x="7" y="25" width="1.02" height="1.02" fill="#1d1912"/><rect x="8" y="25" width="1.02" height="1.02" fill="#130f08"/><rect x="9" y="25" width="1.02" height="1.02" fill="#3a3a3a"/><rect x="10" y="25" width="1.02" height="1.02" fill="#2e2213"/><rect x="11" y="25" width="1.02" height="1.02" fill="#252632"/><rect x="12" y="25" width="1.02" height="1.02" fill="#1a1b22"/><rect x="13" y="25" width="1.02" height="1.02" fill="#1a130b"/><rect x="14" y="25" width="1.02" height="1.02" fill="#20222b"/><rect x="15" y="25" width="1.02" height="1.02" fill="#191b06"/><rect x="16" y="25" width="1.02" height="1.02" fill="#0f0b04"/><rect x="17" y="25" width="1.02" height="1.02" fill="#252632"/><rect x="18" y="25" width="1.02" height="1.02" fill="#3b2b15"/><rect x="19" y="25" width="1.02" height="1.02" fill="#3f2f19"/><rect x="20" y="25" width="1.02" height="1.02" fill="#373737"/><rect x="21" y="25" width="1.02" height="1.02" fill="#2b2c3f"/><rect x="22" y="25" width="1.02" height="1.02" fill="#120e07"/><rect x="23" y="25" width="1.02" height="1.02" fill="#21222e"/><rect x="24" y="25" width="1.02" height="1.02" fill="#1d150b"/><rect x="25" y="25" width="1.02" height="1.02" fill="#1d1912"/><rect x="26" y="25" width="1.02" height="1.02" fill="#22220c"/><rect x="27" y="25" width="1.02" height="1.02" fill="#140f08"/><rect x="28" y="25" width="1.02" height="1.02" fill="#261b0f"/><rect x="29" y="25" width="1.02" height="1.02" fill="#2c2d40"/><rect x="30" y="25" width="1.02" height="1.02" fill="#464644"/><rect x="31" y="25" width="1.02" height="1.02" fill="#25240d"/><rect x="32" y="25" width="1.02" height="1.02" fill="#1b1309"/><rect x="33" y="25" width="1.02" height="1.02" fill="#1b150c"/><rect x="34" y="25" width="1.02" height="1.02" fill="#252632"/><rect x="35" y="25" width="1.02" height="1.02" fill="#181109"/><rect x="36" y="25" width="1.02" height="1.02" fill="#181109"/><rect x="37" y="25" width="1.02" height="1.02" fill="#1b1309"/><rect x="38" y="25" width="1.02" height="1.02" fill="#231a0f"/><rect x="39" y="25" width="1.02" height="1.02" fill="#20200a"/><rect x="40" y="25" width="1.02" height="1.02" fill="#22220c"/><rect x="41" y="25" width="1.02" height="1.02" fill="#191b06"/><rect x="42" y="25" width="1.02" height="1.02" fill="#262733"/><rect x="43" y="25" width="1.02" height="1.02" fill="#0f0b04"/><rect x="44" y="25" width="1.02" height="1.02" fill="#282710"/><rect x="45" y="25" width="1.02" height="1.02" fill="#22170b"/><rect x="46" y="25" width="1.02" height="1.02" fill="#464644"/><rect x="47" y="25" width="1.02" height="1.02" fill="#0c0802"/><rect x="48" y="25" width="1.02" height="1.02" fill="#23220b"/><rect x="49" y="25" width="1.02" height="1.02" fill="#0d0a04"/><rect x="50" y="25" width="1.02" height="1.02" fill="#2f3146"/><rect x="51" y="25" width="1.02" height="1.02" fill="#181109"/><rect x="52" y="25" width="1.02" height="1.02" fill="#1c1d24"/><rect x="53" y="25" width="1.02" height="1.02" fill="#2c2011"/><rect x="54" y="25" width="1.02" height="1.02" fill="#2b2d2d"/><rect x="55" y="25" width="1.02" height="1.02" fill="#1e1e0b"/><rect x="56" y="25" width="1.02" height="1.02" fill="#181109"/><rect x="57" y="25" width="1.02" height="1.02" fill="#120d06"/><rect x="58" y="25" width="1.02" height="1.02" fill="#332512"/><rect x="59" y="25" width="1.02" height="1.02" fill="#23180c"/><rect x="60" y="25" width="1.02" height="1.02" fill="#332512"/><rect x="61" y="25" width="1.02" height="1.02" fill="#110d06"/><rect x="62" y="25" width="1.02" height="1.02" fill="#202128"/><rect x="63" y="25" width="1.02" height="1.02" fill="#2d2112"/><rect x="0" y="26" width="1.02" height="1.02" fill="#2e2213"/><rect x="1" y="26" width="1.02" height="1.02" fill="#22170b"/><rect x="2" y="26" width="1.02" height="1.02" fill="#3e2e18"/><rect x="3" y="26" width="1.02" height="1.02" fill="#262737"/><rect x="4" y="26" width="1.02" height="1.02" fill="#30220f"/><rect x="5" y="26" width="1.02" height="1.02" fill="#232430"/><rect x="6" y="26" width="1.02" height="1.02" fill="#1a130b"/><rect x="7" y="26" width="1.02" height="1.02" fill="#17140e"/><rect x="8" y="26" width="1.02" height="1.02" fill="#151009"/><rect x="9" y="26" width="1.02" height="1.02" fill="#1c1e09"/><rect x="10" y="26" width="1.02" height="1.02" fill="#2a1e0f"/><rect x="11" y="26" width="1.02" height="1.02" fill="#291d0e"/><rect x="12" y="26" width="1.02" height="1.02" fill="#1a1c07"/><rect x="13" y="26" width="1.02" height="1.02" fill="#110c05"/><rect x="14" y="26" width="1.02" height="1.02" fill="#2e3045"/><rect x="15" y="26" width="1.02" height="1.02" fill="#191b06"/><rect x="16" y="26" width="1.02" height="1.02" fill="#1d1d07"/><rect x="17" y="26" width="1.02" height="1.02" fill="#2d2f2f"/><rect x="18" y="26" width="1.02" height="1.02" fill="#342613"/><rect x="19" y="26" width="1.02" height="1.02" fill="#24230c"/><rect x="20" y="26" width="1.02" height="1.02" fill="#2a1e0f"/><rect x="21" y="26" width="1.02" height="1.02" fill="#272839"/><rect x="22" y="26" width="1.02" height="1.02" fill="#3d2d17"/><rect x="23" y="26" width="1.02" height="1.02" fill="#1d1912"/><rect x="24" y="26" width="1.02" height="1.02" fill="#22170b"/><rect x="25" y="26" width="1.02" height="1.02" fill="#22170b"/><rect x="26" y="26" width="1.02" height="1.02" fill="#271c10"/><rect x="27" y="26" width="1.02" height="1.02" fill="#110d06"/><rect x="28" y="26" width="1.02" height="1.02" fill="#24190d"/><rect x="29" y="26" width="1.02" height="1.02" fill="#251a0e"/><rect x="30" y="26" width="1.02" height="1.02" fill="#30220f"/><rect x="31" y="26" width="1.02" height="1.02" fill="#22242d"/><rect x="32" y="26" width="1.02" height="1.02" fill="#1a130a"/><rect x="33" y="26" width="1.02" height="1.02" fill="#1b1710"/><rect x="34" y="26" width="1.02" height="1.02" fill="#1d150b"/><rect x="35" y="26" width="1.02" height="1.02" fill="#3c2c16"/><rect x="36" y="26" width="1.02" height="1.02" fill="#1a160f"/><rect x="37" y="26" width="1.02" height="1.02" fill="#2e2f42"/><rect x="38" y="26" width="1.02" height="1.02" fill="#392913"/><rect x="39" y="26" width="1.02" height="1.02" fill="#2d2112"/><rect x="40" y="26" width="1.02" height="1.02" fill="#2c2011"/><rect x="41" y="26" width="1.02" height="1.02" fill="#19120a"/><rect x="42" y="26" width="1.02" height="1.02" fill="#1e1f29"/><rect x="43" y="26" width="1.02" height="1.02" fill="#1b1309"/><rect x="44" y="26" width="1.02" height="1.02" fill="#322411"/><rect x="45" y="26" width="1.02" height="1.02" fill="#1e2029"/><rect x="46" y="26" width="1.02" height="1.02" fill="#3c3c3a"/><rect x="47" y="26" width="1.02" height="1.02" fill="#160f07"/><rect x="48" y="26" width="1.02" height="1.02" fill="#1f1e0a"/><rect x="49" y="26" width="1.02" height="1.02" fill="#24190d"/><rect x="50" y="26" width="1.02" height="1.02" fill="#160f07"/><rect x="51" y="26" width="1.02" height="1.02" fill="#1c1811"/><rect x="52" y="26" width="1.02" height="1.02" fill="#19191f"/><rect x="53" y="26" width="1.02" height="1.02" fill="#160f07"/><rect x="54" y="26" width="1.02" height="1.02" fill="#261b0f"/><rect x="55" y="26" width="1.02" height="1.02" fill="#292b2b"/><rect x="56" y="26" width="1.02" height="1.02" fill="#21222e"/><rect x="57" y="26" width="1.02" height="1.02" fill="#2d2112"/><rect x="58" y="26" width="1.02" height="1.02" fill="#2e2213"/><rect x="59" y="26" width="1.02" height="1.02" fill="#0f0b04"/><rect x="60" y="26" width="1.02" height="1.02" fill="#120d06"/><rect x="61" y="26" width="1.02" height="1.02" fill="#100d07"/><rect x="62" y="26" width="1.02" height="1.02" fill="#2e2213"/><rect x="63" y="26" width="1.02" height="1.02" fill="#272834"/><rect x="0" y="27" width="1.02" height="1.02" fill="#22232f"/><rect x="1" y="27" width="1.02" height="1.02" fill="#1c1208"/><rect x="2" y="27" width="1.02" height="1.02" fill="#342613"/><rect x="3" y="27" width="1.02" height="1.02" fill="#3f2f19"/><rect x="4" y="27" width="1.02" height="1.02" fill="#181109"/><rect x="5" y="27" width="1.02" height="1.02" fill="#0f0b04"/><rect x="6" y="27" width="1.02" height="1.02" fill="#1a130b"/><rect x="7" y="27" width="1.02" height="1.02" fill="#140f08"/><rect x="8" y="27" width="1.02" height="1.02" fill="#151009"/><rect x="9" y="27" width="1.02" height="1.02" fill="#21190f"/><rect x="10" y="27" width="1.02" height="1.02" fill="#1e1a13"/><rect x="11" y="27" width="1.02" height="1.02" fill="#17120b"/><rect x="12" y="27" width="1.02" height="1.02" fill="#2e2213"/><rect x="13" y="27" width="1.02" height="1.02" fill="#332512"/><rect x="14" y="27" width="1.02" height="1.02" fill="#2e2f42"/><rect x="15" y="27" width="1.02" height="1.02" fill="#22242d"/><rect x="16" y="27" width="1.02" height="1.02" fill="#392913"/><rect x="17" y="27" width="1.02" height="1.02" fill="#1e1a13"/><rect x="18" y="27" width="1.02" height="1.02" fill="#23252e"/><rect x="19" y="27" width="1.02" height="1.02" fill="#1b1309"/><rect x="20" y="27" width="1.02" height="1.02" fill="#2b2c3f"/><rect x="21" y="27" width="1.02" height="1.02" fill="#1f202f"/><rect x="22" y="27" width="1.02" height="1.02" fill="#181109"/><rect x="23" y="27" width="1.02" height="1.02" fill="#24230c"/><rect x="24" y="27" width="1.02" height="1.02" fill="#2e2213"/><rect x="25" y="27" width="1.02" height="1.02" fill="#2b1f10"/><rect x="26" y="27" width="1.02" height="1.02" fill="#1f160b"/><rect x="27" y="27" width="1.02" height="1.02" fill="#171008"/><rect x="28" y="27" width="1.02" height="1.02" fill="#110c05"/><rect x="29" y="27" width="1.02" height="1.02" fill="#1e1a13"/><rect x="30" y="27" width="1.02" height="1.02" fill="#434341"/><rect x="31" y="27" width="1.02" height="1.02" fill="#1d1f28"/><rect x="32" y="27" width="1.02" height="1.02" fill="#251a0e"/><rect x="33" y="27" width="1.02" height="1.02" fill="#3e2e18"/><rect x="34" y="27" width="1.02" height="1.02" fill="#22170b"/><rect x="35" y="27" width="1.02" height="1.02" fill="#1e1e08"/><rect x="36" y="27" width="1.02" height="1.02" fill="#1d1f28"/><rect x="37" y="27" width="1.02" height="1.02" fill="#262737"/><rect x="38" y="27" width="1.02" height="1.02" fill="#21210b"/><rect x="39" y="27" width="1.02" height="1.02" fill="#1d150b"/><rect x="40" y="27" width="1.02" height="1.02" fill="#1e1e08"/><rect x="41" y="27" width="1.02" height="1.02" fill="#150f08"/><rect x="42" y="27" width="1.02" height="1.02" fill="#1f1f09"/><rect x="43" y="27" width="1.02" height="1.02" fill="#151009"/><rect x="44" y="27" width="1.02" height="1.02" fill="#25240d"/><rect x="45" y="27" width="1.02" height="1.02" fill="#110c05"/><rect x="46" y="27" width="1.02" height="1.02" fill="#1c150d"/><rect x="47" y="27" width="1.02" height="1.02" fill="#1b1710"/><rect x="48" y="27" width="1.02" height="1.02" fill="#362815"/><rect x="49" y="27" width="1.02" height="1.02" fill="#130e07"/><rect x="50" y="27" width="1.02" height="1.02" fill="#21160a"/><rect x="51" y="27" width="1.02" height="1.02" fill="#15110b"/><rect x="52" y="27" width="1.02" height="1.02" fill="#1f170d"/><rect x="53" y="27" width="1.02" height="1.02" fill="#26250e"/><rect x="54" y="27" width="1.02" height="1.02" fill="#252632"/><rect x="55" y="27" width="1.02" height="1.02" fill="#362815"/><rect x="56" y="27" width="1.02" height="1.02" fill="#1d150b"/><rect x="57" y="27" width="1.02" height="1.02" fill="#100c05"/><rect x="58" y="27" width="1.02" height="1.02" fill="#141009"/><rect x="59" y="27" width="1.02" height="1.02" fill="#0e0b05"/><rect x="60" y="27" width="1.02" height="1.02" fill="#2a2b3e"/><rect x="61" y="27" width="1.02" height="1.02" fill="#2c2011"/><rect x="62" y="27" width="1.02" height="1.02" fill="#261c0f"/><rect x="63" y="27" width="1.02" height="1.02" fill="#2e2213"/><rect x="0" y="28" width="1.02" height="1.02" fill="#0f0b04"/><rect x="1" y="28" width="1.02" height="1.02" fill="#2e2f42"/><rect x="2" y="28" width="1.02" height="1.02" fill="#1d1d07"/><rect x="3" y="28" width="1.02" height="1.02" fill="#27260f"/><rect x="4" y="28" width="1.02" height="1.02" fill="#3c2c16"/><rect x="5" y="28" width="1.02" height="1.02" fill="#16110a"/><rect x="6" y="28" width="1.02" height="1.02" fill="#3a2a14"/><rect x="7" y="28" width="1.02" height="1.02" fill="#202128"/><rect x="8" y="28" width="1.02" height="1.02" fill="#1b140c"/><rect x="9" y="28" width="1.02" height="1.02" fill="#181109"/><rect x="10" y="28" width="1.02" height="1.02" fill="#1e1f26"/><rect x="11" y="28" width="1.02" height="1.02" fill="#393939"/><rect x="12" y="28" width="1.02" height="1.02" fill="#191b06"/><rect x="13" y="28" width="1.02" height="1.02" fill="#1e1a13"/><rect x="14" y="28" width="1.02" height="1.02" fill="#181a05"/><rect x="15" y="28" width="1.02" height="1.02" fill="#1e1f27"/><rect x="16" y="28" width="1.02" height="1.02" fill="#332512"/><rect x="17" y="28" width="1.02" height="1.02" fill="#23252e"/><rect x="18" y="28" width="1.02" height="1.02" fill="#392913"/><rect x="19" y="28" width="1.02" height="1.02" fill="#150e05"/><rect x="20" y="28" width="1.02" height="1.02" fill="#1b1d08"/><rect x="21" y="28" width="1.02" height="1.02" fill="#1f1f09"/><rect x="22" y="28" width="1.02" height="1.02" fill="#22170b"/><rect x="23" y="28" width="1.02" height="1.02" fill="#21160a"/><rect x="24" y="28" width="1.02" height="1.02" fill="#2e2213"/><rect x="25" y="28" width="1.02" height="1.02" fill="#271c10"/><rect x="26" y="28" width="1.02" height="1.02" fill="#2f3131"/><rect x="27" y="28" width="1.02" height="1.02" fill="#17120b"/><rect x="28" y="28" width="1.02" height="1.02" fill="#0d0903"/><rect x="29" y="28" width="1.02" height="1.02" fill="#3c2c16"/><rect x="30" y="28" width="1.02" height="1.02" fill="#20200a"/><rect x="31" y="28" width="1.02" height="1.02" fill="#201c15"/><rect x="32" y="28" width="1.02" height="1.02" fill="#424240"/><rect x="33" y="28" width="1.02" height="1.02" fill="#1e1e08"/><rect x="34" y="28" width="1.02" height="1.02" fill="#160f07"/><rect x="35" y="28" width="1.02" height="1.02" fill="#434341"/><rect x="36" y="28" width="1.02" height="1.02" fill="#151009"/><rect x="37" y="28" width="1.02" height="1.02" fill="#20222b"/><rect x="38" y="28" width="1.02" height="1.02" fill="#1c140a"/><rect x="39" y="28" width="1.02" height="1.02" fill="#2c2011"/><rect x="40" y="28" width="1.02" height="1.02" fill="#2e2213"/><rect x="41" y="28" width="1.02" height="1.02" fill="#23180c"/><rect x="42" y="28" width="1.02" height="1.02" fill="#303247"/><rect x="43" y="28" width="1.02" height="1.02" fill="#181109"/><rect x="44" y="28" width="1.02" height="1.02" fill="#322411"/><rect x="45" y="28" width="1.02" height="1.02" fill="#3d2d17"/><rect x="46" y="28" width="1.02" height="1.02" fill="#1e200b"/><rect x="47" y="28" width="1.02" height="1.02" fill="#272834"/><rect x="48" y="28" width="1.02" height="1.02" fill="#1d1912"/><rect x="49" y="28" width="1.02" height="1.02" fill="#2f3146"/><rect x="50" y="28" width="1.02" height="1.02" fill="#2d2112"/><rect x="51" y="28" width="1.02" height="1.02" fill="#1e160c"/><rect x="52" y="28" width="1.02" height="1.02" fill="#3f2f19"/><rect x="53" y="28" width="1.02" height="1.02" fill="#19120a"/><rect x="54" y="28" width="1.02" height="1.02" fill="#110c05"/><rect x="55" y="28" width="1.02" height="1.02" fill="#22210a"/><rect x="56" y="28" width="1.02" height="1.02" fill="#252632"/><rect x="57" y="28" width="1.02" height="1.02" fill="#27260f"/><rect x="58" y="28" width="1.02" height="1.02" fill="#3a2a14"/><rect x="59" y="28" width="1.02" height="1.02" fill="#201c15"/><rect x="60" y="28" width="1.02" height="1.02" fill="#262637"/><rect x="61" y="28" width="1.02" height="1.02" fill="#342613"/><rect x="62" y="28" width="1.02" height="1.02" fill="#23230d"/><rect x="63" y="28" width="1.02" height="1.02" fill="#1e1e08"/><rect x="0" y="29" width="1.02" height="1.02" fill="#23180c"/><rect x="1" y="29" width="1.02" height="1.02" fill="#332512"/><rect x="2" y="29" width="1.02" height="1.02" fill="#1b1309"/><rect x="3" y="29" width="1.02" height="1.02" fill="#1f1f09"/><rect x="4" y="29" width="1.02" height="1.02" fill="#201c15"/><rect x="5" y="29" width="1.02" height="1.02" fill="#100c06"/><rect x="6" y="29" width="1.02" height="1.02" fill="#1e160c"/><rect x="7" y="29" width="1.02" height="1.02" fill="#181109"/><rect x="8" y="29" width="1.02" height="1.02" fill="#1f1b14"/><rect x="9" y="29" width="1.02" height="1.02" fill="#303247"/><rect x="10" y="29" width="1.02" height="1.02" fill="#1b1710"/><rect x="11" y="29" width="1.02" height="1.02" fill="#1e1a13"/><rect x="12" y="29" width="1.02" height="1.02" fill="#2f3131"/><rect x="13" y="29" width="1.02" height="1.02" fill="#1b1812"/><rect x="14" y="29" width="1.02" height="1.02" fill="#1d1d07"/><rect x="15" y="29" width="1.02" height="1.02" fill="#1c150d"/><rect x="16" y="29" width="1.02" height="1.02" fill="#25240d"/><rect x="17" y="29" width="1.02" height="1.02" fill="#292a3d"/><rect x="18" y="29" width="1.02" height="1.02" fill="#1d1f28"/><rect x="19" y="29" width="1.02" height="1.02" fill="#1e1f26"/><rect x="20" y="29" width="1.02" height="1.02" fill="#261b0f"/><rect x="21" y="29" width="1.02" height="1.02" fill="#171704"/><rect x="22" y="29" width="1.02" height="1.02" fill="#3e2e18"/><rect x="23" y="29" width="1.02" height="1.02" fill="#23180c"/><rect x="24" y="29" width="1.02" height="1.02" fill="#291f12"/><rect x="25" y="29" width="1.02" height="1.02" fill="#1d1e25"/><rect x="26" y="29" width="1.02" height="1.02" fill="#21222e"/><rect x="27" y="29" width="1.02" height="1.02" fill="#1e160c"/><rect x="28" y="29" width="1.02" height="1.02" fill="#090500"/><rect x="29" y="29" width="1.02" height="1.02" fill="#20180e"/><rect x="30" y="29" width="1.02" height="1.02" fill="#141009"/><rect x="31" y="29" width="1.02" height="1.02" fill="#18150f"/><rect x="32" y="29" width="1.02" height="1.02" fill="#2a1e0f"/><rect x="33" y="29" width="1.02" height="1.02" fill="#1f212a"/><rect x="34" y="29" width="1.02" height="1.02" fill="#1b1710"/><rect x="35" y="29" width="1.02" height="1.02" fill="#1d1d07"/><rect x="36" y="29" width="1.02" height="1.02" fill="#151009"/><rect x="37" y="29" width="1.02" height="1.02" fill="#26250e"/><rect x="38" y="29" width="1.02" height="1.02" fill="#272834"/><rect x="39" y="29" width="1.02" height="1.02" fill="#241a0d"/><rect x="40" y="29" width="1.02" height="1.02" fill="#24230c"/><rect x="41" y="29" width="1.02" height="1.02" fill="#110c05"/><rect x="42" y="29" width="1.02" height="1.02" fill="#271c10"/><rect x="43" y="29" width="1.02" height="1.02" fill="#120c05"/><rect x="44" y="29" width="1.02" height="1.02" fill="#362815"/><rect x="45" y="29" width="1.02" height="1.02" fill="#181109"/><rect x="46" y="29" width="1.02" height="1.02" fill="#251a0e"/><rect x="47" y="29" width="1.02" height="1.02" fill="#17120b"/><rect x="48" y="29" width="1.02" height="1.02" fill="#18150f"/><rect x="49" y="29" width="1.02" height="1.02" fill="#2a2c3e"/><rect x="50" y="29" width="1.02" height="1.02" fill="#27260f"/><rect x="51" y="29" width="1.02" height="1.02" fill="#1b1309"/><rect x="52" y="29" width="1.02" height="1.02" fill="#120e07"/><rect x="53" y="29" width="1.02" height="1.02" fill="#21222e"/><rect x="54" y="29" width="1.02" height="1.02" fill="#181109"/><rect x="55" y="29" width="1.02" height="1.02" fill="#1e1d09"/><rect x="56" y="29" width="1.02" height="1.02" fill="#322411"/><rect x="57" y="29" width="1.02" height="1.02" fill="#1a1c07"/><rect x="58" y="29" width="1.02" height="1.02" fill="#19120a"/><rect x="59" y="29" width="1.02" height="1.02" fill="#3f2f19"/><rect x="60" y="29" width="1.02" height="1.02" fill="#2a2c2c"/><rect x="61" y="29" width="1.02" height="1.02" fill="#130e07"/><rect x="62" y="29" width="1.02" height="1.02" fill="#352714"/><rect x="63" y="29" width="1.02" height="1.02" fill="#1c140a"/><rect x="0" y="30" width="1.02" height="1.02" fill="#22170b"/><rect x="1" y="30" width="1.02" height="1.02" fill="#2e3045"/><rect x="2" y="30" width="1.02" height="1.02" fill="#434341"/><rect x="3" y="30" width="1.02" height="1.02" fill="#3e2e18"/><rect x="4" y="30" width="1.02" height="1.02" fill="#3c2c16"/><rect x="5" y="30" width="1.02" height="1.02" fill="#2d2112"/><rect x="6" y="30" width="1.02" height="1.02" fill="#40403e"/><rect x="7" y="30" width="1.02" height="1.02" fill="#261b0f"/><rect x="8" y="30" width="1.02" height="1.02" fill="#362815"/><rect x="9" y="30" width="1.02" height="1.02" fill="#303247"/><rect x="10" y="30" width="1.02" height="1.02" fill="#1c150d"/><rect x="11" y="30" width="1.02" height="1.02" fill="#22170b"/><rect x="12" y="30" width="1.02" height="1.02" fill="#1c1811"/><rect x="13" y="30" width="1.02" height="1.02" fill="#1b140c"/><rect x="14" y="30" width="1.02" height="1.02" fill="#464644"/><rect x="15" y="30" width="1.02" height="1.02" fill="#2c2011"/><rect x="16" y="30" width="1.02" height="1.02" fill="#373737"/><rect x="17" y="30" width="1.02" height="1.02" fill="#201c15"/><rect x="18" y="30" width="1.02" height="1.02" fill="#161820"/><rect x="19" y="30" width="1.02" height="1.02" fill="#392913"/><rect x="20" y="30" width="1.02" height="1.02" fill="#120d06"/><rect x="21" y="30" width="1.02" height="1.02" fill="#23180c"/><rect x="22" y="30" width="1.02" height="1.02" fill="#271c10"/><rect x="23" y="30" width="1.02" height="1.02" fill="#3f2f19"/><rect x="24" y="30" width="1.02" height="1.02" fill="#1c150d"/><rect x="25" y="30" width="1.02" height="1.02" fill="#24230c"/><rect x="26" y="30" width="1.02" height="1.02" fill="#261b0f"/><rect x="27" y="30" width="1.02" height="1.02" fill="#21232c"/><rect x="28" y="30" width="1.02" height="1.02" fill="#342613"/><rect x="29" y="30" width="1.02" height="1.02" fill="#3b2b15"/><rect x="30" y="30" width="1.02" height="1.02" fill="#352714"/><rect x="31" y="30" width="1.02" height="1.02" fill="#454543"/><rect x="32" y="30" width="1.02" height="1.02" fill="#1d1912"/><rect x="33" y="30" width="1.02" height="1.02" fill="#1d1f28"/><rect x="34" y="30" width="1.02" height="1.02" fill="#22170b"/><rect x="35" y="30" width="1.02" height="1.02" fill="#292a3d"/><rect x="36" y="30" width="1.02" height="1.02" fill="#0f0b04"/><rect x="37" y="30" width="1.02" height="1.02" fill="#434341"/><rect x="38" y="30" width="1.02" height="1.02" fill="#2e2f42"/><rect x="39" y="30" width="1.02" height="1.02" fill="#21160a"/><rect x="40" y="30" width="1.02" height="1.02" fill="#20180e"/><rect x="41" y="30" width="1.02" height="1.02" fill="#41413f"/><rect x="42" y="30" width="1.02" height="1.02" fill="#1d1e25"/><rect x="43" y="30" width="1.02" height="1.02" fill="#1e160c"/><rect x="44" y="30" width="1.02" height="1.02" fill="#1a1b22"/><rect x="45" y="30" width="1.02" height="1.02" fill="#1b1710"/><rect x="46" y="30" width="1.02" height="1.02" fill="#343434"/><rect x="47" y="30" width="1.02" height="1.02" fill="#27260f"/><rect x="48" y="30" width="1.02" height="1.02" fill="#151009"/><rect x="49" y="30" width="1.02" height="1.02" fill="#20180e"/><rect x="50" y="30" width="1.02" height="1.02" fill="#242531"/><rect x="51" y="30" width="1.02" height="1.02" fill="#1a160f"/><rect x="52" y="30" width="1.02" height="1.02" fill="#21190f"/><rect x="53" y="30" width="1.02" height="1.02" fill="#3c2c16"/><rect x="54" y="30" width="1.02" height="1.02" fill="#40403e"/><rect x="55" y="30" width="1.02" height="1.02" fill="#130f08"/><rect x="56" y="30" width="1.02" height="1.02" fill="#1f1f09"/><rect x="57" y="30" width="1.02" height="1.02" fill="#130f08"/><rect x="58" y="30" width="1.02" height="1.02" fill="#100c05"/><rect x="59" y="30" width="1.02" height="1.02" fill="#1b1d08"/><rect x="60" y="30" width="1.02" height="1.02" fill="#140f08"/><rect x="61" y="30" width="1.02" height="1.02" fill="#1a130b"/><rect x="62" y="30" width="1.02" height="1.02" fill="#392913"/><rect x="63" y="30" width="1.02" height="1.02" fill="#353535"/><rect x="0" y="31" width="1.02" height="1.02" fill="#0c080b"/><rect x="1" y="31" width="1.02" height="1.02" fill="#050305"/><rect x="2" y="31" width="1.02" height="1.02" fill="#080707"/><rect x="3" y="31" width="1.02" height="1.02" fill="#0a0f09"/><rect x="4" y="31" width="1.02" height="1.02" fill="#0c090b"/><rect x="5" y="31" width="1.02" height="1.02" fill="#070807"/><rect x="6" y="31" width="1.02" height="1.02" fill="#0d0c07"/><rect x="7" y="31" width="1.02" height="1.02" fill="#0c0709"/><rect x="8" y="31" width="1.02" height="1.02" fill="#090a04"/><rect x="9" y="31" width="1.02" height="1.02" fill="#050800"/><rect x="10" y="31" width="1.02" height="1.02" fill="#090809"/><rect x="11" y="31" width="1.02" height="1.02" fill="#0b0504"/><rect x="12" y="31" width="1.02" height="1.02" fill="#040404"/><rect x="13" y="31" width="1.02" height="1.02" fill="#050904"/><rect x="14" y="31" width="1.02" height="1.02" fill="#0f090b"/><rect x="15" y="31" width="1.02" height="1.02" fill="#090a06"/><rect x="16" y="31" width="1.02" height="1.02" fill="#090402"/><rect x="17" y="31" width="1.02" height="1.02" fill="#050400"/><rect x="18" y="31" width="1.02" height="1.02" fill="#060406"/><rect x="19" y="31" width="1.02" height="1.02" fill="#0e0f0b"/><rect x="20" y="31" width="1.02" height="1.02" fill="#080503"/><rect x="21" y="31" width="1.02" height="1.02" fill="#0b0805"/><rect x="22" y="31" width="1.02" height="1.02" fill="#100e08"/><rect x="23" y="31" width="1.02" height="1.02" fill="#060a02"/><rect x="24" y="31" width="1.02" height="1.02" fill="#0a0702"/><rect x="25" y="31" width="1.02" height="1.02" fill="#080907"/><rect x="26" y="31" width="1.02" height="1.02" fill="#070404"/><rect x="27" y="31" width="1.02" height="1.02" fill="#080a0a"/><rect x="28" y="31" width="1.02" height="1.02" fill="#0b0c04"/><rect x="29" y="31" width="1.02" height="1.02" fill="#060605"/><rect x="30" y="31" width="1.02" height="1.02" fill="#030301"/><rect x="31" y="31" width="1.02" height="1.02" fill="#050607"/><rect x="32" y="31" width="1.02" height="1.02" fill="#060604"/><rect x="33" y="31" width="1.02" height="1.02" fill="#0d0508"/><rect x="34" y="31" width="1.02" height="1.02" fill="#0a0800"/><rect x="35" y="31" width="1.02" height="1.02" fill="#080702"/><rect x="36" y="31" width="1.02" height="1.02" fill="#0b0906"/><rect x="37" y="31" width="1.02" height="1.02" fill="#0d0e07"/><rect x="38" y="31" width="1.02" height="1.02" fill="#050902"/><rect x="39" y="31" width="1.02" height="1.02" fill="#0c0a07"/><rect x="40" y="31" width="1.02" height="1.02" fill="#050605"/><rect x="41" y="31" width="1.02" height="1.02" fill="#0e0b07"/><rect x="42" y="31" width="1.02" height="1.02" fill="#0d0b05"/><rect x="43" y="31" width="1.02" height="1.02" fill="#0c0603"/><rect x="44" y="31" width="1.02" height="1.02" fill="#060b08"/><rect x="45" y="31" width="1.02" height="1.02" fill="#080b05"/><rect x="46" y="31" width="1.02" height="1.02" fill="#080908"/><rect x="47" y="31" width="1.02" height="1.02" fill="#0d0606"/><rect x="48" y="31" width="1.02" height="1.02" fill="#070506"/><rect x="49" y="31" width="1.02" height="1.02" fill="#060704"/><rect x="50" y="31" width="1.02" height="1.02" fill="#0e0808"/><rect x="51" y="31" width="1.02" height="1.02" fill="#070907"/><rect x="52" y="31" width="1.02" height="1.02" fill="#060805"/><rect x="53" y="31" width="1.02" height="1.02" fill="#0e0b0b"/><rect x="54" y="31" width="1.02" height="1.02" fill="#0d0c07"/><rect x="55" y="31" width="1.02" height="1.02" fill="#080807"/><rect x="56" y="31" width="1.02" height="1.02" fill="#0e0708"/><rect x="57" y="31" width="1.02" height="1.02" fill="#060909"/><rect x="58" y="31" width="1.02" height="1.02" fill="#0e0c0b"/><rect x="59" y="31" width="1.02" height="1.02" fill="#040705"/><rect x="60" y="31" width="1.02" height="1.02" fill="#090805"/><rect x="61" y="31" width="1.02" height="1.02" fill="#0f0805"/><rect x="62" y="31" width="1.02" height="1.02" fill="#050604"/><rect x="63" y="31" width="1.02" height="1.02" fill="#0c0b08"/><rect x="0" y="32" width="1.02" height="1.02" fill="#19120a"/><rect x="1" y="32" width="1.02" height="1.02" fill="#17120b"/><rect x="2" y="32" width="1.02" height="1.02" fill="#120e07"/><rect x="3" y="32" width="1.02" height="1.02" fill="#1e2029"/><rect x="4" y="32" width="1.02" height="1.02" fill="#1d1912"/><rect x="5" y="32" width="1.02" height="1.02" fill="#151009"/><rect x="6" y="32" width="1.02" height="1.02" fill="#1d1f28"/><rect x="7" y="32" width="1.02" height="1.02" fill="#392913"/><rect x="8" y="32" width="1.02" height="1.02" fill="#1a160f"/><rect x="9" y="32" width="1.02" height="1.02" fill="#251a0e"/><rect x="10" y="32" width="1.02" height="1.02" fill="#332512"/><rect x="11" y="32" width="1.02" height="1.02" fill="#151009"/><rect x="12" y="32" width="1.02" height="1.02" fill="#160f07"/><rect x="13" y="32" width="1.02" height="1.02" fill="#181109"/><rect x="14" y="32" width="1.02" height="1.02" fill="#151009"/><rect x="15" y="32" width="1.02" height="1.02" fill="#19120a"/><rect x="16" y="32" width="1.02" height="1.02" fill="#201c15"/><rect x="17" y="32" width="1.02" height="1.02" fill="#20222b"/><rect x="18" y="32" width="1.02" height="1.02" fill="#1c150d"/><rect x="19" y="32" width="1.02" height="1.02" fill="#160f07"/><rect x="20" y="32" width="1.02" height="1.02" fill="#20222b"/><rect x="21" y="32" width="1.02" height="1.02" fill="#1d150b"/><rect x="22" y="32" width="1.02" height="1.02" fill="#110c05"/><rect x="23" y="32" width="1.02" height="1.02" fill="#1c150d"/><rect x="24" y="32" width="1.02" height="1.02" fill="#1d1912"/><rect x="25" y="32" width="1.02" height="1.02" fill="#17120b"/><rect x="26" y="32" width="1.02" height="1.02" fill="#100c05"/><rect x="27" y="32" width="1.02" height="1.02" fill="#20222b"/><rect x="28" y="32" width="1.02" height="1.02" fill="#1a160f"/><rect x="29" y="32" width="1.02" height="1.02" fill="#332512"/><rect x="30" y="32" width="1.02" height="1.02" fill="#110c05"/><rect x="31" y="32" width="1.02" height="1.02" fill="#130f08"/><rect x="32" y="32" width="1.02" height="1.02" fill="#1c1811"/><rect x="33" y="32" width="1.02" height="1.02" fill="#0e0a03"/><rect x="34" y="32" width="1.02" height="1.02" fill="#312310"/><rect x="35" y="32" width="1.02" height="1.02" fill="#1a160f"/><rect x="36" y="32" width="1.02" height="1.02" fill="#0f0b04"/><rect x="37" y="32" width="1.02" height="1.02" fill="#1d1912"/><rect x="38" y="32" width="1.02" height="1.02" fill="#1b1309"/><rect x="39" y="32" width="1.02" height="1.02" fill="#1e1a13"/><rect x="40" y="32" width="1.02" height="1.02" fill="#1c150d"/><rect x="41" y="32" width="1.02" height="1.02" fill="#1f212a"/><rect x="42" y="32" width="1.02" height="1.02" fill="#130f08"/><rect x="43" y="32" width="1.02" height="1.02" fill="#2a1e0f"/><rect x="44" y="32" width="1.02" height="1.02" fill="#171008"/><rect x="45" y="32" width="1.02" height="1.02" fill="#140f08"/><rect x="46" y="32" width="1.02" height="1.02" fill="#2b1f10"/><rect x="47" y="32" width="1.02" height="1.02" fill="#19120a"/><rect x="48" y="32" width="1.02" height="1.02" fill="#21232c"/><rect x="49" y="32" width="1.02" height="1.02" fill="#1b140c"/><rect x="50" y="32" width="1.02" height="1.02" fill="#3e2e18"/><rect x="51" y="32" width="1.02" height="1.02" fill="#140f08"/><rect x="52" y="32" width="1.02" height="1.02" fill="#3c2c16"/><rect x="53" y="32" width="1.02" height="1.02" fill="#1a160f"/><rect x="54" y="32" width="1.02" height="1.02" fill="#1a160f"/><rect x="55" y="32" width="1.02" height="1.02" fill="#19120a"/><rect x="56" y="32" width="1.02" height="1.02" fill="#120e07"/><rect x="57" y="32" width="1.02" height="1.02" fill="#151009"/><rect x="58" y="32" width="1.02" height="1.02" fill="#130e07"/><rect x="59" y="32" width="1.02" height="1.02" fill="#17120b"/><rect x="60" y="32" width="1.02" height="1.02" fill="#1b1710"/><rect x="61" y="32" width="1.02" height="1.02" fill="#120e07"/><rect x="62" y="32" width="1.02" height="1.02" fill="#110c05"/><rect x="63" y="32" width="1.02" height="1.02" fill="#1e160c"/><rect x="0" y="33" width="1.02" height="1.02" fill="#2a1e0f"/><rect x="1" y="33" width="1.02" height="1.02" fill="#352714"/><rect x="2" y="33" width="1.02" height="1.02" fill="#3f2e16"/><rect x="3" y="33" width="1.02" height="1.02" fill="#2d2112"/><rect x="4" y="33" width="1.02" height="1.02" fill="#423119"/><rect x="5" y="33" width="1.02" height="1.02" fill="#130f08"/><rect x="6" y="33" width="1.02" height="1.02" fill="#21232c"/><rect x="7" y="33" width="1.02" height="1.02" fill="#2b1f10"/><rect x="8" y="33" width="1.02" height="1.02" fill="#2d2f2f"/><rect x="9" y="33" width="1.02" height="1.02" fill="#454543"/><rect x="10" y="33" width="1.02" height="1.02" fill="#2f2314"/><rect x="11" y="33" width="1.02" height="1.02" fill="#352714"/><rect x="12" y="33" width="1.02" height="1.02" fill="#2c2d40"/><rect x="13" y="33" width="1.02" height="1.02" fill="#3e2d15"/><rect x="14" y="33" width="1.02" height="1.02" fill="#110d06"/><rect x="15" y="33" width="1.02" height="1.02" fill="#423119"/><rect x="16" y="33" width="1.02" height="1.02" fill="#201c15"/><rect x="17" y="33" width="1.02" height="1.02" fill="#100c05"/><rect x="18" y="33" width="1.02" height="1.02" fill="#2a1e0f"/><rect x="19" y="33" width="1.02" height="1.02" fill="#312310"/><rect x="20" y="33" width="1.02" height="1.02" fill="#44331b"/><rect x="21" y="33" width="1.02" height="1.02" fill="#402f17"/><rect x="22" y="33" width="1.02" height="1.02" fill="#3a3a3a"/><rect x="23" y="33" width="1.02" height="1.02" fill="#362815"/><rect x="24" y="33" width="1.02" height="1.02" fill="#373737"/><rect x="25" y="33" width="1.02" height="1.02" fill="#34364b"/><rect x="26" y="33" width="1.02" height="1.02" fill="#2f2314"/><rect x="27" y="33" width="1.02" height="1.02" fill="#1d1912"/><rect x="28" y="33" width="1.02" height="1.02" fill="#2e2213"/><rect x="29" y="33" width="1.02" height="1.02" fill="#291d0e"/><rect x="30" y="33" width="1.02" height="1.02" fill="#362815"/><rect x="31" y="33" width="1.02" height="1.02" fill="#44331b"/><rect x="32" y="33" width="1.02" height="1.02" fill="#352714"/><rect x="33" y="33" width="1.02" height="1.02" fill="#1a130b"/><rect x="34" y="33" width="1.02" height="1.02" fill="#291d0e"/><rect x="35" y="33" width="1.02" height="1.02" fill="#2e3030"/><rect x="36" y="33" width="1.02" height="1.02" fill="#3f2e16"/><rect x="37" y="33" width="1.02" height="1.02" fill="#2f2314"/><rect x="38" y="33" width="1.02" height="1.02" fill="#232430"/><rect x="39" y="33" width="1.02" height="1.02" fill="#3f2e16"/><rect x="40" y="33" width="1.02" height="1.02" fill="#424240"/><rect x="41" y="33" width="1.02" height="1.02" fill="#291d0e"/><rect x="42" y="33" width="1.02" height="1.02" fill="#110d06"/><rect x="43" y="33" width="1.02" height="1.02" fill="#413018"/><rect x="44" y="33" width="1.02" height="1.02" fill="#1b1c23"/><rect x="45" y="33" width="1.02" height="1.02" fill="#423119"/><rect x="46" y="33" width="1.02" height="1.02" fill="#362815"/><rect x="47" y="33" width="1.02" height="1.02" fill="#2f2314"/><rect x="48" y="33" width="1.02" height="1.02" fill="#353535"/><rect x="49" y="33" width="1.02" height="1.02" fill="#3e2d15"/><rect x="50" y="33" width="1.02" height="1.02" fill="#352714"/><rect x="51" y="33" width="1.02" height="1.02" fill="#413018"/><rect x="52" y="33" width="1.02" height="1.02" fill="#383838"/><rect x="53" y="33" width="1.02" height="1.02" fill="#2b1f10"/><rect x="54" y="33" width="1.02" height="1.02" fill="#2d2112"/><rect x="55" y="33" width="1.02" height="1.02" fill="#2f2314"/><rect x="56" y="33" width="1.02" height="1.02" fill="#242531"/><rect x="57" y="33" width="1.02" height="1.02" fill="#423119"/><rect x="58" y="33" width="1.02" height="1.02" fill="#402f17"/><rect x="59" y="33" width="1.02" height="1.02" fill="#44331b"/><rect x="60" y="33" width="1.02" height="1.02" fill="#2e2213"/><rect x="61" y="33" width="1.02" height="1.02" fill="#342613"/><rect x="62" y="33" width="1.02" height="1.02" fill="#2e2f42"/><rect x="63" y="33" width="1.02" height="1.02" fill="#30220f"/><rect x="0" y="34" width="1.02" height="1.02" fill="#30220f"/><rect x="1" y="34" width="1.02" height="1.02" fill="#30220f"/><rect x="2" y="34" width="1.02" height="1.02" fill="#362815"/><rect x="3" y="34" width="1.02" height="1.02" fill="#2e2213"/><rect x="4" y="34" width="1.02" height="1.02" fill="#312310"/><rect x="5" y="34" width="1.02" height="1.02" fill="#2c2011"/><rect x="6" y="34" width="1.02" height="1.02" fill="#2c2011"/><rect x="7" y="34" width="1.02" height="1.02" fill="#2d2e41"/><rect x="8" y="34" width="1.02" height="1.02" fill="#2d2e41"/><rect x="9" y="34" width="1.02" height="1.02" fill="#413018"/><rect x="10" y="34" width="1.02" height="1.02" fill="#2b1f10"/><rect x="11" y="34" width="1.02" height="1.02" fill="#402f17"/><rect x="12" y="34" width="1.02" height="1.02" fill="#413018"/><rect x="13" y="34" width="1.02" height="1.02" fill="#2c2011"/><rect x="14" y="34" width="1.02" height="1.02" fill="#402f17"/><rect x="15" y="34" width="1.02" height="1.02" fill="#291d0e"/><rect x="16" y="34" width="1.02" height="1.02" fill="#160f07"/><rect x="17" y="34" width="1.02" height="1.02" fill="#30220f"/><rect x="18" y="34" width="1.02" height="1.02" fill="#181109"/><rect x="19" y="34" width="1.02" height="1.02" fill="#464644"/><rect x="20" y="34" width="1.02" height="1.02" fill="#110d06"/><rect x="21" y="34" width="1.02" height="1.02" fill="#423119"/><rect x="22" y="34" width="1.02" height="1.02" fill="#30220f"/><rect x="23" y="34" width="1.02" height="1.02" fill="#3f2e16"/><rect x="24" y="34" width="1.02" height="1.02" fill="#2b1f10"/><rect x="25" y="34" width="1.02" height="1.02" fill="#17120b"/><rect x="26" y="34" width="1.02" height="1.02" fill="#44331b"/><rect x="27" y="34" width="1.02" height="1.02" fill="#362815"/><rect x="28" y="34" width="1.02" height="1.02" fill="#2b1f10"/><rect x="29" y="34" width="1.02" height="1.02" fill="#1c1811"/><rect x="30" y="34" width="1.02" height="1.02" fill="#2d2112"/><rect x="31" y="34" width="1.02" height="1.02" fill="#353535"/><rect x="32" y="34" width="1.02" height="1.02" fill="#2a1e0f"/><rect x="33" y="34" width="1.02" height="1.02" fill="#120e07"/><rect x="34" y="34" width="1.02" height="1.02" fill="#434341"/><rect x="35" y="34" width="1.02" height="1.02" fill="#2b1f10"/><rect x="36" y="34" width="1.02" height="1.02" fill="#2b1f10"/><rect x="37" y="34" width="1.02" height="1.02" fill="#2e2213"/><rect x="38" y="34" width="1.02" height="1.02" fill="#2d2112"/><rect x="39" y="34" width="1.02" height="1.02" fill="#30220f"/><rect x="40" y="34" width="1.02" height="1.02" fill="#413018"/><rect x="41" y="34" width="1.02" height="1.02" fill="#44331b"/><rect x="42" y="34" width="1.02" height="1.02" fill="#1c1d24"/><rect x="43" y="34" width="1.02" height="1.02" fill="#2b1f10"/><rect x="44" y="34" width="1.02" height="1.02" fill="#43321a"/><rect x="45" y="34" width="1.02" height="1.02" fill="#322411"/><rect x="46" y="34" width="1.02" height="1.02" fill="#160f07"/><rect x="47" y="34" width="1.02" height="1.02" fill="#402f17"/><rect x="48" y="34" width="1.02" height="1.02" fill="#291d0e"/><rect x="49" y="34" width="1.02" height="1.02" fill="#362815"/><rect x="50" y="34" width="1.02" height="1.02" fill="#342613"/><rect x="51" y="34" width="1.02" height="1.02" fill="#30220f"/><rect x="52" y="34" width="1.02" height="1.02" fill="#2b1f10"/><rect x="53" y="34" width="1.02" height="1.02" fill="#322411"/><rect x="54" y="34" width="1.02" height="1.02" fill="#0f0b04"/><rect x="55" y="34" width="1.02" height="1.02" fill="#312310"/><rect x="56" y="34" width="1.02" height="1.02" fill="#2b1f10"/><rect x="57" y="34" width="1.02" height="1.02" fill="#322411"/><rect x="58" y="34" width="1.02" height="1.02" fill="#2a1e0f"/><rect x="59" y="34" width="1.02" height="1.02" fill="#291d0e"/><rect x="60" y="34" width="1.02" height="1.02" fill="#2a1e0f"/><rect x="61" y="34" width="1.02" height="1.02" fill="#2c2011"/><rect x="62" y="34" width="1.02" height="1.02" fill="#352714"/><rect x="63" y="34" width="1.02" height="1.02" fill="#423119"/><rect x="0" y="35" width="1.02" height="1.02" fill="#22220c"/><rect x="1" y="35" width="1.02" height="1.02" fill="#1b1d08"/><rect x="2" y="35" width="1.02" height="1.02" fill="#2f3146"/><rect x="3" y="35" width="1.02" height="1.02" fill="#3e2e18"/><rect x="4" y="35" width="1.02" height="1.02" fill="#3e2e18"/><rect x="5" y="35" width="1.02" height="1.02" fill="#1a130b"/><rect x="6" y="35" width="1.02" height="1.02" fill="#202128"/><rect x="7" y="35" width="1.02" height="1.02" fill="#23230d"/><rect x="8" y="35" width="1.02" height="1.02" fill="#28293c"/><rect x="9" y="35" width="1.02" height="1.02" fill="#2e2213"/><rect x="10" y="35" width="1.02" height="1.02" fill="#140f08"/><rect x="11" y="35" width="1.02" height="1.02" fill="#181a05"/><rect x="12" y="35" width="1.02" height="1.02" fill="#1f2027"/><rect x="13" y="35" width="1.02" height="1.02" fill="#30220f"/><rect x="14" y="35" width="1.02" height="1.02" fill="#16110a"/><rect x="15" y="35" width="1.02" height="1.02" fill="#292b2b"/><rect x="16" y="35" width="1.02" height="1.02" fill="#262733"/><rect x="17" y="35" width="1.02" height="1.02" fill="#23252e"/><rect x="18" y="35" width="1.02" height="1.02" fill="#312310"/><rect x="19" y="35" width="1.02" height="1.02" fill="#292a3d"/><rect x="20" y="35" width="1.02" height="1.02" fill="#313348"/><rect x="21" y="35" width="1.02" height="1.02" fill="#20200a"/><rect x="22" y="35" width="1.02" height="1.02" fill="#282710"/><rect x="23" y="35" width="1.02" height="1.02" fill="#291d0e"/><rect x="24" y="35" width="1.02" height="1.02" fill="#100c05"/><rect x="25" y="35" width="1.02" height="1.02" fill="#21232c"/><rect x="26" y="35" width="1.02" height="1.02" fill="#140f08"/><rect x="27" y="35" width="1.02" height="1.02" fill="#352714"/><rect x="28" y="35" width="1.02" height="1.02" fill="#2e2213"/><rect x="29" y="35" width="1.02" height="1.02" fill="#110d06"/><rect x="30" y="35" width="1.02" height="1.02" fill="#151009"/><rect x="31" y="35" width="1.02" height="1.02" fill="#24190d"/><rect x="32" y="35" width="1.02" height="1.02" fill="#1b1309"/><rect x="33" y="35" width="1.02" height="1.02" fill="#24230c"/><rect x="34" y="35" width="1.02" height="1.02" fill="#160f07"/><rect x="35" y="35" width="1.02" height="1.02" fill="#1b140c"/><rect x="36" y="35" width="1.02" height="1.02" fill="#0f0b04"/><rect x="37" y="35" width="1.02" height="1.02" fill="#0e0a03"/><rect x="38" y="35" width="1.02" height="1.02" fill="#2b2c3f"/><rect x="39" y="35" width="1.02" height="1.02" fill="#25240d"/><rect x="40" y="35" width="1.02" height="1.02" fill="#24190d"/><rect x="41" y="35" width="1.02" height="1.02" fill="#303247"/><rect x="42" y="35" width="1.02" height="1.02" fill="#303247"/><rect x="43" y="35" width="1.02" height="1.02" fill="#17120b"/><rect x="44" y="35" width="1.02" height="1.02" fill="#362815"/><rect x="45" y="35" width="1.02" height="1.02" fill="#1b1309"/><rect x="46" y="35" width="1.02" height="1.02" fill="#393939"/><rect x="47" y="35" width="1.02" height="1.02" fill="#322411"/><rect x="48" y="35" width="1.02" height="1.02" fill="#1d1912"/><rect x="49" y="35" width="1.02" height="1.02" fill="#292b2b"/><rect x="50" y="35" width="1.02" height="1.02" fill="#201c15"/><rect x="51" y="35" width="1.02" height="1.02" fill="#23180c"/><rect x="52" y="35" width="1.02" height="1.02" fill="#352714"/><rect x="53" y="35" width="1.02" height="1.02" fill="#363636"/><rect x="54" y="35" width="1.02" height="1.02" fill="#0f0b04"/><rect x="55" y="35" width="1.02" height="1.02" fill="#2e3045"/><rect x="56" y="35" width="1.02" height="1.02" fill="#1b1d08"/><rect x="57" y="35" width="1.02" height="1.02" fill="#1c1e09"/><rect x="58" y="35" width="1.02" height="1.02" fill="#21160a"/><rect x="59" y="35" width="1.02" height="1.02" fill="#434341"/><rect x="60" y="35" width="1.02" height="1.02" fill="#1b140c"/><rect x="61" y="35" width="1.02" height="1.02" fill="#22210a"/><rect x="62" y="35" width="1.02" height="1.02" fill="#191b06"/><rect x="63" y="35" width="1.02" height="1.02" fill="#1d150b"/><rect x="0" y="36" width="1.02" height="1.02" fill="#332512"/><rect x="1" y="36" width="1.02" height="1.02" fill="#3e2e18"/><rect x="2" y="36" width="1.02" height="1.02" fill="#291d0e"/><rect x="3" y="36" width="1.02" height="1.02" fill="#26250e"/><rect x="4" y="36" width="1.02" height="1.02" fill="#25240d"/><rect x="5" y="36" width="1.02" height="1.02" fill="#22170b"/><rect x="6" y="36" width="1.02" height="1.02" fill="#2b1f10"/><rect x="7" y="36" width="1.02" height="1.02" fill="#16110a"/><rect x="8" y="36" width="1.02" height="1.02" fill="#19120a"/><rect x="9" y="36" width="1.02" height="1.02" fill="#303247"/><rect x="10" y="36" width="1.02" height="1.02" fill="#160f07"/><rect x="11" y="36" width="1.02" height="1.02" fill="#20180e"/><rect x="12" y="36" width="1.02" height="1.02" fill="#353535"/><rect x="13" y="36" width="1.02" height="1.02" fill="#2b1f0e"/><rect x="14" y="36" width="1.02" height="1.02" fill="#1b1d08"/><rect x="15" y="36" width="1.02" height="1.02" fill="#232424"/><rect x="16" y="36" width="1.02" height="1.02" fill="#1e200b"/><rect x="17" y="36" width="1.02" height="1.02" fill="#120d06"/><rect x="18" y="36" width="1.02" height="1.02" fill="#17120b"/><rect x="19" y="36" width="1.02" height="1.02" fill="#2e3045"/><rect x="20" y="36" width="1.02" height="1.02" fill="#2a1e0f"/><rect x="21" y="36" width="1.02" height="1.02" fill="#312310"/><rect x="22" y="36" width="1.02" height="1.02" fill="#1f1b14"/><rect x="23" y="36" width="1.02" height="1.02" fill="#342613"/><rect x="24" y="36" width="1.02" height="1.02" fill="#312310"/><rect x="25" y="36" width="1.02" height="1.02" fill="#3b2b15"/><rect x="26" y="36" width="1.02" height="1.02" fill="#352714"/><rect x="27" y="36" width="1.02" height="1.02" fill="#3a2a14"/><rect x="28" y="36" width="1.02" height="1.02" fill="#20180e"/><rect x="29" y="36" width="1.02" height="1.02" fill="#2c2011"/><rect x="30" y="36" width="1.02" height="1.02" fill="#232430"/><rect x="31" y="36" width="1.02" height="1.02" fill="#0f0b04"/><rect x="32" y="36" width="1.02" height="1.02" fill="#303247"/><rect x="33" y="36" width="1.02" height="1.02" fill="#352714"/><rect x="34" y="36" width="1.02" height="1.02" fill="#1c140a"/><rect x="35" y="36" width="1.02" height="1.02" fill="#20200a"/><rect x="36" y="36" width="1.02" height="1.02" fill="#1d1f28"/><rect x="37" y="36" width="1.02" height="1.02" fill="#171008"/><rect x="38" y="36" width="1.02" height="1.02" fill="#21210b"/><rect x="39" y="36" width="1.02" height="1.02" fill="#160f07"/><rect x="40" y="36" width="1.02" height="1.02" fill="#261b0f"/><rect x="41" y="36" width="1.02" height="1.02" fill="#292b3d"/><rect x="42" y="36" width="1.02" height="1.02" fill="#22242d"/><rect x="43" y="36" width="1.02" height="1.02" fill="#100c06"/><rect x="44" y="36" width="1.02" height="1.02" fill="#2e2213"/><rect x="45" y="36" width="1.02" height="1.02" fill="#232430"/><rect x="46" y="36" width="1.02" height="1.02" fill="#100c05"/><rect x="47" y="36" width="1.02" height="1.02" fill="#23180c"/><rect x="48" y="36" width="1.02" height="1.02" fill="#18150f"/><rect x="49" y="36" width="1.02" height="1.02" fill="#2c2011"/><rect x="50" y="36" width="1.02" height="1.02" fill="#22210a"/><rect x="51" y="36" width="1.02" height="1.02" fill="#1e140a"/><rect x="52" y="36" width="1.02" height="1.02" fill="#1b1710"/><rect x="53" y="36" width="1.02" height="1.02" fill="#2e3045"/><rect x="54" y="36" width="1.02" height="1.02" fill="#1b1309"/><rect x="55" y="36" width="1.02" height="1.02" fill="#130e07"/><rect x="56" y="36" width="1.02" height="1.02" fill="#3b2b15"/><rect x="57" y="36" width="1.02" height="1.02" fill="#392913"/><rect x="58" y="36" width="1.02" height="1.02" fill="#1f212a"/><rect x="59" y="36" width="1.02" height="1.02" fill="#202128"/><rect x="60" y="36" width="1.02" height="1.02" fill="#3a3a3a"/><rect x="61" y="36" width="1.02" height="1.02" fill="#201c15"/><rect x="62" y="36" width="1.02" height="1.02" fill="#21190f"/><rect x="63" y="36" width="1.02" height="1.02" fill="#1d1d07"/><rect x="0" y="37" width="1.02" height="1.02" fill="#2c2d40"/><rect x="1" y="37" width="1.02" height="1.02" fill="#24230c"/><rect x="2" y="37" width="1.02" height="1.02" fill="#19120a"/><rect x="3" y="37" width="1.02" height="1.02" fill="#261b0f"/><rect x="4" y="37" width="1.02" height="1.02" fill="#201f0c"/><rect x="5" y="37" width="1.02" height="1.02" fill="#1b1309"/><rect x="6" y="37" width="1.02" height="1.02" fill="#22170b"/><rect x="7" y="37" width="1.02" height="1.02" fill="#120e08"/><rect x="8" y="37" width="1.02" height="1.02" fill="#353535"/><rect x="9" y="37" width="1.02" height="1.02" fill="#1b140c"/><rect x="10" y="37" width="1.02" height="1.02" fill="#272834"/><rect x="11" y="37" width="1.02" height="1.02" fill="#3b2b15"/><rect x="12" y="37" width="1.02" height="1.02" fill="#2b2c3f"/><rect x="13" y="37" width="1.02" height="1.02" fill="#2b1f10"/><rect x="14" y="37" width="1.02" height="1.02" fill="#0e0a03"/><rect x="15" y="37" width="1.02" height="1.02" fill="#2d2f2f"/><rect x="16" y="37" width="1.02" height="1.02" fill="#1b1d08"/><rect x="17" y="37" width="1.02" height="1.02" fill="#21190f"/><rect x="18" y="37" width="1.02" height="1.02" fill="#0e0a03"/><rect x="19" y="37" width="1.02" height="1.02" fill="#22170b"/><rect x="20" y="37" width="1.02" height="1.02" fill="#1d1d07"/><rect x="21" y="37" width="1.02" height="1.02" fill="#26250e"/><rect x="22" y="37" width="1.02" height="1.02" fill="#21222e"/><rect x="23" y="37" width="1.02" height="1.02" fill="#1e2029"/><rect x="24" y="37" width="1.02" height="1.02" fill="#291d0c"/><rect x="25" y="37" width="1.02" height="1.02" fill="#30220f"/><rect x="26" y="37" width="1.02" height="1.02" fill="#2e2f42"/><rect x="27" y="37" width="1.02" height="1.02" fill="#302310"/><rect x="28" y="37" width="1.02" height="1.02" fill="#0e0a03"/><rect x="29" y="37" width="1.02" height="1.02" fill="#1d1e25"/><rect x="30" y="37" width="1.02" height="1.02" fill="#1b1b26"/><rect x="31" y="37" width="1.02" height="1.02" fill="#2d2e41"/><rect x="32" y="37" width="1.02" height="1.02" fill="#33354a"/><rect x="33" y="37" width="1.02" height="1.02" fill="#2b2d2d"/><rect x="34" y="37" width="1.02" height="1.02" fill="#3b2b15"/><rect x="35" y="37" width="1.02" height="1.02" fill="#352714"/><rect x="36" y="37" width="1.02" height="1.02" fill="#28293c"/><rect x="37" y="37" width="1.02" height="1.02" fill="#271c10"/><rect x="38" y="37" width="1.02" height="1.02" fill="#1d1d0a"/><rect x="39" y="37" width="1.02" height="1.02" fill="#171008"/><rect x="40" y="37" width="1.02" height="1.02" fill="#21180d"/><rect x="41" y="37" width="1.02" height="1.02" fill="#22210a"/><rect x="42" y="37" width="1.02" height="1.02" fill="#1c1e09"/><rect x="43" y="37" width="1.02" height="1.02" fill="#2d2112"/><rect x="44" y="37" width="1.02" height="1.02" fill="#1e160c"/><rect x="45" y="37" width="1.02" height="1.02" fill="#2a2b3e"/><rect x="46" y="37" width="1.02" height="1.02" fill="#424240"/><rect x="47" y="37" width="1.02" height="1.02" fill="#20160c"/><rect x="48" y="37" width="1.02" height="1.02" fill="#1d1f0a"/><rect x="49" y="37" width="1.02" height="1.02" fill="#2d2112"/><rect x="50" y="37" width="1.02" height="1.02" fill="#23220b"/><rect x="51" y="37" width="1.02" height="1.02" fill="#3a2a14"/><rect x="52" y="37" width="1.02" height="1.02" fill="#2e2213"/><rect x="53" y="37" width="1.02" height="1.02" fill="#3f2f19"/><rect x="54" y="37" width="1.02" height="1.02" fill="#30220f"/><rect x="55" y="37" width="1.02" height="1.02" fill="#130f08"/><rect x="56" y="37" width="1.02" height="1.02" fill="#1d1912"/><rect x="57" y="37" width="1.02" height="1.02" fill="#1b1710"/><rect x="58" y="37" width="1.02" height="1.02" fill="#1b1d25"/><rect x="59" y="37" width="1.02" height="1.02" fill="#201c15"/><rect x="60" y="37" width="1.02" height="1.02" fill="#23230d"/><rect x="61" y="37" width="1.02" height="1.02" fill="#2b1f10"/><rect x="62" y="37" width="1.02" height="1.02" fill="#1f170d"/><rect x="63" y="37" width="1.02" height="1.02" fill="#291d0e"/><rect x="0" y="38" width="1.02" height="1.02" fill="#392913"/><rect x="1" y="38" width="1.02" height="1.02" fill="#1f1f0b"/><rect x="2" y="38" width="1.02" height="1.02" fill="#28293c"/><rect x="3" y="38" width="1.02" height="1.02" fill="#2e3030"/><rect x="4" y="38" width="1.02" height="1.02" fill="#1d150b"/><rect x="5" y="38" width="1.02" height="1.02" fill="#22220c"/><rect x="6" y="38" width="1.02" height="1.02" fill="#3a3a3a"/><rect x="7" y="38" width="1.02" height="1.02" fill="#2a2b3e"/><rect x="8" y="38" width="1.02" height="1.02" fill="#1c140a"/><rect x="9" y="38" width="1.02" height="1.02" fill="#41413f"/><rect x="10" y="38" width="1.02" height="1.02" fill="#181109"/><rect x="11" y="38" width="1.02" height="1.02" fill="#1c140a"/><rect x="12" y="38" width="1.02" height="1.02" fill="#332512"/><rect x="13" y="38" width="1.02" height="1.02" fill="#272834"/><rect x="14" y="38" width="1.02" height="1.02" fill="#23252e"/><rect x="15" y="38" width="1.02" height="1.02" fill="#130e07"/><rect x="16" y="38" width="1.02" height="1.02" fill="#33354a"/><rect x="17" y="38" width="1.02" height="1.02" fill="#342613"/><rect x="18" y="38" width="1.02" height="1.02" fill="#24190d"/><rect x="19" y="38" width="1.02" height="1.02" fill="#130e07"/><rect x="20" y="38" width="1.02" height="1.02" fill="#3e2e18"/><rect x="21" y="38" width="1.02" height="1.02" fill="#22232f"/><rect x="22" y="38" width="1.02" height="1.02" fill="#1d1912"/><rect x="23" y="38" width="1.02" height="1.02" fill="#20200a"/><rect x="24" y="38" width="1.02" height="1.02" fill="#21222e"/><rect x="25" y="38" width="1.02" height="1.02" fill="#281c0b"/><rect x="26" y="38" width="1.02" height="1.02" fill="#19120a"/><rect x="27" y="38" width="1.02" height="1.02" fill="#181109"/><rect x="28" y="38" width="1.02" height="1.02" fill="#160f07"/><rect x="29" y="38" width="1.02" height="1.02" fill="#2c2011"/><rect x="30" y="38" width="1.02" height="1.02" fill="#191922"/><rect x="31" y="38" width="1.02" height="1.02" fill="#20222b"/><rect x="32" y="38" width="1.02" height="1.02" fill="#393939"/><rect x="33" y="38" width="1.02" height="1.02" fill="#1d1f0a"/><rect x="34" y="38" width="1.02" height="1.02" fill="#1b1710"/><rect x="35" y="38" width="1.02" height="1.02" fill="#251a0e"/><rect x="36" y="38" width="1.02" height="1.02" fill="#202131"/><rect x="37" y="38" width="1.02" height="1.02" fill="#21160a"/><rect x="38" y="38" width="1.02" height="1.02" fill="#292a3d"/><rect x="39" y="38" width="1.02" height="1.02" fill="#201c15"/><rect x="40" y="38" width="1.02" height="1.02" fill="#130e07"/><rect x="41" y="38" width="1.02" height="1.02" fill="#2f3131"/><rect x="42" y="38" width="1.02" height="1.02" fill="#201c15"/><rect x="43" y="38" width="1.02" height="1.02" fill="#22220c"/><rect x="44" y="38" width="1.02" height="1.02" fill="#23180c"/><rect x="45" y="38" width="1.02" height="1.02" fill="#352714"/><rect x="46" y="38" width="1.02" height="1.02" fill="#454543"/><rect x="47" y="38" width="1.02" height="1.02" fill="#1d140c"/><rect x="48" y="38" width="1.02" height="1.02" fill="#100c05"/><rect x="49" y="38" width="1.02" height="1.02" fill="#343434"/><rect x="50" y="38" width="1.02" height="1.02" fill="#312310"/><rect x="51" y="38" width="1.02" height="1.02" fill="#2e2213"/><rect x="52" y="38" width="1.02" height="1.02" fill="#1d150b"/><rect x="53" y="38" width="1.02" height="1.02" fill="#1d1912"/><rect x="54" y="38" width="1.02" height="1.02" fill="#242531"/><rect x="55" y="38" width="1.02" height="1.02" fill="#362815"/><rect x="56" y="38" width="1.02" height="1.02" fill="#252632"/><rect x="57" y="38" width="1.02" height="1.02" fill="#21160a"/><rect x="58" y="38" width="1.02" height="1.02" fill="#15161d"/><rect x="59" y="38" width="1.02" height="1.02" fill="#21160a"/><rect x="60" y="38" width="1.02" height="1.02" fill="#20200d"/><rect x="61" y="38" width="1.02" height="1.02" fill="#261b0f"/><rect x="62" y="38" width="1.02" height="1.02" fill="#1d160e"/><rect x="63" y="38" width="1.02" height="1.02" fill="#17120b"/><rect x="0" y="39" width="1.02" height="1.02" fill="#2e3045"/><rect x="1" y="39" width="1.02" height="1.02" fill="#21160a"/><rect x="2" y="39" width="1.02" height="1.02" fill="#181a05"/><rect x="3" y="39" width="1.02" height="1.02" fill="#20222b"/><rect x="4" y="39" width="1.02" height="1.02" fill="#150f06"/><rect x="5" y="39" width="1.02" height="1.02" fill="#1f212a"/><rect x="6" y="39" width="1.02" height="1.02" fill="#322411"/><rect x="7" y="39" width="1.02" height="1.02" fill="#322411"/><rect x="8" y="39" width="1.02" height="1.02" fill="#201c15"/><rect x="9" y="39" width="1.02" height="1.02" fill="#2e3045"/><rect x="10" y="39" width="1.02" height="1.02" fill="#20222b"/><rect x="11" y="39" width="1.02" height="1.02" fill="#1b140c"/><rect x="12" y="39" width="1.02" height="1.02" fill="#312310"/><rect x="13" y="39" width="1.02" height="1.02" fill="#141009"/><rect x="14" y="39" width="1.02" height="1.02" fill="#332512"/><rect x="15" y="39" width="1.02" height="1.02" fill="#120e08"/><rect x="16" y="39" width="1.02" height="1.02" fill="#1f170d"/><rect x="17" y="39" width="1.02" height="1.02" fill="#26250e"/><rect x="18" y="39" width="1.02" height="1.02" fill="#2e2213"/><rect x="19" y="39" width="1.02" height="1.02" fill="#24190d"/><rect x="20" y="39" width="1.02" height="1.02" fill="#262733"/><rect x="21" y="39" width="1.02" height="1.02" fill="#20180e"/><rect x="22" y="39" width="1.02" height="1.02" fill="#1a1711"/><rect x="23" y="39" width="1.02" height="1.02" fill="#191906"/><rect x="24" y="39" width="1.02" height="1.02" fill="#19120a"/><rect x="25" y="39" width="1.02" height="1.02" fill="#2f3146"/><rect x="26" y="39" width="1.02" height="1.02" fill="#1f2027"/><rect x="27" y="39" width="1.02" height="1.02" fill="#150f08"/><rect x="28" y="39" width="1.02" height="1.02" fill="#20180e"/><rect x="29" y="39" width="1.02" height="1.02" fill="#1e160c"/><rect x="30" y="39" width="1.02" height="1.02" fill="#2a1e0f"/><rect x="31" y="39" width="1.02" height="1.02" fill="#2c2d40"/><rect x="32" y="39" width="1.02" height="1.02" fill="#3a2a14"/><rect x="33" y="39" width="1.02" height="1.02" fill="#2b2d2d"/><rect x="34" y="39" width="1.02" height="1.02" fill="#2b1f10"/><rect x="35" y="39" width="1.02" height="1.02" fill="#22170b"/><rect x="36" y="39" width="1.02" height="1.02" fill="#1c140a"/><rect x="37" y="39" width="1.02" height="1.02" fill="#20222b"/><rect x="38" y="39" width="1.02" height="1.02" fill="#23180c"/><rect x="39" y="39" width="1.02" height="1.02" fill="#110c05"/><rect x="40" y="39" width="1.02" height="1.02" fill="#2c2d40"/><rect x="41" y="39" width="1.02" height="1.02" fill="#22170b"/><rect x="42" y="39" width="1.02" height="1.02" fill="#262733"/><rect x="43" y="39" width="1.02" height="1.02" fill="#1c1e09"/><rect x="44" y="39" width="1.02" height="1.02" fill="#2d2e41"/><rect x="45" y="39" width="1.02" height="1.02" fill="#1d1f0a"/><rect x="46" y="39" width="1.02" height="1.02" fill="#2e2213"/><rect x="47" y="39" width="1.02" height="1.02" fill="#130f08"/><rect x="48" y="39" width="1.02" height="1.02" fill="#23230d"/><rect x="49" y="39" width="1.02" height="1.02" fill="#2a2b3e"/><rect x="50" y="39" width="1.02" height="1.02" fill="#151009"/><rect x="51" y="39" width="1.02" height="1.02" fill="#1b140c"/><rect x="52" y="39" width="1.02" height="1.02" fill="#1b1309"/><rect x="53" y="39" width="1.02" height="1.02" fill="#191610"/><rect x="54" y="39" width="1.02" height="1.02" fill="#2c2d40"/><rect x="55" y="39" width="1.02" height="1.02" fill="#26250e"/><rect x="56" y="39" width="1.02" height="1.02" fill="#16110a"/><rect x="57" y="39" width="1.02" height="1.02" fill="#110d06"/><rect x="58" y="39" width="1.02" height="1.02" fill="#19120a"/><rect x="59" y="39" width="1.02" height="1.02" fill="#2d2f2f"/><rect x="60" y="39" width="1.02" height="1.02" fill="#332512"/><rect x="61" y="39" width="1.02" height="1.02" fill="#1e160c"/><rect x="62" y="39" width="1.02" height="1.02" fill="#1c1d24"/><rect x="63" y="39" width="1.02" height="1.02" fill="#120e08"/><rect x="0" y="40" width="1.02" height="1.02" fill="#2a2c2c"/><rect x="1" y="40" width="1.02" height="1.02" fill="#41413f"/><rect x="2" y="40" width="1.02" height="1.02" fill="#23230d"/><rect x="3" y="40" width="1.02" height="1.02" fill="#3e2e18"/><rect x="4" y="40" width="1.02" height="1.02" fill="#454543"/><rect x="5" y="40" width="1.02" height="1.02" fill="#25240d"/><rect x="6" y="40" width="1.02" height="1.02" fill="#2e2f42"/><rect x="7" y="40" width="1.02" height="1.02" fill="#2b1f10"/><rect x="8" y="40" width="1.02" height="1.02" fill="#33354a"/><rect x="9" y="40" width="1.02" height="1.02" fill="#322411"/><rect x="10" y="40" width="1.02" height="1.02" fill="#1e160c"/><rect x="11" y="40" width="1.02" height="1.02" fill="#1e2029"/><rect x="12" y="40" width="1.02" height="1.02" fill="#1d1d07"/><rect x="13" y="40" width="1.02" height="1.02" fill="#21210b"/><rect x="14" y="40" width="1.02" height="1.02" fill="#262733"/><rect x="15" y="40" width="1.02" height="1.02" fill="#0c0903"/><rect x="16" y="40" width="1.02" height="1.02" fill="#251a0e"/><rect x="17" y="40" width="1.02" height="1.02" fill="#1d150b"/><rect x="18" y="40" width="1.02" height="1.02" fill="#21190f"/><rect x="19" y="40" width="1.02" height="1.02" fill="#16110a"/><rect x="20" y="40" width="1.02" height="1.02" fill="#0f0b04"/><rect x="21" y="40" width="1.02" height="1.02" fill="#261b0f"/><rect x="22" y="40" width="1.02" height="1.02" fill="#252632"/><rect x="23" y="40" width="1.02" height="1.02" fill="#151505"/><rect x="24" y="40" width="1.02" height="1.02" fill="#1f170d"/><rect x="25" y="40" width="1.02" height="1.02" fill="#282a3c"/><rect x="26" y="40" width="1.02" height="1.02" fill="#2b2c3f"/><rect x="27" y="40" width="1.02" height="1.02" fill="#120d06"/><rect x="28" y="40" width="1.02" height="1.02" fill="#1f1b14"/><rect x="29" y="40" width="1.02" height="1.02" fill="#1d1912"/><rect x="30" y="40" width="1.02" height="1.02" fill="#2d2e41"/><rect x="31" y="40" width="1.02" height="1.02" fill="#252632"/><rect x="32" y="40" width="1.02" height="1.02" fill="#332613"/><rect x="33" y="40" width="1.02" height="1.02" fill="#251a0e"/><rect x="34" y="40" width="1.02" height="1.02" fill="#28293c"/><rect x="35" y="40" width="1.02" height="1.02" fill="#181109"/><rect x="36" y="40" width="1.02" height="1.02" fill="#1a130a"/><rect x="37" y="40" width="1.02" height="1.02" fill="#181109"/><rect x="38" y="40" width="1.02" height="1.02" fill="#17120b"/><rect x="39" y="40" width="1.02" height="1.02" fill="#1e160c"/><rect x="40" y="40" width="1.02" height="1.02" fill="#2b2d2d"/><rect x="41" y="40" width="1.02" height="1.02" fill="#232430"/><rect x="42" y="40" width="1.02" height="1.02" fill="#2c2d40"/><rect x="43" y="40" width="1.02" height="1.02" fill="#24190d"/><rect x="44" y="40" width="1.02" height="1.02" fill="#1c1e09"/><rect x="45" y="40" width="1.02" height="1.02" fill="#171907"/><rect x="46" y="40" width="1.02" height="1.02" fill="#241a0d"/><rect x="47" y="40" width="1.02" height="1.02" fill="#1e200b"/><rect x="48" y="40" width="1.02" height="1.02" fill="#1e1f26"/><rect x="49" y="40" width="1.02" height="1.02" fill="#3e2e18"/><rect x="50" y="40" width="1.02" height="1.02" fill="#0f0a04"/><rect x="51" y="40" width="1.02" height="1.02" fill="#160f07"/><rect x="52" y="40" width="1.02" height="1.02" fill="#282710"/><rect x="53" y="40" width="1.02" height="1.02" fill="#17140f"/><rect x="54" y="40" width="1.02" height="1.02" fill="#28293a"/><rect x="55" y="40" width="1.02" height="1.02" fill="#1f2027"/><rect x="56" y="40" width="1.02" height="1.02" fill="#1b1309"/><rect x="57" y="40" width="1.02" height="1.02" fill="#140f08"/><rect x="58" y="40" width="1.02" height="1.02" fill="#271c10"/><rect x="59" y="40" width="1.02" height="1.02" fill="#1d1912"/><rect x="60" y="40" width="1.02" height="1.02" fill="#2d2111"/><rect x="61" y="40" width="1.02" height="1.02" fill="#19120a"/><rect x="62" y="40" width="1.02" height="1.02" fill="#16110a"/><rect x="63" y="40" width="1.02" height="1.02" fill="#181a05"/><rect x="0" y="41" width="1.02" height="1.02" fill="#271c10"/><rect x="1" y="41" width="1.02" height="1.02" fill="#3a3a39"/><rect x="2" y="41" width="1.02" height="1.02" fill="#130f08"/><rect x="3" y="41" width="1.02" height="1.02" fill="#160f07"/><rect x="4" y="41" width="1.02" height="1.02" fill="#2d2e41"/><rect x="5" y="41" width="1.02" height="1.02" fill="#3e2e18"/><rect x="6" y="41" width="1.02" height="1.02" fill="#1d1f28"/><rect x="7" y="41" width="1.02" height="1.02" fill="#261b0f"/><rect x="8" y="41" width="1.02" height="1.02" fill="#1c1811"/><rect x="9" y="41" width="1.02" height="1.02" fill="#1e1a13"/><rect x="10" y="41" width="1.02" height="1.02" fill="#181109"/><rect x="11" y="41" width="1.02" height="1.02" fill="#33354a"/><rect x="12" y="41" width="1.02" height="1.02" fill="#363636"/><rect x="13" y="41" width="1.02" height="1.02" fill="#1e160c"/><rect x="14" y="41" width="1.02" height="1.02" fill="#23252e"/><rect x="15" y="41" width="1.02" height="1.02" fill="#30220f"/><rect x="16" y="41" width="1.02" height="1.02" fill="#1c1d24"/><rect x="17" y="41" width="1.02" height="1.02" fill="#272834"/><rect x="18" y="41" width="1.02" height="1.02" fill="#1b1d08"/><rect x="19" y="41" width="1.02" height="1.02" fill="#20180e"/><rect x="20" y="41" width="1.02" height="1.02" fill="#2e2f42"/><rect x="21" y="41" width="1.02" height="1.02" fill="#1f212a"/><rect x="22" y="41" width="1.02" height="1.02" fill="#23180c"/><rect x="23" y="41" width="1.02" height="1.02" fill="#191b06"/><rect x="24" y="41" width="1.02" height="1.02" fill="#1d1f0a"/><rect x="25" y="41" width="1.02" height="1.02" fill="#151009"/><rect x="26" y="41" width="1.02" height="1.02" fill="#2e2f42"/><rect x="27" y="41" width="1.02" height="1.02" fill="#363636"/><rect x="28" y="41" width="1.02" height="1.02" fill="#33354a"/><rect x="29" y="41" width="1.02" height="1.02" fill="#271c10"/><rect x="30" y="41" width="1.02" height="1.02" fill="#141009"/><rect x="31" y="41" width="1.02" height="1.02" fill="#1f202b"/><rect x="32" y="41" width="1.02" height="1.02" fill="#1a1c07"/><rect x="33" y="41" width="1.02" height="1.02" fill="#171008"/><rect x="34" y="41" width="1.02" height="1.02" fill="#322411"/><rect x="35" y="41" width="1.02" height="1.02" fill="#3f2f19"/><rect x="36" y="41" width="1.02" height="1.02" fill="#1d150b"/><rect x="37" y="41" width="1.02" height="1.02" fill="#201c15"/><rect x="38" y="41" width="1.02" height="1.02" fill="#120e08"/><rect x="39" y="41" width="1.02" height="1.02" fill="#3d2d17"/><rect x="40" y="41" width="1.02" height="1.02" fill="#212323"/><rect x="41" y="41" width="1.02" height="1.02" fill="#1b1d08"/><rect x="42" y="41" width="1.02" height="1.02" fill="#332512"/><rect x="43" y="41" width="1.02" height="1.02" fill="#1e150b"/><rect x="44" y="41" width="1.02" height="1.02" fill="#1f1f09"/><rect x="45" y="41" width="1.02" height="1.02" fill="#2c2011"/><rect x="46" y="41" width="1.02" height="1.02" fill="#1b1308"/><rect x="47" y="41" width="1.02" height="1.02" fill="#181a08"/><rect x="48" y="41" width="1.02" height="1.02" fill="#17120b"/><rect x="49" y="41" width="1.02" height="1.02" fill="#16110a"/><rect x="50" y="41" width="1.02" height="1.02" fill="#3a2a14"/><rect x="51" y="41" width="1.02" height="1.02" fill="#2d2f2f"/><rect x="52" y="41" width="1.02" height="1.02" fill="#181109"/><rect x="53" y="41" width="1.02" height="1.02" fill="#353535"/><rect x="54" y="41" width="1.02" height="1.02" fill="#212230"/><rect x="55" y="41" width="1.02" height="1.02" fill="#392913"/><rect x="56" y="41" width="1.02" height="1.02" fill="#3e2e18"/><rect x="57" y="41" width="1.02" height="1.02" fill="#2e3045"/><rect x="58" y="41" width="1.02" height="1.02" fill="#20170c"/><rect x="59" y="41" width="1.02" height="1.02" fill="#2e3030"/><rect x="60" y="41" width="1.02" height="1.02" fill="#140f08"/><rect x="61" y="41" width="1.02" height="1.02" fill="#23180c"/><rect x="62" y="41" width="1.02" height="1.02" fill="#2f2314"/><rect x="63" y="41" width="1.02" height="1.02" fill="#242531"/><rect x="0" y="42" width="1.02" height="1.02" fill="#22170b"/><rect x="1" y="42" width="1.02" height="1.02" fill="#3f2f19"/><rect x="2" y="42" width="1.02" height="1.02" fill="#2e3045"/><rect x="3" y="42" width="1.02" height="1.02" fill="#16110a"/><rect x="4" y="42" width="1.02" height="1.02" fill="#252636"/><rect x="5" y="42" width="1.02" height="1.02" fill="#261b0f"/><rect x="6" y="42" width="1.02" height="1.02" fill="#22170b"/><rect x="7" y="42" width="1.02" height="1.02" fill="#19120a"/><rect x="8" y="42" width="1.02" height="1.02" fill="#1c140a"/><rect x="9" y="42" width="1.02" height="1.02" fill="#322411"/><rect x="10" y="42" width="1.02" height="1.02" fill="#23180c"/><rect x="11" y="42" width="1.02" height="1.02" fill="#1a130b"/><rect x="12" y="42" width="1.02" height="1.02" fill="#313131"/><rect x="13" y="42" width="1.02" height="1.02" fill="#21190f"/><rect x="14" y="42" width="1.02" height="1.02" fill="#2b1f10"/><rect x="15" y="42" width="1.02" height="1.02" fill="#2a1e0f"/><rect x="16" y="42" width="1.02" height="1.02" fill="#17171d"/><rect x="17" y="42" width="1.02" height="1.02" fill="#312310"/><rect x="18" y="42" width="1.02" height="1.02" fill="#3b2b15"/><rect x="19" y="42" width="1.02" height="1.02" fill="#0f0b04"/><rect x="20" y="42" width="1.02" height="1.02" fill="#1c140a"/><rect x="21" y="42" width="1.02" height="1.02" fill="#2d2112"/><rect x="22" y="42" width="1.02" height="1.02" fill="#2c2d40"/><rect x="23" y="42" width="1.02" height="1.02" fill="#121402"/><rect x="24" y="42" width="1.02" height="1.02" fill="#1e2029"/><rect x="25" y="42" width="1.02" height="1.02" fill="#1a130b"/><rect x="26" y="42" width="1.02" height="1.02" fill="#3c2c16"/><rect x="27" y="42" width="1.02" height="1.02" fill="#1e200b"/><rect x="28" y="42" width="1.02" height="1.02" fill="#1b1309"/><rect x="29" y="42" width="1.02" height="1.02" fill="#241b10"/><rect x="30" y="42" width="1.02" height="1.02" fill="#23220b"/><rect x="31" y="42" width="1.02" height="1.02" fill="#22210a"/><rect x="32" y="42" width="1.02" height="1.02" fill="#130e07"/><rect x="33" y="42" width="1.02" height="1.02" fill="#110c05"/><rect x="34" y="42" width="1.02" height="1.02" fill="#362815"/><rect x="35" y="42" width="1.02" height="1.02" fill="#130e07"/><rect x="36" y="42" width="1.02" height="1.02" fill="#434341"/><rect x="37" y="42" width="1.02" height="1.02" fill="#160f07"/><rect x="38" y="42" width="1.02" height="1.02" fill="#3a2a14"/><rect x="39" y="42" width="1.02" height="1.02" fill="#3f2f19"/><rect x="40" y="42" width="1.02" height="1.02" fill="#2b1f10"/><rect x="41" y="42" width="1.02" height="1.02" fill="#181907"/><rect x="42" y="42" width="1.02" height="1.02" fill="#1b140c"/><rect x="43" y="42" width="1.02" height="1.02" fill="#261b0f"/><rect x="44" y="42" width="1.02" height="1.02" fill="#1e160c"/><rect x="45" y="42" width="1.02" height="1.02" fill="#21222e"/><rect x="46" y="42" width="1.02" height="1.02" fill="#1c1e09"/><rect x="47" y="42" width="1.02" height="1.02" fill="#3c2c16"/><rect x="48" y="42" width="1.02" height="1.02" fill="#261b0f"/><rect x="49" y="42" width="1.02" height="1.02" fill="#140f08"/><rect x="50" y="42" width="1.02" height="1.02" fill="#322411"/><rect x="51" y="42" width="1.02" height="1.02" fill="#1b1d08"/><rect x="52" y="42" width="1.02" height="1.02" fill="#141009"/><rect x="53" y="42" width="1.02" height="1.02" fill="#120e07"/><rect x="54" y="42" width="1.02" height="1.02" fill="#1e2029"/><rect x="55" y="42" width="1.02" height="1.02" fill="#232430"/><rect x="56" y="42" width="1.02" height="1.02" fill="#332512"/><rect x="57" y="42" width="1.02" height="1.02" fill="#27293b"/><rect x="58" y="42" width="1.02" height="1.02" fill="#292a3d"/><rect x="59" y="42" width="1.02" height="1.02" fill="#1f1b14"/><rect x="60" y="42" width="1.02" height="1.02" fill="#0e0903"/><rect x="61" y="42" width="1.02" height="1.02" fill="#20160c"/><rect x="62" y="42" width="1.02" height="1.02" fill="#1a1c07"/><rect x="63" y="42" width="1.02" height="1.02" fill="#21210b"/><rect x="0" y="43" width="1.02" height="1.02" fill="#1a1006"/><rect x="1" y="43" width="1.02" height="1.02" fill="#130e07"/><rect x="2" y="43" width="1.02" height="1.02" fill="#26283a"/><rect x="3" y="43" width="1.02" height="1.02" fill="#3d2d17"/><rect x="4" y="43" width="1.02" height="1.02" fill="#3d2d17"/><rect x="5" y="43" width="1.02" height="1.02" fill="#181109"/><rect x="6" y="43" width="1.02" height="1.02" fill="#0f0b04"/><rect x="7" y="43" width="1.02" height="1.02" fill="#23252e"/><rect x="8" y="43" width="1.02" height="1.02" fill="#2d2e41"/><rect x="9" y="43" width="1.02" height="1.02" fill="#110d06"/><rect x="10" y="43" width="1.02" height="1.02" fill="#1e160c"/><rect x="11" y="43" width="1.02" height="1.02" fill="#312310"/><rect x="12" y="43" width="1.02" height="1.02" fill="#1a160f"/><rect x="13" y="43" width="1.02" height="1.02" fill="#2b1f10"/><rect x="14" y="43" width="1.02" height="1.02" fill="#0f0b04"/><rect x="15" y="43" width="1.02" height="1.02" fill="#2c2d40"/><rect x="16" y="43" width="1.02" height="1.02" fill="#16161b"/><rect x="17" y="43" width="1.02" height="1.02" fill="#1d1e25"/><rect x="18" y="43" width="1.02" height="1.02" fill="#251a0e"/><rect x="19" y="43" width="1.02" height="1.02" fill="#2a2c2c"/><rect x="20" y="43" width="1.02" height="1.02" fill="#2d2e41"/><rect x="21" y="43" width="1.02" height="1.02" fill="#141009"/><rect x="22" y="43" width="1.02" height="1.02" fill="#1d150b"/><rect x="23" y="43" width="1.02" height="1.02" fill="#2b2c3f"/><rect x="24" y="43" width="1.02" height="1.02" fill="#3d2d17"/><rect x="25" y="43" width="1.02" height="1.02" fill="#161009"/><rect x="26" y="43" width="1.02" height="1.02" fill="#201c15"/><rect x="27" y="43" width="1.02" height="1.02" fill="#181a05"/><rect x="28" y="43" width="1.02" height="1.02" fill="#1c1811"/><rect x="29" y="43" width="1.02" height="1.02" fill="#1f170d"/><rect x="30" y="43" width="1.02" height="1.02" fill="#0e0a03"/><rect x="31" y="43" width="1.02" height="1.02" fill="#25240d"/><rect x="32" y="43" width="1.02" height="1.02" fill="#362815"/><rect x="33" y="43" width="1.02" height="1.02" fill="#160f07"/><rect x="34" y="43" width="1.02" height="1.02" fill="#3f2f19"/><rect x="35" y="43" width="1.02" height="1.02" fill="#1b1309"/><rect x="36" y="43" width="1.02" height="1.02" fill="#383836"/><rect x="37" y="43" width="1.02" height="1.02" fill="#120e07"/><rect x="38" y="43" width="1.02" height="1.02" fill="#1d1912"/><rect x="39" y="43" width="1.02" height="1.02" fill="#332512"/><rect x="40" y="43" width="1.02" height="1.02" fill="#1b1c23"/><rect x="41" y="43" width="1.02" height="1.02" fill="#131405"/><rect x="42" y="43" width="1.02" height="1.02" fill="#1b1c23"/><rect x="43" y="43" width="1.02" height="1.02" fill="#434341"/><rect x="44" y="43" width="1.02" height="1.02" fill="#1c1d24"/><rect x="45" y="43" width="1.02" height="1.02" fill="#22232f"/><rect x="46" y="43" width="1.02" height="1.02" fill="#17120b"/><rect x="47" y="43" width="1.02" height="1.02" fill="#352714"/><rect x="48" y="43" width="1.02" height="1.02" fill="#2c2e2e"/><rect x="49" y="43" width="1.02" height="1.02" fill="#1a130b"/><rect x="50" y="43" width="1.02" height="1.02" fill="#16110a"/><rect x="51" y="43" width="1.02" height="1.02" fill="#3e2e18"/><rect x="52" y="43" width="1.02" height="1.02" fill="#1b1309"/><rect x="53" y="43" width="1.02" height="1.02" fill="#392913"/><rect x="54" y="43" width="1.02" height="1.02" fill="#151009"/><rect x="55" y="43" width="1.02" height="1.02" fill="#1b1b26"/><rect x="56" y="43" width="1.02" height="1.02" fill="#141009"/><rect x="57" y="43" width="1.02" height="1.02" fill="#1a130b"/><rect x="58" y="43" width="1.02" height="1.02" fill="#171008"/><rect x="59" y="43" width="1.02" height="1.02" fill="#110c05"/><rect x="60" y="43" width="1.02" height="1.02" fill="#0d0803"/><rect x="61" y="43" width="1.02" height="1.02" fill="#201c15"/><rect x="62" y="43" width="1.02" height="1.02" fill="#1c1d24"/><rect x="63" y="43" width="1.02" height="1.02" fill="#312310"/><rect x="0" y="44" width="1.02" height="1.02" fill="#180f07"/><rect x="1" y="44" width="1.02" height="1.02" fill="#110d07"/><rect x="2" y="44" width="1.02" height="1.02" fill="#1e202f"/><rect x="3" y="44" width="1.02" height="1.02" fill="#120d06"/><rect x="4" y="44" width="1.02" height="1.02" fill="#140f08"/><rect x="5" y="44" width="1.02" height="1.02" fill="#120c05"/><rect x="6" y="44" width="1.02" height="1.02" fill="#3f2f19"/><rect x="7" y="44" width="1.02" height="1.02" fill="#1d150b"/><rect x="8" y="44" width="1.02" height="1.02" fill="#1b1309"/><rect x="9" y="44" width="1.02" height="1.02" fill="#19120a"/><rect x="10" y="44" width="1.02" height="1.02" fill="#22210a"/><rect x="11" y="44" width="1.02" height="1.02" fill="#2a1e0f"/><rect x="12" y="44" width="1.02" height="1.02" fill="#332512"/><rect x="13" y="44" width="1.02" height="1.02" fill="#3f2f19"/><rect x="14" y="44" width="1.02" height="1.02" fill="#110c05"/><rect x="15" y="44" width="1.02" height="1.02" fill="#191b06"/><rect x="16" y="44" width="1.02" height="1.02" fill="#0f0b04"/><rect x="17" y="44" width="1.02" height="1.02" fill="#23180c"/><rect x="18" y="44" width="1.02" height="1.02" fill="#291d0e"/><rect x="19" y="44" width="1.02" height="1.02" fill="#1a130b"/><rect x="20" y="44" width="1.02" height="1.02" fill="#1e1e08"/><rect x="21" y="44" width="1.02" height="1.02" fill="#1e160c"/><rect x="22" y="44" width="1.02" height="1.02" fill="#110d06"/><rect x="23" y="44" width="1.02" height="1.02" fill="#20180e"/><rect x="24" y="44" width="1.02" height="1.02" fill="#21232c"/><rect x="25" y="44" width="1.02" height="1.02" fill="#120e07"/><rect x="26" y="44" width="1.02" height="1.02" fill="#171008"/><rect x="27" y="44" width="1.02" height="1.02" fill="#392913"/><rect x="28" y="44" width="1.02" height="1.02" fill="#1b1309"/><rect x="29" y="44" width="1.02" height="1.02" fill="#0e0a03"/><rect x="30" y="44" width="1.02" height="1.02" fill="#2f2314"/><rect x="31" y="44" width="1.02" height="1.02" fill="#21160a"/><rect x="32" y="44" width="1.02" height="1.02" fill="#0f0b04"/><rect x="33" y="44" width="1.02" height="1.02" fill="#110b05"/><rect x="34" y="44" width="1.02" height="1.02" fill="#352714"/><rect x="35" y="44" width="1.02" height="1.02" fill="#1f212a"/><rect x="36" y="44" width="1.02" height="1.02" fill="#1d1f0a"/><rect x="37" y="44" width="1.02" height="1.02" fill="#312310"/><rect x="38" y="44" width="1.02" height="1.02" fill="#1a1711"/><rect x="39" y="44" width="1.02" height="1.02" fill="#2e3045"/><rect x="40" y="44" width="1.02" height="1.02" fill="#2e2f42"/><rect x="41" y="44" width="1.02" height="1.02" fill="#1e1e08"/><rect x="42" y="44" width="1.02" height="1.02" fill="#3e2e18"/><rect x="43" y="44" width="1.02" height="1.02" fill="#2e3045"/><rect x="44" y="44" width="1.02" height="1.02" fill="#0f0b04"/><rect x="45" y="44" width="1.02" height="1.02" fill="#352714"/><rect x="46" y="44" width="1.02" height="1.02" fill="#2d2112"/><rect x="47" y="44" width="1.02" height="1.02" fill="#1f1b14"/><rect x="48" y="44" width="1.02" height="1.02" fill="#21160a"/><rect x="49" y="44" width="1.02" height="1.02" fill="#1d1f28"/><rect x="50" y="44" width="1.02" height="1.02" fill="#120d06"/><rect x="51" y="44" width="1.02" height="1.02" fill="#312310"/><rect x="52" y="44" width="1.02" height="1.02" fill="#24190d"/><rect x="53" y="44" width="1.02" height="1.02" fill="#181109"/><rect x="54" y="44" width="1.02" height="1.02" fill="#1e160c"/><rect x="55" y="44" width="1.02" height="1.02" fill="#323449"/><rect x="56" y="44" width="1.02" height="1.02" fill="#130f09"/><rect x="57" y="44" width="1.02" height="1.02" fill="#2b2c3f"/><rect x="58" y="44" width="1.02" height="1.02" fill="#3b2b15"/><rect x="59" y="44" width="1.02" height="1.02" fill="#2d2112"/><rect x="60" y="44" width="1.02" height="1.02" fill="#363636"/><rect x="61" y="44" width="1.02" height="1.02" fill="#312310"/><rect x="62" y="44" width="1.02" height="1.02" fill="#2f3146"/><rect x="63" y="44" width="1.02" height="1.02" fill="#1c140a"/><rect x="0" y="45" width="1.02" height="1.02" fill="#312310"/><rect x="1" y="45" width="1.02" height="1.02" fill="#3a2a14"/><rect x="2" y="45" width="1.02" height="1.02" fill="#1b1d08"/><rect x="3" y="45" width="1.02" height="1.02" fill="#2d2112"/><rect x="4" y="45" width="1.02" height="1.02" fill="#282710"/><rect x="5" y="45" width="1.02" height="1.02" fill="#232430"/><rect x="6" y="45" width="1.02" height="1.02" fill="#322411"/><rect x="7" y="45" width="1.02" height="1.02" fill="#2e3045"/><rect x="8" y="45" width="1.02" height="1.02" fill="#100c05"/><rect x="9" y="45" width="1.02" height="1.02" fill="#24190d"/><rect x="10" y="45" width="1.02" height="1.02" fill="#262733"/><rect x="11" y="45" width="1.02" height="1.02" fill="#2b2d2d"/><rect x="12" y="45" width="1.02" height="1.02" fill="#2b1f0f"/><rect x="13" y="45" width="1.02" height="1.02" fill="#0e0a03"/><rect x="14" y="45" width="1.02" height="1.02" fill="#352714"/><rect x="15" y="45" width="1.02" height="1.02" fill="#22242d"/><rect x="16" y="45" width="1.02" height="1.02" fill="#21160a"/><rect x="17" y="45" width="1.02" height="1.02" fill="#24230c"/><rect x="18" y="45" width="1.02" height="1.02" fill="#28293c"/><rect x="19" y="45" width="1.02" height="1.02" fill="#1c1e09"/><rect x="20" y="45" width="1.02" height="1.02" fill="#322411"/><rect x="21" y="45" width="1.02" height="1.02" fill="#362815"/><rect x="22" y="45" width="1.02" height="1.02" fill="#21160a"/><rect x="23" y="45" width="1.02" height="1.02" fill="#2e3045"/><rect x="24" y="45" width="1.02" height="1.02" fill="#1f1b14"/><rect x="25" y="45" width="1.02" height="1.02" fill="#3e2e18"/><rect x="26" y="45" width="1.02" height="1.02" fill="#150f08"/><rect x="27" y="45" width="1.02" height="1.02" fill="#1b1309"/><rect x="28" y="45" width="1.02" height="1.02" fill="#23220b"/><rect x="29" y="45" width="1.02" height="1.02" fill="#17120b"/><rect x="30" y="45" width="1.02" height="1.02" fill="#1b1d08"/><rect x="31" y="45" width="1.02" height="1.02" fill="#251a0e"/><rect x="32" y="45" width="1.02" height="1.02" fill="#20200a"/><rect x="33" y="45" width="1.02" height="1.02" fill="#110c07"/><rect x="34" y="45" width="1.02" height="1.02" fill="#303247"/><rect x="35" y="45" width="1.02" height="1.02" fill="#1d1f27"/><rect x="36" y="45" width="1.02" height="1.02" fill="#2c2011"/><rect x="37" y="45" width="1.02" height="1.02" fill="#291d0c"/><rect x="38" y="45" width="1.02" height="1.02" fill="#19120a"/><rect x="39" y="45" width="1.02" height="1.02" fill="#16110a"/><rect x="40" y="45" width="1.02" height="1.02" fill="#120e07"/><rect x="41" y="45" width="1.02" height="1.02" fill="#454543"/><rect x="42" y="45" width="1.02" height="1.02" fill="#342613"/><rect x="43" y="45" width="1.02" height="1.02" fill="#2a1e0f"/><rect x="44" y="45" width="1.02" height="1.02" fill="#120d06"/><rect x="45" y="45" width="1.02" height="1.02" fill="#1c1811"/><rect x="46" y="45" width="1.02" height="1.02" fill="#1c1811"/><rect x="47" y="45" width="1.02" height="1.02" fill="#18150f"/><rect x="48" y="45" width="1.02" height="1.02" fill="#22170b"/><rect x="49" y="45" width="1.02" height="1.02" fill="#22170b"/><rect x="50" y="45" width="1.02" height="1.02" fill="#1c140a"/><rect x="51" y="45" width="1.02" height="1.02" fill="#3e2e18"/><rect x="52" y="45" width="1.02" height="1.02" fill="#1f160c"/><rect x="53" y="45" width="1.02" height="1.02" fill="#1f1b14"/><rect x="54" y="45" width="1.02" height="1.02" fill="#19120a"/><rect x="55" y="45" width="1.02" height="1.02" fill="#16110a"/><rect x="56" y="45" width="1.02" height="1.02" fill="#242531"/><rect x="57" y="45" width="1.02" height="1.02" fill="#171008"/><rect x="58" y="45" width="1.02" height="1.02" fill="#2a2b3e"/><rect x="59" y="45" width="1.02" height="1.02" fill="#291d0e"/><rect x="60" y="45" width="1.02" height="1.02" fill="#3a2a14"/><rect x="61" y="45" width="1.02" height="1.02" fill="#2c2011"/><rect x="62" y="45" width="1.02" height="1.02" fill="#2d2112"/><rect x="63" y="45" width="1.02" height="1.02" fill="#1a130a"/><rect x="0" y="46" width="1.02" height="1.02" fill="#362815"/><rect x="1" y="46" width="1.02" height="1.02" fill="#1d1f28"/><rect x="2" y="46" width="1.02" height="1.02" fill="#130f08"/><rect x="3" y="46" width="1.02" height="1.02" fill="#22210a"/><rect x="4" y="46" width="1.02" height="1.02" fill="#392913"/><rect x="5" y="46" width="1.02" height="1.02" fill="#20202b"/><rect x="6" y="46" width="1.02" height="1.02" fill="#1b1309"/><rect x="7" y="46" width="1.02" height="1.02" fill="#17120b"/><rect x="8" y="46" width="1.02" height="1.02" fill="#0a0701"/><rect x="9" y="46" width="1.02" height="1.02" fill="#1d140a"/><rect x="10" y="46" width="1.02" height="1.02" fill="#141009"/><rect x="11" y="46" width="1.02" height="1.02" fill="#1a130b"/><rect x="12" y="46" width="1.02" height="1.02" fill="#110d06"/><rect x="13" y="46" width="1.02" height="1.02" fill="#0b0701"/><rect x="14" y="46" width="1.02" height="1.02" fill="#201c15"/><rect x="15" y="46" width="1.02" height="1.02" fill="#202129"/><rect x="16" y="46" width="1.02" height="1.02" fill="#1a1006"/><rect x="17" y="46" width="1.02" height="1.02" fill="#1d1e25"/><rect x="18" y="46" width="1.02" height="1.02" fill="#2f3131"/><rect x="19" y="46" width="1.02" height="1.02" fill="#3d2d17"/><rect x="20" y="46" width="1.02" height="1.02" fill="#2a1d0d"/><rect x="21" y="46" width="1.02" height="1.02" fill="#2d2112"/><rect x="22" y="46" width="1.02" height="1.02" fill="#352714"/><rect x="23" y="46" width="1.02" height="1.02" fill="#1c1811"/><rect x="24" y="46" width="1.02" height="1.02" fill="#1d150b"/><rect x="25" y="46" width="1.02" height="1.02" fill="#392913"/><rect x="26" y="46" width="1.02" height="1.02" fill="#2a2b3e"/><rect x="27" y="46" width="1.02" height="1.02" fill="#322411"/><rect x="28" y="46" width="1.02" height="1.02" fill="#1b140c"/><rect x="29" y="46" width="1.02" height="1.02" fill="#14100a"/><rect x="30" y="46" width="1.02" height="1.02" fill="#2f2314"/><rect x="31" y="46" width="1.02" height="1.02" fill="#130e07"/><rect x="32" y="46" width="1.02" height="1.02" fill="#2e2f42"/><rect x="33" y="46" width="1.02" height="1.02" fill="#23180c"/><rect x="34" y="46" width="1.02" height="1.02" fill="#342613"/><rect x="35" y="46" width="1.02" height="1.02" fill="#3e2e18"/><rect x="36" y="46" width="1.02" height="1.02" fill="#352714"/><rect x="37" y="46" width="1.02" height="1.02" fill="#444442"/><rect x="38" y="46" width="1.02" height="1.02" fill="#2b1f10"/><rect x="39" y="46" width="1.02" height="1.02" fill="#1e160c"/><rect x="40" y="46" width="1.02" height="1.02" fill="#0f0b04"/><rect x="41" y="46" width="1.02" height="1.02" fill="#322411"/><rect x="42" y="46" width="1.02" height="1.02" fill="#0e0a03"/><rect x="43" y="46" width="1.02" height="1.02" fill="#151009"/><rect x="44" y="46" width="1.02" height="1.02" fill="#1c1811"/><rect x="45" y="46" width="1.02" height="1.02" fill="#272834"/><rect x="46" y="46" width="1.02" height="1.02" fill="#24230c"/><rect x="47" y="46" width="1.02" height="1.02" fill="#1e2029"/><rect x="48" y="46" width="1.02" height="1.02" fill="#1e160c"/><rect x="49" y="46" width="1.02" height="1.02" fill="#120d06"/><rect x="50" y="46" width="1.02" height="1.02" fill="#2d2112"/><rect x="51" y="46" width="1.02" height="1.02" fill="#322411"/><rect x="52" y="46" width="1.02" height="1.02" fill="#27260f"/><rect x="53" y="46" width="1.02" height="1.02" fill="#3e2e18"/><rect x="54" y="46" width="1.02" height="1.02" fill="#22232f"/><rect x="55" y="46" width="1.02" height="1.02" fill="#22220c"/><rect x="56" y="46" width="1.02" height="1.02" fill="#0f0b04"/><rect x="57" y="46" width="1.02" height="1.02" fill="#130d06"/><rect x="58" y="46" width="1.02" height="1.02" fill="#3b2b15"/><rect x="59" y="46" width="1.02" height="1.02" fill="#424240"/><rect x="60" y="46" width="1.02" height="1.02" fill="#1f1f09"/><rect x="61" y="46" width="1.02" height="1.02" fill="#373737"/><rect x="62" y="46" width="1.02" height="1.02" fill="#1e2029"/><rect x="63" y="46" width="1.02" height="1.02" fill="#140e06"/><rect x="0" y="47" width="1.02" height="1.02" fill="#130e07"/><rect x="1" y="47" width="1.02" height="1.02" fill="#1b140c"/><rect x="2" y="47" width="1.02" height="1.02" fill="#1b140c"/><rect x="3" y="47" width="1.02" height="1.02" fill="#282710"/><rect x="4" y="47" width="1.02" height="1.02" fill="#332512"/><rect x="5" y="47" width="1.02" height="1.02" fill="#323449"/><rect x="6" y="47" width="1.02" height="1.02" fill="#0f0b04"/><rect x="7" y="47" width="1.02" height="1.02" fill="#16110a"/><rect x="8" y="47" width="1.02" height="1.02" fill="#393939"/><rect x="9" y="47" width="1.02" height="1.02" fill="#21222e"/><rect x="10" y="47" width="1.02" height="1.02" fill="#3d2d17"/><rect x="11" y="47" width="1.02" height="1.02" fill="#21232c"/><rect x="12" y="47" width="1.02" height="1.02" fill="#2f2314"/><rect x="13" y="47" width="1.02" height="1.02" fill="#21210b"/><rect x="14" y="47" width="1.02" height="1.02" fill="#1e1b15"/><rect x="15" y="47" width="1.02" height="1.02" fill="#1b1710"/><rect x="16" y="47" width="1.02" height="1.02" fill="#1e160c"/><rect x="17" y="47" width="1.02" height="1.02" fill="#21222e"/><rect x="18" y="47" width="1.02" height="1.02" fill="#20180e"/><rect x="19" y="47" width="1.02" height="1.02" fill="#3c2c16"/><rect x="20" y="47" width="1.02" height="1.02" fill="#1d1f0a"/><rect x="21" y="47" width="1.02" height="1.02" fill="#23180c"/><rect x="22" y="47" width="1.02" height="1.02" fill="#312310"/><rect x="23" y="47" width="1.02" height="1.02" fill="#100c05"/><rect x="24" y="47" width="1.02" height="1.02" fill="#19120a"/><rect x="25" y="47" width="1.02" height="1.02" fill="#282710"/><rect x="26" y="47" width="1.02" height="1.02" fill="#23180c"/><rect x="27" y="47" width="1.02" height="1.02" fill="#2e2111"/><rect x="28" y="47" width="1.02" height="1.02" fill="#3d2d17"/><rect x="29" y="47" width="1.02" height="1.02" fill="#271c10"/><rect x="30" y="47" width="1.02" height="1.02" fill="#22210a"/><rect x="31" y="47" width="1.02" height="1.02" fill="#20200a"/><rect x="32" y="47" width="1.02" height="1.02" fill="#454543"/><rect x="33" y="47" width="1.02" height="1.02" fill="#1b1107"/><rect x="34" y="47" width="1.02" height="1.02" fill="#1f1f09"/><rect x="35" y="47" width="1.02" height="1.02" fill="#272834"/><rect x="36" y="47" width="1.02" height="1.02" fill="#242531"/><rect x="37" y="47" width="1.02" height="1.02" fill="#1b1d08"/><rect x="38" y="47" width="1.02" height="1.02" fill="#383838"/><rect x="39" y="47" width="1.02" height="1.02" fill="#21222e"/><rect x="40" y="47" width="1.02" height="1.02" fill="#1f1b14"/><rect x="41" y="47" width="1.02" height="1.02" fill="#281b0b"/><rect x="42" y="47" width="1.02" height="1.02" fill="#0b0701"/><rect x="43" y="47" width="1.02" height="1.02" fill="#0f0a04"/><rect x="44" y="47" width="1.02" height="1.02" fill="#1a130b"/><rect x="45" y="47" width="1.02" height="1.02" fill="#3a2a14"/><rect x="46" y="47" width="1.02" height="1.02" fill="#151009"/><rect x="47" y="47" width="1.02" height="1.02" fill="#130e07"/><rect x="48" y="47" width="1.02" height="1.02" fill="#22220c"/><rect x="49" y="47" width="1.02" height="1.02" fill="#110d07"/><rect x="50" y="47" width="1.02" height="1.02" fill="#21160a"/><rect x="51" y="47" width="1.02" height="1.02" fill="#3b2b15"/><rect x="52" y="47" width="1.02" height="1.02" fill="#261b0f"/><rect x="53" y="47" width="1.02" height="1.02" fill="#352714"/><rect x="54" y="47" width="1.02" height="1.02" fill="#2e3030"/><rect x="55" y="47" width="1.02" height="1.02" fill="#1d1912"/><rect x="56" y="47" width="1.02" height="1.02" fill="#1d1912"/><rect x="57" y="47" width="1.02" height="1.02" fill="#181a05"/><rect x="58" y="47" width="1.02" height="1.02" fill="#130f08"/><rect x="59" y="47" width="1.02" height="1.02" fill="#1c150d"/><rect x="60" y="47" width="1.02" height="1.02" fill="#3f2f19"/><rect x="61" y="47" width="1.02" height="1.02" fill="#313131"/><rect x="62" y="47" width="1.02" height="1.02" fill="#1b1d25"/><rect x="63" y="47" width="1.02" height="1.02" fill="#323449"/><rect x="0" y="48" width="1.02" height="1.02" fill="#140f08"/><rect x="1" y="48" width="1.02" height="1.02" fill="#1a1c07"/><rect x="2" y="48" width="1.02" height="1.02" fill="#3a3a3a"/><rect x="3" y="48" width="1.02" height="1.02" fill="#303247"/><rect x="4" y="48" width="1.02" height="1.02" fill="#120e07"/><rect x="5" y="48" width="1.02" height="1.02" fill="#22220c"/><rect x="6" y="48" width="1.02" height="1.02" fill="#202128"/><rect x="7" y="48" width="1.02" height="1.02" fill="#282710"/><rect x="8" y="48" width="1.02" height="1.02" fill="#1e1a13"/><rect x="9" y="48" width="1.02" height="1.02" fill="#3b2b15"/><rect x="10" y="48" width="1.02" height="1.02" fill="#0f0b04"/><rect x="11" y="48" width="1.02" height="1.02" fill="#1c140a"/><rect x="12" y="48" width="1.02" height="1.02" fill="#1e200b"/><rect x="13" y="48" width="1.02" height="1.02" fill="#362815"/><rect x="14" y="48" width="1.02" height="1.02" fill="#1b1710"/><rect x="15" y="48" width="1.02" height="1.02" fill="#100c05"/><rect x="16" y="48" width="1.02" height="1.02" fill="#110d06"/><rect x="17" y="48" width="1.02" height="1.02" fill="#332512"/><rect x="18" y="48" width="1.02" height="1.02" fill="#1f1b14"/><rect x="19" y="48" width="1.02" height="1.02" fill="#28293c"/><rect x="20" y="48" width="1.02" height="1.02" fill="#1a130b"/><rect x="21" y="48" width="1.02" height="1.02" fill="#1d150b"/><rect x="22" y="48" width="1.02" height="1.02" fill="#281c0b"/><rect x="23" y="48" width="1.02" height="1.02" fill="#0c0903"/><rect x="24" y="48" width="1.02" height="1.02" fill="#130d06"/><rect x="25" y="48" width="1.02" height="1.02" fill="#100c05"/><rect x="26" y="48" width="1.02" height="1.02" fill="#21210b"/><rect x="27" y="48" width="1.02" height="1.02" fill="#1e1e08"/><rect x="28" y="48" width="1.02" height="1.02" fill="#202128"/><rect x="29" y="48" width="1.02" height="1.02" fill="#1e160c"/><rect x="30" y="48" width="1.02" height="1.02" fill="#20222b"/><rect x="31" y="48" width="1.02" height="1.02" fill="#100c05"/><rect x="32" y="48" width="1.02" height="1.02" fill="#21210b"/><rect x="33" y="48" width="1.02" height="1.02" fill="#2d2f2f"/><rect x="34" y="48" width="1.02" height="1.02" fill="#23252e"/><rect x="35" y="48" width="1.02" height="1.02" fill="#24252f"/><rect x="36" y="48" width="1.02" height="1.02" fill="#1d1912"/><rect x="37" y="48" width="1.02" height="1.02" fill="#21222e"/><rect x="38" y="48" width="1.02" height="1.02" fill="#1f1b14"/><rect x="39" y="48" width="1.02" height="1.02" fill="#1b1710"/><rect x="40" y="48" width="1.02" height="1.02" fill="#1b1710"/><rect x="41" y="48" width="1.02" height="1.02" fill="#191b06"/><rect x="42" y="48" width="1.02" height="1.02" fill="#16110a"/><rect x="43" y="48" width="1.02" height="1.02" fill="#21190f"/><rect x="44" y="48" width="1.02" height="1.02" fill="#251a0e"/><rect x="45" y="48" width="1.02" height="1.02" fill="#271c10"/><rect x="46" y="48" width="1.02" height="1.02" fill="#17120b"/><rect x="47" y="48" width="1.02" height="1.02" fill="#34364b"/><rect x="48" y="48" width="1.02" height="1.02" fill="#1f1f0c"/><rect x="49" y="48" width="1.02" height="1.02" fill="#20200a"/><rect x="50" y="48" width="1.02" height="1.02" fill="#1f1f09"/><rect x="51" y="48" width="1.02" height="1.02" fill="#120d06"/><rect x="52" y="48" width="1.02" height="1.02" fill="#30220f"/><rect x="53" y="48" width="1.02" height="1.02" fill="#342613"/><rect x="54" y="48" width="1.02" height="1.02" fill="#181a05"/><rect x="55" y="48" width="1.02" height="1.02" fill="#21190f"/><rect x="56" y="48" width="1.02" height="1.02" fill="#0f0b04"/><rect x="57" y="48" width="1.02" height="1.02" fill="#332512"/><rect x="58" y="48" width="1.02" height="1.02" fill="#2a2b3e"/><rect x="59" y="48" width="1.02" height="1.02" fill="#20180e"/><rect x="60" y="48" width="1.02" height="1.02" fill="#30220f"/><rect x="61" y="48" width="1.02" height="1.02" fill="#0e0a03"/><rect x="62" y="48" width="1.02" height="1.02" fill="#1e2029"/><rect x="63" y="48" width="1.02" height="1.02" fill="#1c1e09"/><rect x="0" y="49" width="1.02" height="1.02" fill="#41413f"/><rect x="1" y="49" width="1.02" height="1.02" fill="#21190f"/><rect x="2" y="49" width="1.02" height="1.02" fill="#271c10"/><rect x="3" y="49" width="1.02" height="1.02" fill="#3e2e18"/><rect x="4" y="49" width="1.02" height="1.02" fill="#141009"/><rect x="5" y="49" width="1.02" height="1.02" fill="#23230d"/><rect x="6" y="49" width="1.02" height="1.02" fill="#24190d"/><rect x="7" y="49" width="1.02" height="1.02" fill="#252410"/><rect x="8" y="49" width="1.02" height="1.02" fill="#16130d"/><rect x="9" y="49" width="1.02" height="1.02" fill="#22242d"/><rect x="10" y="49" width="1.02" height="1.02" fill="#2e2f42"/><rect x="11" y="49" width="1.02" height="1.02" fill="#1a130a"/><rect x="12" y="49" width="1.02" height="1.02" fill="#1d150b"/><rect x="13" y="49" width="1.02" height="1.02" fill="#27260f"/><rect x="14" y="49" width="1.02" height="1.02" fill="#322411"/><rect x="15" y="49" width="1.02" height="1.02" fill="#2c2011"/><rect x="16" y="49" width="1.02" height="1.02" fill="#2e2213"/><rect x="17" y="49" width="1.02" height="1.02" fill="#22232f"/><rect x="18" y="49" width="1.02" height="1.02" fill="#303247"/><rect x="19" y="49" width="1.02" height="1.02" fill="#30220f"/><rect x="20" y="49" width="1.02" height="1.02" fill="#3d2d17"/><rect x="21" y="49" width="1.02" height="1.02" fill="#181209"/><rect x="22" y="49" width="1.02" height="1.02" fill="#2e3045"/><rect x="23" y="49" width="1.02" height="1.02" fill="#342613"/><rect x="24" y="49" width="1.02" height="1.02" fill="#292a3d"/><rect x="25" y="49" width="1.02" height="1.02" fill="#2c2d40"/><rect x="26" y="49" width="1.02" height="1.02" fill="#392913"/><rect x="27" y="49" width="1.02" height="1.02" fill="#2e2213"/><rect x="28" y="49" width="1.02" height="1.02" fill="#332512"/><rect x="29" y="49" width="1.02" height="1.02" fill="#312310"/><rect x="30" y="49" width="1.02" height="1.02" fill="#1e2027"/><rect x="31" y="49" width="1.02" height="1.02" fill="#3c2c16"/><rect x="32" y="49" width="1.02" height="1.02" fill="#1d1d0a"/><rect x="33" y="49" width="1.02" height="1.02" fill="#242626"/><rect x="34" y="49" width="1.02" height="1.02" fill="#110c05"/><rect x="35" y="49" width="1.02" height="1.02" fill="#2c2011"/><rect x="36" y="49" width="1.02" height="1.02" fill="#352714"/><rect x="37" y="49" width="1.02" height="1.02" fill="#2e2213"/><rect x="38" y="49" width="1.02" height="1.02" fill="#1d150b"/><rect x="39" y="49" width="1.02" height="1.02" fill="#291d0e"/><rect x="40" y="49" width="1.02" height="1.02" fill="#392913"/><rect x="41" y="49" width="1.02" height="1.02" fill="#3d2d17"/><rect x="42" y="49" width="1.02" height="1.02" fill="#110d07"/><rect x="43" y="49" width="1.02" height="1.02" fill="#1f170d"/><rect x="44" y="49" width="1.02" height="1.02" fill="#2e2213"/><rect x="45" y="49" width="1.02" height="1.02" fill="#110c05"/><rect x="46" y="49" width="1.02" height="1.02" fill="#100c06"/><rect x="47" y="49" width="1.02" height="1.02" fill="#1b1c23"/><rect x="48" y="49" width="1.02" height="1.02" fill="#2a1e0f"/><rect x="49" y="49" width="1.02" height="1.02" fill="#434341"/><rect x="50" y="49" width="1.02" height="1.02" fill="#392913"/><rect x="51" y="49" width="1.02" height="1.02" fill="#100c06"/><rect x="52" y="49" width="1.02" height="1.02" fill="#3e2e18"/><rect x="53" y="49" width="1.02" height="1.02" fill="#21210b"/><rect x="54" y="49" width="1.02" height="1.02" fill="#2d2112"/><rect x="55" y="49" width="1.02" height="1.02" fill="#322411"/><rect x="56" y="49" width="1.02" height="1.02" fill="#0f0c06"/><rect x="57" y="49" width="1.02" height="1.02" fill="#1f1f09"/><rect x="58" y="49" width="1.02" height="1.02" fill="#1a160f"/><rect x="59" y="49" width="1.02" height="1.02" fill="#19120a"/><rect x="60" y="49" width="1.02" height="1.02" fill="#171008"/><rect x="61" y="49" width="1.02" height="1.02" fill="#292a3d"/><rect x="62" y="49" width="1.02" height="1.02" fill="#21222e"/><rect x="63" y="49" width="1.02" height="1.02" fill="#1e1a13"/><rect x="0" y="50" width="1.02" height="1.02" fill="#1d1f0a"/><rect x="1" y="50" width="1.02" height="1.02" fill="#1f180f"/><rect x="2" y="50" width="1.02" height="1.02" fill="#22210a"/><rect x="3" y="50" width="1.02" height="1.02" fill="#2a2c2c"/><rect x="4" y="50" width="1.02" height="1.02" fill="#1b1710"/><rect x="5" y="50" width="1.02" height="1.02" fill="#1d1f28"/><rect x="6" y="50" width="1.02" height="1.02" fill="#1c1e09"/><rect x="7" y="50" width="1.02" height="1.02" fill="#130f08"/><rect x="8" y="50" width="1.02" height="1.02" fill="#110c05"/><rect x="9" y="50" width="1.02" height="1.02" fill="#23252e"/><rect x="10" y="50" width="1.02" height="1.02" fill="#2d2112"/><rect x="11" y="50" width="1.02" height="1.02" fill="#1f170d"/><rect x="12" y="50" width="1.02" height="1.02" fill="#242531"/><rect x="13" y="50" width="1.02" height="1.02" fill="#141009"/><rect x="14" y="50" width="1.02" height="1.02" fill="#393939"/><rect x="15" y="50" width="1.02" height="1.02" fill="#202128"/><rect x="16" y="50" width="1.02" height="1.02" fill="#332512"/><rect x="17" y="50" width="1.02" height="1.02" fill="#434341"/><rect x="18" y="50" width="1.02" height="1.02" fill="#2b1f10"/><rect x="19" y="50" width="1.02" height="1.02" fill="#21190f"/><rect x="20" y="50" width="1.02" height="1.02" fill="#30220f"/><rect x="21" y="50" width="1.02" height="1.02" fill="#1e160c"/><rect x="22" y="50" width="1.02" height="1.02" fill="#1e1e08"/><rect x="23" y="50" width="1.02" height="1.02" fill="#2c2011"/><rect x="24" y="50" width="1.02" height="1.02" fill="#41413f"/><rect x="25" y="50" width="1.02" height="1.02" fill="#1b1d08"/><rect x="26" y="50" width="1.02" height="1.02" fill="#3f2f19"/><rect x="27" y="50" width="1.02" height="1.02" fill="#2c2011"/><rect x="28" y="50" width="1.02" height="1.02" fill="#291d0e"/><rect x="29" y="50" width="1.02" height="1.02" fill="#130f08"/><rect x="30" y="50" width="1.02" height="1.02" fill="#3e2e18"/><rect x="31" y="50" width="1.02" height="1.02" fill="#1b1710"/><rect x="32" y="50" width="1.02" height="1.02" fill="#1b1d08"/><rect x="33" y="50" width="1.02" height="1.02" fill="#1f2121"/><rect x="34" y="50" width="1.02" height="1.02" fill="#322411"/><rect x="35" y="50" width="1.02" height="1.02" fill="#323449"/><rect x="36" y="50" width="1.02" height="1.02" fill="#1e160c"/><rect x="37" y="50" width="1.02" height="1.02" fill="#3a3a3a"/><rect x="38" y="50" width="1.02" height="1.02" fill="#1e160c"/><rect x="39" y="50" width="1.02" height="1.02" fill="#1b140c"/><rect x="40" y="50" width="1.02" height="1.02" fill="#110d06"/><rect x="41" y="50" width="1.02" height="1.02" fill="#41413f"/><rect x="42" y="50" width="1.02" height="1.02" fill="#181a05"/><rect x="43" y="50" width="1.02" height="1.02" fill="#3e2e18"/><rect x="44" y="50" width="1.02" height="1.02" fill="#2a2b3e"/><rect x="45" y="50" width="1.02" height="1.02" fill="#3c2c16"/><rect x="46" y="50" width="1.02" height="1.02" fill="#1d1f0a"/><rect x="47" y="50" width="1.02" height="1.02" fill="#2b2d2d"/><rect x="48" y="50" width="1.02" height="1.02" fill="#2f2314"/><rect x="49" y="50" width="1.02" height="1.02" fill="#1a1c07"/><rect x="50" y="50" width="1.02" height="1.02" fill="#22170b"/><rect x="51" y="50" width="1.02" height="1.02" fill="#0e0a03"/><rect x="52" y="50" width="1.02" height="1.02" fill="#454543"/><rect x="53" y="50" width="1.02" height="1.02" fill="#1c140a"/><rect x="54" y="50" width="1.02" height="1.02" fill="#22210a"/><rect x="55" y="50" width="1.02" height="1.02" fill="#110d06"/><rect x="56" y="50" width="1.02" height="1.02" fill="#120d06"/><rect x="57" y="50" width="1.02" height="1.02" fill="#202128"/><rect x="58" y="50" width="1.02" height="1.02" fill="#30220f"/><rect x="59" y="50" width="1.02" height="1.02" fill="#33354a"/><rect x="60" y="50" width="1.02" height="1.02" fill="#232430"/><rect x="61" y="50" width="1.02" height="1.02" fill="#323449"/><rect x="62" y="50" width="1.02" height="1.02" fill="#1f1f09"/><rect x="63" y="50" width="1.02" height="1.02" fill="#3f2f19"/><rect x="0" y="51" width="1.02" height="1.02" fill="#3b2b15"/><rect x="1" y="51" width="1.02" height="1.02" fill="#251a0e"/><rect x="2" y="51" width="1.02" height="1.02" fill="#1e1d09"/><rect x="3" y="51" width="1.02" height="1.02" fill="#130e07"/><rect x="4" y="51" width="1.02" height="1.02" fill="#271c10"/><rect x="5" y="51" width="1.02" height="1.02" fill="#1e200b"/><rect x="6" y="51" width="1.02" height="1.02" fill="#100c05"/><rect x="7" y="51" width="1.02" height="1.02" fill="#2c2d40"/><rect x="8" y="51" width="1.02" height="1.02" fill="#0f0b04"/><rect x="9" y="51" width="1.02" height="1.02" fill="#2e3045"/><rect x="10" y="51" width="1.02" height="1.02" fill="#191b06"/><rect x="11" y="51" width="1.02" height="1.02" fill="#141009"/><rect x="12" y="51" width="1.02" height="1.02" fill="#292a3d"/><rect x="13" y="51" width="1.02" height="1.02" fill="#21210b"/><rect x="14" y="51" width="1.02" height="1.02" fill="#261b0f"/><rect x="15" y="51" width="1.02" height="1.02" fill="#424240"/><rect x="16" y="51" width="1.02" height="1.02" fill="#323449"/><rect x="17" y="51" width="1.02" height="1.02" fill="#1e1f26"/><rect x="18" y="51" width="1.02" height="1.02" fill="#2a1e0f"/><rect x="19" y="51" width="1.02" height="1.02" fill="#3f2f19"/><rect x="20" y="51" width="1.02" height="1.02" fill="#261a09"/><rect x="21" y="51" width="1.02" height="1.02" fill="#312310"/><rect x="22" y="51" width="1.02" height="1.02" fill="#1b1b08"/><rect x="23" y="51" width="1.02" height="1.02" fill="#140f08"/><rect x="24" y="51" width="1.02" height="1.02" fill="#110c05"/><rect x="25" y="51" width="1.02" height="1.02" fill="#1b1710"/><rect x="26" y="51" width="1.02" height="1.02" fill="#444442"/><rect x="27" y="51" width="1.02" height="1.02" fill="#2b1f10"/><rect x="28" y="51" width="1.02" height="1.02" fill="#1d1f0a"/><rect x="29" y="51" width="1.02" height="1.02" fill="#130f09"/><rect x="30" y="51" width="1.02" height="1.02" fill="#25240d"/><rect x="31" y="51" width="1.02" height="1.02" fill="#454543"/><rect x="32" y="51" width="1.02" height="1.02" fill="#141503"/><rect x="33" y="51" width="1.02" height="1.02" fill="#1b1710"/><rect x="34" y="51" width="1.02" height="1.02" fill="#23230d"/><rect x="35" y="51" width="1.02" height="1.02" fill="#0e0a03"/><rect x="36" y="51" width="1.02" height="1.02" fill="#1d1912"/><rect x="37" y="51" width="1.02" height="1.02" fill="#1b1d08"/><rect x="38" y="51" width="1.02" height="1.02" fill="#140f08"/><rect x="39" y="51" width="1.02" height="1.02" fill="#262733"/><rect x="40" y="51" width="1.02" height="1.02" fill="#2f2314"/><rect x="41" y="51" width="1.02" height="1.02" fill="#312310"/><rect x="42" y="51" width="1.02" height="1.02" fill="#22242d"/><rect x="43" y="51" width="1.02" height="1.02" fill="#3e2e18"/><rect x="44" y="51" width="1.02" height="1.02" fill="#232334"/><rect x="45" y="51" width="1.02" height="1.02" fill="#3b2b15"/><rect x="46" y="51" width="1.02" height="1.02" fill="#1f2027"/><rect x="47" y="51" width="1.02" height="1.02" fill="#21160a"/><rect x="48" y="51" width="1.02" height="1.02" fill="#2e3045"/><rect x="49" y="51" width="1.02" height="1.02" fill="#130e07"/><rect x="50" y="51" width="1.02" height="1.02" fill="#1b1107"/><rect x="51" y="51" width="1.02" height="1.02" fill="#22210a"/><rect x="52" y="51" width="1.02" height="1.02" fill="#34364b"/><rect x="53" y="51" width="1.02" height="1.02" fill="#1c1e09"/><rect x="54" y="51" width="1.02" height="1.02" fill="#100c05"/><rect x="55" y="51" width="1.02" height="1.02" fill="#393939"/><rect x="56" y="51" width="1.02" height="1.02" fill="#1b1d08"/><rect x="57" y="51" width="1.02" height="1.02" fill="#2e2f42"/><rect x="58" y="51" width="1.02" height="1.02" fill="#160f07"/><rect x="59" y="51" width="1.02" height="1.02" fill="#2d2f41"/><rect x="60" y="51" width="1.02" height="1.02" fill="#17120b"/><rect x="61" y="51" width="1.02" height="1.02" fill="#34364b"/><rect x="62" y="51" width="1.02" height="1.02" fill="#1b1b08"/><rect x="63" y="51" width="1.02" height="1.02" fill="#322411"/><rect x="0" y="52" width="1.02" height="1.02" fill="#282710"/><rect x="1" y="52" width="1.02" height="1.02" fill="#2a1e0f"/><rect x="2" y="52" width="1.02" height="1.02" fill="#110c05"/><rect x="3" y="52" width="1.02" height="1.02" fill="#2c2011"/><rect x="4" y="52" width="1.02" height="1.02" fill="#201c15"/><rect x="5" y="52" width="1.02" height="1.02" fill="#1b1d0b"/><rect x="6" y="52" width="1.02" height="1.02" fill="#20200a"/><rect x="7" y="52" width="1.02" height="1.02" fill="#22220c"/><rect x="8" y="52" width="1.02" height="1.02" fill="#323449"/><rect x="9" y="52" width="1.02" height="1.02" fill="#1b1d08"/><rect x="10" y="52" width="1.02" height="1.02" fill="#131503"/><rect x="11" y="52" width="1.02" height="1.02" fill="#20200a"/><rect x="12" y="52" width="1.02" height="1.02" fill="#2d2e41"/><rect x="13" y="52" width="1.02" height="1.02" fill="#28293c"/><rect x="14" y="52" width="1.02" height="1.02" fill="#21160a"/><rect x="15" y="52" width="1.02" height="1.02" fill="#1c150d"/><rect x="16" y="52" width="1.02" height="1.02" fill="#2d2f2f"/><rect x="17" y="52" width="1.02" height="1.02" fill="#2c2011"/><rect x="18" y="52" width="1.02" height="1.02" fill="#271c0f"/><rect x="19" y="52" width="1.02" height="1.02" fill="#22232f"/><rect x="20" y="52" width="1.02" height="1.02" fill="#0e0a03"/><rect x="21" y="52" width="1.02" height="1.02" fill="#40403e"/><rect x="22" y="52" width="1.02" height="1.02" fill="#141403"/><rect x="23" y="52" width="1.02" height="1.02" fill="#1c1e09"/><rect x="24" y="52" width="1.02" height="1.02" fill="#16110a"/><rect x="25" y="52" width="1.02" height="1.02" fill="#18140e"/><rect x="26" y="52" width="1.02" height="1.02" fill="#151009"/><rect x="27" y="52" width="1.02" height="1.02" fill="#3f2f19"/><rect x="28" y="52" width="1.02" height="1.02" fill="#2e2213"/><rect x="29" y="52" width="1.02" height="1.02" fill="#251a0e"/><rect x="30" y="52" width="1.02" height="1.02" fill="#262733"/><rect x="31" y="52" width="1.02" height="1.02" fill="#1d1d07"/><rect x="32" y="52" width="1.02" height="1.02" fill="#312310"/><rect x="33" y="52" width="1.02" height="1.02" fill="#141009"/><rect x="34" y="52" width="1.02" height="1.02" fill="#21160a"/><rect x="35" y="52" width="1.02" height="1.02" fill="#2c2d40"/><rect x="36" y="52" width="1.02" height="1.02" fill="#2d2f2f"/><rect x="37" y="52" width="1.02" height="1.02" fill="#1e200b"/><rect x="38" y="52" width="1.02" height="1.02" fill="#22220c"/><rect x="39" y="52" width="1.02" height="1.02" fill="#2e2f42"/><rect x="40" y="52" width="1.02" height="1.02" fill="#1e1e08"/><rect x="41" y="52" width="1.02" height="1.02" fill="#352714"/><rect x="42" y="52" width="1.02" height="1.02" fill="#1d1f28"/><rect x="43" y="52" width="1.02" height="1.02" fill="#1c140a"/><rect x="44" y="52" width="1.02" height="1.02" fill="#34364b"/><rect x="45" y="52" width="1.02" height="1.02" fill="#1f212a"/><rect x="46" y="52" width="1.02" height="1.02" fill="#392913"/><rect x="47" y="52" width="1.02" height="1.02" fill="#141009"/><rect x="48" y="52" width="1.02" height="1.02" fill="#2a2b3e"/><rect x="49" y="52" width="1.02" height="1.02" fill="#110c05"/><rect x="50" y="52" width="1.02" height="1.02" fill="#322411"/><rect x="51" y="52" width="1.02" height="1.02" fill="#1a1905"/><rect x="52" y="52" width="1.02" height="1.02" fill="#392913"/><rect x="53" y="52" width="1.02" height="1.02" fill="#1e1a13"/><rect x="54" y="52" width="1.02" height="1.02" fill="#393939"/><rect x="55" y="52" width="1.02" height="1.02" fill="#261b0f"/><rect x="56" y="52" width="1.02" height="1.02" fill="#2c2d40"/><rect x="57" y="52" width="1.02" height="1.02" fill="#23252e"/><rect x="58" y="52" width="1.02" height="1.02" fill="#21160a"/><rect x="59" y="52" width="1.02" height="1.02" fill="#342613"/><rect x="60" y="52" width="1.02" height="1.02" fill="#1b1c23"/><rect x="61" y="52" width="1.02" height="1.02" fill="#1c1811"/><rect x="62" y="52" width="1.02" height="1.02" fill="#191908"/><rect x="63" y="52" width="1.02" height="1.02" fill="#281b0b"/><rect x="0" y="53" width="1.02" height="1.02" fill="#1f1e0a"/><rect x="1" y="53" width="1.02" height="1.02" fill="#20180e"/><rect x="2" y="53" width="1.02" height="1.02" fill="#23252e"/><rect x="3" y="53" width="1.02" height="1.02" fill="#24230c"/><rect x="4" y="53" width="1.02" height="1.02" fill="#2b2c3f"/><rect x="5" y="53" width="1.02" height="1.02" fill="#24230c"/><rect x="6" y="53" width="1.02" height="1.02" fill="#21190f"/><rect x="7" y="53" width="1.02" height="1.02" fill="#2f2314"/><rect x="8" y="53" width="1.02" height="1.02" fill="#392913"/><rect x="9" y="53" width="1.02" height="1.02" fill="#22170b"/><rect x="10" y="53" width="1.02" height="1.02" fill="#22242d"/><rect x="11" y="53" width="1.02" height="1.02" fill="#1b1309"/><rect x="12" y="53" width="1.02" height="1.02" fill="#352714"/><rect x="13" y="53" width="1.02" height="1.02" fill="#232434"/><rect x="14" y="53" width="1.02" height="1.02" fill="#23180c"/><rect x="15" y="53" width="1.02" height="1.02" fill="#322411"/><rect x="16" y="53" width="1.02" height="1.02" fill="#362815"/><rect x="17" y="53" width="1.02" height="1.02" fill="#1a130b"/><rect x="18" y="53" width="1.02" height="1.02" fill="#1f1f09"/><rect x="19" y="53" width="1.02" height="1.02" fill="#353535"/><rect x="20" y="53" width="1.02" height="1.02" fill="#282710"/><rect x="21" y="53" width="1.02" height="1.02" fill="#303247"/><rect x="22" y="53" width="1.02" height="1.02" fill="#21190f"/><rect x="23" y="53" width="1.02" height="1.02" fill="#1e160c"/><rect x="24" y="53" width="1.02" height="1.02" fill="#3e2e18"/><rect x="25" y="53" width="1.02" height="1.02" fill="#1d1912"/><rect x="26" y="53" width="1.02" height="1.02" fill="#25240d"/><rect x="27" y="53" width="1.02" height="1.02" fill="#342613"/><rect x="28" y="53" width="1.02" height="1.02" fill="#261c0f"/><rect x="29" y="53" width="1.02" height="1.02" fill="#342613"/><rect x="30" y="53" width="1.02" height="1.02" fill="#21222c"/><rect x="31" y="53" width="1.02" height="1.02" fill="#1e1f26"/><rect x="32" y="53" width="1.02" height="1.02" fill="#40403e"/><rect x="33" y="53" width="1.02" height="1.02" fill="#110d07"/><rect x="34" y="53" width="1.02" height="1.02" fill="#2d2112"/><rect x="35" y="53" width="1.02" height="1.02" fill="#24190d"/><rect x="36" y="53" width="1.02" height="1.02" fill="#282710"/><rect x="37" y="53" width="1.02" height="1.02" fill="#20180e"/><rect x="38" y="53" width="1.02" height="1.02" fill="#30220f"/><rect x="39" y="53" width="1.02" height="1.02" fill="#272838"/><rect x="40" y="53" width="1.02" height="1.02" fill="#261b0f"/><rect x="41" y="53" width="1.02" height="1.02" fill="#16110a"/><rect x="42" y="53" width="1.02" height="1.02" fill="#1f2027"/><rect x="43" y="53" width="1.02" height="1.02" fill="#1b140c"/><rect x="44" y="53" width="1.02" height="1.02" fill="#130f08"/><rect x="45" y="53" width="1.02" height="1.02" fill="#1d1f27"/><rect x="46" y="53" width="1.02" height="1.02" fill="#22220c"/><rect x="47" y="53" width="1.02" height="1.02" fill="#140f08"/><rect x="48" y="53" width="1.02" height="1.02" fill="#1c140a"/><rect x="49" y="53" width="1.02" height="1.02" fill="#342613"/><rect x="50" y="53" width="1.02" height="1.02" fill="#261b0f"/><rect x="51" y="53" width="1.02" height="1.02" fill="#1c140a"/><rect x="52" y="53" width="1.02" height="1.02" fill="#30220f"/><rect x="53" y="53" width="1.02" height="1.02" fill="#454543"/><rect x="54" y="53" width="1.02" height="1.02" fill="#292a3d"/><rect x="55" y="53" width="1.02" height="1.02" fill="#1d150b"/><rect x="56" y="53" width="1.02" height="1.02" fill="#40403e"/><rect x="57" y="53" width="1.02" height="1.02" fill="#251a0e"/><rect x="58" y="53" width="1.02" height="1.02" fill="#22170b"/><rect x="59" y="53" width="1.02" height="1.02" fill="#1e160c"/><rect x="60" y="53" width="1.02" height="1.02" fill="#2a2b3e"/><rect x="61" y="53" width="1.02" height="1.02" fill="#1c140a"/><rect x="62" y="53" width="1.02" height="1.02" fill="#383838"/><rect x="63" y="53" width="1.02" height="1.02" fill="#292a3d"/><rect x="0" y="54" width="1.02" height="1.02" fill="#21190f"/><rect x="1" y="54" width="1.02" height="1.02" fill="#191b06"/><rect x="2" y="54" width="1.02" height="1.02" fill="#454543"/><rect x="3" y="54" width="1.02" height="1.02" fill="#21160a"/><rect x="4" y="54" width="1.02" height="1.02" fill="#2f2314"/><rect x="5" y="54" width="1.02" height="1.02" fill="#21190f"/><rect x="6" y="54" width="1.02" height="1.02" fill="#1e1f26"/><rect x="7" y="54" width="1.02" height="1.02" fill="#261c0f"/><rect x="8" y="54" width="1.02" height="1.02" fill="#120e07"/><rect x="9" y="54" width="1.02" height="1.02" fill="#251a0e"/><rect x="10" y="54" width="1.02" height="1.02" fill="#1c150d"/><rect x="11" y="54" width="1.02" height="1.02" fill="#2c2011"/><rect x="12" y="54" width="1.02" height="1.02" fill="#16110a"/><rect x="13" y="54" width="1.02" height="1.02" fill="#2f3146"/><rect x="14" y="54" width="1.02" height="1.02" fill="#242531"/><rect x="15" y="54" width="1.02" height="1.02" fill="#2b2c3f"/><rect x="16" y="54" width="1.02" height="1.02" fill="#2b2c3f"/><rect x="17" y="54" width="1.02" height="1.02" fill="#140e07"/><rect x="18" y="54" width="1.02" height="1.02" fill="#1b140c"/><rect x="19" y="54" width="1.02" height="1.02" fill="#20222b"/><rect x="20" y="54" width="1.02" height="1.02" fill="#292a3d"/><rect x="21" y="54" width="1.02" height="1.02" fill="#1d1d07"/><rect x="22" y="54" width="1.02" height="1.02" fill="#1b1d08"/><rect x="23" y="54" width="1.02" height="1.02" fill="#1c1811"/><rect x="24" y="54" width="1.02" height="1.02" fill="#1d150b"/><rect x="25" y="54" width="1.02" height="1.02" fill="#16110a"/><rect x="26" y="54" width="1.02" height="1.02" fill="#30220f"/><rect x="27" y="54" width="1.02" height="1.02" fill="#1f2027"/><rect x="28" y="54" width="1.02" height="1.02" fill="#3f2f19"/><rect x="29" y="54" width="1.02" height="1.02" fill="#22242d"/><rect x="30" y="54" width="1.02" height="1.02" fill="#1b1d08"/><rect x="31" y="54" width="1.02" height="1.02" fill="#181a05"/><rect x="32" y="54" width="1.02" height="1.02" fill="#3c2c16"/><rect x="33" y="54" width="1.02" height="1.02" fill="#271c10"/><rect x="34" y="54" width="1.02" height="1.02" fill="#241a0d"/><rect x="35" y="54" width="1.02" height="1.02" fill="#1c1309"/><rect x="36" y="54" width="1.02" height="1.02" fill="#201f0b"/><rect x="37" y="54" width="1.02" height="1.02" fill="#1d1d07"/><rect x="38" y="54" width="1.02" height="1.02" fill="#261a09"/><rect x="39" y="54" width="1.02" height="1.02" fill="#373737"/><rect x="40" y="54" width="1.02" height="1.02" fill="#100c05"/><rect x="41" y="54" width="1.02" height="1.02" fill="#100c05"/><rect x="42" y="54" width="1.02" height="1.02" fill="#17181e"/><rect x="43" y="54" width="1.02" height="1.02" fill="#251a0e"/><rect x="44" y="54" width="1.02" height="1.02" fill="#0f0b05"/><rect x="45" y="54" width="1.02" height="1.02" fill="#24230c"/><rect x="46" y="54" width="1.02" height="1.02" fill="#3d2d17"/><rect x="47" y="54" width="1.02" height="1.02" fill="#313348"/><rect x="48" y="54" width="1.02" height="1.02" fill="#362815"/><rect x="49" y="54" width="1.02" height="1.02" fill="#2c2010"/><rect x="50" y="54" width="1.02" height="1.02" fill="#21180d"/><rect x="51" y="54" width="1.02" height="1.02" fill="#34364b"/><rect x="52" y="54" width="1.02" height="1.02" fill="#181a05"/><rect x="53" y="54" width="1.02" height="1.02" fill="#1b1710"/><rect x="54" y="54" width="1.02" height="1.02" fill="#242535"/><rect x="55" y="54" width="1.02" height="1.02" fill="#23220b"/><rect x="56" y="54" width="1.02" height="1.02" fill="#130f08"/><rect x="57" y="54" width="1.02" height="1.02" fill="#1d140a"/><rect x="58" y="54" width="1.02" height="1.02" fill="#312310"/><rect x="59" y="54" width="1.02" height="1.02" fill="#1b1c23"/><rect x="60" y="54" width="1.02" height="1.02" fill="#352714"/><rect x="61" y="54" width="1.02" height="1.02" fill="#22170b"/><rect x="62" y="54" width="1.02" height="1.02" fill="#332512"/><rect x="63" y="54" width="1.02" height="1.02" fill="#272834"/><rect x="0" y="55" width="1.02" height="1.02" fill="#23180c"/><rect x="1" y="55" width="1.02" height="1.02" fill="#2c2011"/><rect x="2" y="55" width="1.02" height="1.02" fill="#3a3a38"/><rect x="3" y="55" width="1.02" height="1.02" fill="#1d1309"/><rect x="4" y="55" width="1.02" height="1.02" fill="#1d1f0a"/><rect x="5" y="55" width="1.02" height="1.02" fill="#21160a"/><rect x="6" y="55" width="1.02" height="1.02" fill="#313348"/><rect x="7" y="55" width="1.02" height="1.02" fill="#231b0f"/><rect x="8" y="55" width="1.02" height="1.02" fill="#362815"/><rect x="9" y="55" width="1.02" height="1.02" fill="#21232c"/><rect x="10" y="55" width="1.02" height="1.02" fill="#26250e"/><rect x="11" y="55" width="1.02" height="1.02" fill="#281e11"/><rect x="12" y="55" width="1.02" height="1.02" fill="#1e2029"/><rect x="13" y="55" width="1.02" height="1.02" fill="#292b3d"/><rect x="14" y="55" width="1.02" height="1.02" fill="#130e07"/><rect x="15" y="55" width="1.02" height="1.02" fill="#1e200b"/><rect x="16" y="55" width="1.02" height="1.02" fill="#19120a"/><rect x="17" y="55" width="1.02" height="1.02" fill="#21222e"/><rect x="18" y="55" width="1.02" height="1.02" fill="#2c2d40"/><rect x="19" y="55" width="1.02" height="1.02" fill="#181a21"/><rect x="20" y="55" width="1.02" height="1.02" fill="#1e200b"/><rect x="21" y="55" width="1.02" height="1.02" fill="#21190f"/><rect x="22" y="55" width="1.02" height="1.02" fill="#1d1f28"/><rect x="23" y="55" width="1.02" height="1.02" fill="#110c05"/><rect x="24" y="55" width="1.02" height="1.02" fill="#313348"/><rect x="25" y="55" width="1.02" height="1.02" fill="#362815"/><rect x="26" y="55" width="1.02" height="1.02" fill="#2d2e41"/><rect x="27" y="55" width="1.02" height="1.02" fill="#3a3a3a"/><rect x="28" y="55" width="1.02" height="1.02" fill="#291d0e"/><rect x="29" y="55" width="1.02" height="1.02" fill="#1c150d"/><rect x="30" y="55" width="1.02" height="1.02" fill="#352714"/><rect x="31" y="55" width="1.02" height="1.02" fill="#17120b"/><rect x="32" y="55" width="1.02" height="1.02" fill="#342613"/><rect x="33" y="55" width="1.02" height="1.02" fill="#1e150a"/><rect x="34" y="55" width="1.02" height="1.02" fill="#362815"/><rect x="35" y="55" width="1.02" height="1.02" fill="#424240"/><rect x="36" y="55" width="1.02" height="1.02" fill="#0e0a03"/><rect x="37" y="55" width="1.02" height="1.02" fill="#21190f"/><rect x="38" y="55" width="1.02" height="1.02" fill="#23230d"/><rect x="39" y="55" width="1.02" height="1.02" fill="#191b06"/><rect x="40" y="55" width="1.02" height="1.02" fill="#26250e"/><rect x="41" y="55" width="1.02" height="1.02" fill="#0f0b04"/><rect x="42" y="55" width="1.02" height="1.02" fill="#232430"/><rect x="43" y="55" width="1.02" height="1.02" fill="#362815"/><rect x="44" y="55" width="1.02" height="1.02" fill="#2f3131"/><rect x="45" y="55" width="1.02" height="1.02" fill="#272834"/><rect x="46" y="55" width="1.02" height="1.02" fill="#1c1811"/><rect x="47" y="55" width="1.02" height="1.02" fill="#1b140c"/><rect x="48" y="55" width="1.02" height="1.02" fill="#21160a"/><rect x="49" y="55" width="1.02" height="1.02" fill="#22170b"/><rect x="50" y="55" width="1.02" height="1.02" fill="#1f1b14"/><rect x="51" y="55" width="1.02" height="1.02" fill="#2f3143"/><rect x="52" y="55" width="1.02" height="1.02" fill="#1d1912"/><rect x="53" y="55" width="1.02" height="1.02" fill="#1d1e25"/><rect x="54" y="55" width="1.02" height="1.02" fill="#352714"/><rect x="55" y="55" width="1.02" height="1.02" fill="#151009"/><rect x="56" y="55" width="1.02" height="1.02" fill="#181a05"/><rect x="57" y="55" width="1.02" height="1.02" fill="#171008"/><rect x="58" y="55" width="1.02" height="1.02" fill="#16110a"/><rect x="59" y="55" width="1.02" height="1.02" fill="#3d2d17"/><rect x="60" y="55" width="1.02" height="1.02" fill="#2e3045"/><rect x="61" y="55" width="1.02" height="1.02" fill="#3f2f19"/><rect x="62" y="55" width="1.02" height="1.02" fill="#3f2f19"/><rect x="63" y="55" width="1.02" height="1.02" fill="#20212b"/><rect x="0" y="56" width="1.02" height="1.02" fill="#41413f"/><rect x="1" y="56" width="1.02" height="1.02" fill="#2f3146"/><rect x="2" y="56" width="1.02" height="1.02" fill="#2e3030"/><rect x="3" y="56" width="1.02" height="1.02" fill="#16110a"/><rect x="4" y="56" width="1.02" height="1.02" fill="#201c15"/><rect x="5" y="56" width="1.02" height="1.02" fill="#28293c"/><rect x="6" y="56" width="1.02" height="1.02" fill="#17120b"/><rect x="7" y="56" width="1.02" height="1.02" fill="#22170b"/><rect x="8" y="56" width="1.02" height="1.02" fill="#1d1f0a"/><rect x="9" y="56" width="1.02" height="1.02" fill="#1a130b"/><rect x="10" y="56" width="1.02" height="1.02" fill="#21190f"/><rect x="11" y="56" width="1.02" height="1.02" fill="#20170c"/><rect x="12" y="56" width="1.02" height="1.02" fill="#312310"/><rect x="13" y="56" width="1.02" height="1.02" fill="#1a160f"/><rect x="14" y="56" width="1.02" height="1.02" fill="#0d0903"/><rect x="15" y="56" width="1.02" height="1.02" fill="#22220c"/><rect x="16" y="56" width="1.02" height="1.02" fill="#1a130b"/><rect x="17" y="56" width="1.02" height="1.02" fill="#2f2314"/><rect x="18" y="56" width="1.02" height="1.02" fill="#16110a"/><rect x="19" y="56" width="1.02" height="1.02" fill="#181109"/><rect x="20" y="56" width="1.02" height="1.02" fill="#140f08"/><rect x="21" y="56" width="1.02" height="1.02" fill="#17120b"/><rect x="22" y="56" width="1.02" height="1.02" fill="#1b1d25"/><rect x="23" y="56" width="1.02" height="1.02" fill="#110d06"/><rect x="24" y="56" width="1.02" height="1.02" fill="#3b2b15"/><rect x="25" y="56" width="1.02" height="1.02" fill="#292a3d"/><rect x="26" y="56" width="1.02" height="1.02" fill="#1c1811"/><rect x="27" y="56" width="1.02" height="1.02" fill="#2e3045"/><rect x="28" y="56" width="1.02" height="1.02" fill="#151009"/><rect x="29" y="56" width="1.02" height="1.02" fill="#201c15"/><rect x="30" y="56" width="1.02" height="1.02" fill="#110d06"/><rect x="31" y="56" width="1.02" height="1.02" fill="#1a130b"/><rect x="32" y="56" width="1.02" height="1.02" fill="#1b1309"/><rect x="33" y="56" width="1.02" height="1.02" fill="#1d150b"/><rect x="34" y="56" width="1.02" height="1.02" fill="#33354a"/><rect x="35" y="56" width="1.02" height="1.02" fill="#1c1e09"/><rect x="36" y="56" width="1.02" height="1.02" fill="#0f0b05"/><rect x="37" y="56" width="1.02" height="1.02" fill="#1d1912"/><rect x="38" y="56" width="1.02" height="1.02" fill="#261b0f"/><rect x="39" y="56" width="1.02" height="1.02" fill="#201c15"/><rect x="40" y="56" width="1.02" height="1.02" fill="#181109"/><rect x="41" y="56" width="1.02" height="1.02" fill="#3c2c16"/><rect x="42" y="56" width="1.02" height="1.02" fill="#2f2314"/><rect x="43" y="56" width="1.02" height="1.02" fill="#1d1912"/><rect x="44" y="56" width="1.02" height="1.02" fill="#130e07"/><rect x="45" y="56" width="1.02" height="1.02" fill="#22242d"/><rect x="46" y="56" width="1.02" height="1.02" fill="#332512"/><rect x="47" y="56" width="1.02" height="1.02" fill="#0e0a03"/><rect x="48" y="56" width="1.02" height="1.02" fill="#141009"/><rect x="49" y="56" width="1.02" height="1.02" fill="#100c05"/><rect x="50" y="56" width="1.02" height="1.02" fill="#1a160f"/><rect x="51" y="56" width="1.02" height="1.02" fill="#262837"/><rect x="52" y="56" width="1.02" height="1.02" fill="#1b1812"/><rect x="53" y="56" width="1.02" height="1.02" fill="#291d0e"/><rect x="54" y="56" width="1.02" height="1.02" fill="#22170b"/><rect x="55" y="56" width="1.02" height="1.02" fill="#23230d"/><rect x="56" y="56" width="1.02" height="1.02" fill="#160f07"/><rect x="57" y="56" width="1.02" height="1.02" fill="#25240d"/><rect x="58" y="56" width="1.02" height="1.02" fill="#15110b"/><rect x="59" y="56" width="1.02" height="1.02" fill="#2b1f10"/><rect x="60" y="56" width="1.02" height="1.02" fill="#242638"/><rect x="61" y="56" width="1.02" height="1.02" fill="#352714"/><rect x="62" y="56" width="1.02" height="1.02" fill="#1c140a"/><rect x="63" y="56" width="1.02" height="1.02" fill="#191a22"/><rect x="0" y="57" width="1.02" height="1.02" fill="#2a2b3e"/><rect x="1" y="57" width="1.02" height="1.02" fill="#25240d"/><rect x="2" y="57" width="1.02" height="1.02" fill="#1a160f"/><rect x="3" y="57" width="1.02" height="1.02" fill="#292a3d"/><rect x="4" y="57" width="1.02" height="1.02" fill="#352714"/><rect x="5" y="57" width="1.02" height="1.02" fill="#3d2d17"/><rect x="6" y="57" width="1.02" height="1.02" fill="#1f170d"/><rect x="7" y="57" width="1.02" height="1.02" fill="#1d1912"/><rect x="8" y="57" width="1.02" height="1.02" fill="#130f08"/><rect x="9" y="57" width="1.02" height="1.02" fill="#3a3a3a"/><rect x="10" y="57" width="1.02" height="1.02" fill="#2e2213"/><rect x="11" y="57" width="1.02" height="1.02" fill="#252632"/><rect x="12" y="57" width="1.02" height="1.02" fill="#1a1b22"/><rect x="13" y="57" width="1.02" height="1.02" fill="#1a130b"/><rect x="14" y="57" width="1.02" height="1.02" fill="#20222b"/><rect x="15" y="57" width="1.02" height="1.02" fill="#191b06"/><rect x="16" y="57" width="1.02" height="1.02" fill="#0f0b04"/><rect x="17" y="57" width="1.02" height="1.02" fill="#252632"/><rect x="18" y="57" width="1.02" height="1.02" fill="#3b2b15"/><rect x="19" y="57" width="1.02" height="1.02" fill="#3f2f19"/><rect x="20" y="57" width="1.02" height="1.02" fill="#373737"/><rect x="21" y="57" width="1.02" height="1.02" fill="#2b2c3f"/><rect x="22" y="57" width="1.02" height="1.02" fill="#120e07"/><rect x="23" y="57" width="1.02" height="1.02" fill="#21222e"/><rect x="24" y="57" width="1.02" height="1.02" fill="#1d150b"/><rect x="25" y="57" width="1.02" height="1.02" fill="#1d1912"/><rect x="26" y="57" width="1.02" height="1.02" fill="#22220c"/><rect x="27" y="57" width="1.02" height="1.02" fill="#140f08"/><rect x="28" y="57" width="1.02" height="1.02" fill="#261b0f"/><rect x="29" y="57" width="1.02" height="1.02" fill="#2c2d40"/><rect x="30" y="57" width="1.02" height="1.02" fill="#464644"/><rect x="31" y="57" width="1.02" height="1.02" fill="#25240d"/><rect x="32" y="57" width="1.02" height="1.02" fill="#1b1309"/><rect x="33" y="57" width="1.02" height="1.02" fill="#1b150c"/><rect x="34" y="57" width="1.02" height="1.02" fill="#252632"/><rect x="35" y="57" width="1.02" height="1.02" fill="#181109"/><rect x="36" y="57" width="1.02" height="1.02" fill="#181109"/><rect x="37" y="57" width="1.02" height="1.02" fill="#1b1309"/><rect x="38" y="57" width="1.02" height="1.02" fill="#231a0f"/><rect x="39" y="57" width="1.02" height="1.02" fill="#20200a"/><rect x="40" y="57" width="1.02" height="1.02" fill="#22220c"/><rect x="41" y="57" width="1.02" height="1.02" fill="#191b06"/><rect x="42" y="57" width="1.02" height="1.02" fill="#262733"/><rect x="43" y="57" width="1.02" height="1.02" fill="#0f0b04"/><rect x="44" y="57" width="1.02" height="1.02" fill="#282710"/><rect x="45" y="57" width="1.02" height="1.02" fill="#22170b"/><rect x="46" y="57" width="1.02" height="1.02" fill="#464644"/><rect x="47" y="57" width="1.02" height="1.02" fill="#0c0802"/><rect x="48" y="57" width="1.02" height="1.02" fill="#23220b"/><rect x="49" y="57" width="1.02" height="1.02" fill="#0d0a04"/><rect x="50" y="57" width="1.02" height="1.02" fill="#2f3146"/><rect x="51" y="57" width="1.02" height="1.02" fill="#181109"/><rect x="52" y="57" width="1.02" height="1.02" fill="#1c1d24"/><rect x="53" y="57" width="1.02" height="1.02" fill="#2c2011"/><rect x="54" y="57" width="1.02" height="1.02" fill="#2b2d2d"/><rect x="55" y="57" width="1.02" height="1.02" fill="#1e1e0b"/><rect x="56" y="57" width="1.02" height="1.02" fill="#181109"/><rect x="57" y="57" width="1.02" height="1.02" fill="#120d06"/><rect x="58" y="57" width="1.02" height="1.02" fill="#332512"/><rect x="59" y="57" width="1.02" height="1.02" fill="#23180c"/><rect x="60" y="57" width="1.02" height="1.02" fill="#332512"/><rect x="61" y="57" width="1.02" height="1.02" fill="#110d06"/><rect x="62" y="57" width="1.02" height="1.02" fill="#202128"/><rect x="63" y="57" width="1.02" height="1.02" fill="#2d2112"/><rect x="0" y="58" width="1.02" height="1.02" fill="#2e2213"/><rect x="1" y="58" width="1.02" height="1.02" fill="#22170b"/><rect x="2" y="58" width="1.02" height="1.02" fill="#3e2e18"/><rect x="3" y="58" width="1.02" height="1.02" fill="#262737"/><rect x="4" y="58" width="1.02" height="1.02" fill="#30220f"/><rect x="5" y="58" width="1.02" height="1.02" fill="#232430"/><rect x="6" y="58" width="1.02" height="1.02" fill="#1a130b"/><rect x="7" y="58" width="1.02" height="1.02" fill="#17140e"/><rect x="8" y="58" width="1.02" height="1.02" fill="#151009"/><rect x="9" y="58" width="1.02" height="1.02" fill="#1c1e09"/><rect x="10" y="58" width="1.02" height="1.02" fill="#2a1e0f"/><rect x="11" y="58" width="1.02" height="1.02" fill="#291d0e"/><rect x="12" y="58" width="1.02" height="1.02" fill="#1a1c07"/><rect x="13" y="58" width="1.02" height="1.02" fill="#110c05"/><rect x="14" y="58" width="1.02" height="1.02" fill="#2e3045"/><rect x="15" y="58" width="1.02" height="1.02" fill="#191b06"/><rect x="16" y="58" width="1.02" height="1.02" fill="#1d1d07"/><rect x="17" y="58" width="1.02" height="1.02" fill="#2d2f2f"/><rect x="18" y="58" width="1.02" height="1.02" fill="#342613"/><rect x="19" y="58" width="1.02" height="1.02" fill="#24230c"/><rect x="20" y="58" width="1.02" height="1.02" fill="#2a1e0f"/><rect x="21" y="58" width="1.02" height="1.02" fill="#272839"/><rect x="22" y="58" width="1.02" height="1.02" fill="#3d2d17"/><rect x="23" y="58" width="1.02" height="1.02" fill="#1d1912"/><rect x="24" y="58" width="1.02" height="1.02" fill="#22170b"/><rect x="25" y="58" width="1.02" height="1.02" fill="#22170b"/><rect x="26" y="58" width="1.02" height="1.02" fill="#271c10"/><rect x="27" y="58" width="1.02" height="1.02" fill="#110d06"/><rect x="28" y="58" width="1.02" height="1.02" fill="#24190d"/><rect x="29" y="58" width="1.02" height="1.02" fill="#251a0e"/><rect x="30" y="58" width="1.02" height="1.02" fill="#30220f"/><rect x="31" y="58" width="1.02" height="1.02" fill="#22242d"/><rect x="32" y="58" width="1.02" height="1.02" fill="#1a130a"/><rect x="33" y="58" width="1.02" height="1.02" fill="#1b1710"/><rect x="34" y="58" width="1.02" height="1.02" fill="#1d150b"/><rect x="35" y="58" width="1.02" height="1.02" fill="#3c2c16"/><rect x="36" y="58" width="1.02" height="1.02" fill="#1a160f"/><rect x="37" y="58" width="1.02" height="1.02" fill="#2e2f42"/><rect x="38" y="58" width="1.02" height="1.02" fill="#392913"/><rect x="39" y="58" width="1.02" height="1.02" fill="#2d2112"/><rect x="40" y="58" width="1.02" height="1.02" fill="#2c2011"/><rect x="41" y="58" width="1.02" height="1.02" fill="#19120a"/><rect x="42" y="58" width="1.02" height="1.02" fill="#1e1f29"/><rect x="43" y="58" width="1.02" height="1.02" fill="#1b1309"/><rect x="44" y="58" width="1.02" height="1.02" fill="#322411"/><rect x="45" y="58" width="1.02" height="1.02" fill="#1e2029"/><rect x="46" y="58" width="1.02" height="1.02" fill="#3c3c3a"/><rect x="47" y="58" width="1.02" height="1.02" fill="#160f07"/><rect x="48" y="58" width="1.02" height="1.02" fill="#1f1e0a"/><rect x="49" y="58" width="1.02" height="1.02" fill="#24190d"/><rect x="50" y="58" width="1.02" height="1.02" fill="#160f07"/><rect x="51" y="58" width="1.02" height="1.02" fill="#1c1811"/><rect x="52" y="58" width="1.02" height="1.02" fill="#19191f"/><rect x="53" y="58" width="1.02" height="1.02" fill="#160f07"/><rect x="54" y="58" width="1.02" height="1.02" fill="#261b0f"/><rect x="55" y="58" width="1.02" height="1.02" fill="#292b2b"/><rect x="56" y="58" width="1.02" height="1.02" fill="#21222e"/><rect x="57" y="58" width="1.02" height="1.02" fill="#2d2112"/><rect x="58" y="58" width="1.02" height="1.02" fill="#2e2213"/><rect x="59" y="58" width="1.02" height="1.02" fill="#0f0b04"/><rect x="60" y="58" width="1.02" height="1.02" fill="#120d06"/><rect x="61" y="58" width="1.02" height="1.02" fill="#100d07"/><rect x="62" y="58" width="1.02" height="1.02" fill="#2e2213"/><rect x="63" y="58" width="1.02" height="1.02" fill="#272834"/><rect x="0" y="59" width="1.02" height="1.02" fill="#22232f"/><rect x="1" y="59" width="1.02" height="1.02" fill="#1c1208"/><rect x="2" y="59" width="1.02" height="1.02" fill="#342613"/><rect x="3" y="59" width="1.02" height="1.02" fill="#3f2f19"/><rect x="4" y="59" width="1.02" height="1.02" fill="#181109"/><rect x="5" y="59" width="1.02" height="1.02" fill="#0f0b04"/><rect x="6" y="59" width="1.02" height="1.02" fill="#1a130b"/><rect x="7" y="59" width="1.02" height="1.02" fill="#140f08"/><rect x="8" y="59" width="1.02" height="1.02" fill="#151009"/><rect x="9" y="59" width="1.02" height="1.02" fill="#21190f"/><rect x="10" y="59" width="1.02" height="1.02" fill="#1e1a13"/><rect x="11" y="59" width="1.02" height="1.02" fill="#17120b"/><rect x="12" y="59" width="1.02" height="1.02" fill="#2e2213"/><rect x="13" y="59" width="1.02" height="1.02" fill="#332512"/><rect x="14" y="59" width="1.02" height="1.02" fill="#2e2f42"/><rect x="15" y="59" width="1.02" height="1.02" fill="#22242d"/><rect x="16" y="59" width="1.02" height="1.02" fill="#392913"/><rect x="17" y="59" width="1.02" height="1.02" fill="#1e1a13"/><rect x="18" y="59" width="1.02" height="1.02" fill="#23252e"/><rect x="19" y="59" width="1.02" height="1.02" fill="#1b1309"/><rect x="20" y="59" width="1.02" height="1.02" fill="#2b2c3f"/><rect x="21" y="59" width="1.02" height="1.02" fill="#1f202f"/><rect x="22" y="59" width="1.02" height="1.02" fill="#181109"/><rect x="23" y="59" width="1.02" height="1.02" fill="#24230c"/><rect x="24" y="59" width="1.02" height="1.02" fill="#2e2213"/><rect x="25" y="59" width="1.02" height="1.02" fill="#2b1f10"/><rect x="26" y="59" width="1.02" height="1.02" fill="#1f160b"/><rect x="27" y="59" width="1.02" height="1.02" fill="#171008"/><rect x="28" y="59" width="1.02" height="1.02" fill="#110c05"/><rect x="29" y="59" width="1.02" height="1.02" fill="#1e1a13"/><rect x="30" y="59" width="1.02" height="1.02" fill="#434341"/><rect x="31" y="59" width="1.02" height="1.02" fill="#1d1f28"/><rect x="32" y="59" width="1.02" height="1.02" fill="#251a0e"/><rect x="33" y="59" width="1.02" height="1.02" fill="#3e2e18"/><rect x="34" y="59" width="1.02" height="1.02" fill="#22170b"/><rect x="35" y="59" width="1.02" height="1.02" fill="#1e1e08"/><rect x="36" y="59" width="1.02" height="1.02" fill="#1d1f28"/><rect x="37" y="59" width="1.02" height="1.02" fill="#262737"/><rect x="38" y="59" width="1.02" height="1.02" fill="#21210b"/><rect x="39" y="59" width="1.02" height="1.02" fill="#1d150b"/><rect x="40" y="59" width="1.02" height="1.02" fill="#1e1e08"/><rect x="41" y="59" width="1.02" height="1.02" fill="#150f08"/><rect x="42" y="59" width="1.02" height="1.02" fill="#1f1f09"/><rect x="43" y="59" width="1.02" height="1.02" fill="#151009"/><rect x="44" y="59" width="1.02" height="1.02" fill="#25240d"/><rect x="45" y="59" width="1.02" height="1.02" fill="#110c05"/><rect x="46" y="59" width="1.02" height="1.02" fill="#1c150d"/><rect x="47" y="59" width="1.02" height="1.02" fill="#1b1710"/><rect x="48" y="59" width="1.02" height="1.02" fill="#362815"/><rect x="49" y="59" width="1.02" height="1.02" fill="#130e07"/><rect x="50" y="59" width="1.02" height="1.02" fill="#21160a"/><rect x="51" y="59" width="1.02" height="1.02" fill="#15110b"/><rect x="52" y="59" width="1.02" height="1.02" fill="#1f170d"/><rect x="53" y="59" width="1.02" height="1.02" fill="#26250e"/><rect x="54" y="59" width="1.02" height="1.02" fill="#252632"/><rect x="55" y="59" width="1.02" height="1.02" fill="#362815"/><rect x="56" y="59" width="1.02" height="1.02" fill="#1d150b"/><rect x="57" y="59" width="1.02" height="1.02" fill="#100c05"/><rect x="58" y="59" width="1.02" height="1.02" fill="#141009"/><rect x="59" y="59" width="1.02" height="1.02" fill="#0e0b05"/><rect x="60" y="59" width="1.02" height="1.02" fill="#2a2b3e"/><rect x="61" y="59" width="1.02" height="1.02" fill="#2c2011"/><rect x="62" y="59" width="1.02" height="1.02" fill="#261c0f"/><rect x="63" y="59" width="1.02" height="1.02" fill="#2e2213"/><rect x="0" y="60" width="1.02" height="1.02" fill="#0f0b04"/><rect x="1" y="60" width="1.02" height="1.02" fill="#2e2f42"/><rect x="2" y="60" width="1.02" height="1.02" fill="#1d1d07"/><rect x="3" y="60" width="1.02" height="1.02" fill="#27260f"/><rect x="4" y="60" width="1.02" height="1.02" fill="#3c2c16"/><rect x="5" y="60" width="1.02" height="1.02" fill="#16110a"/><rect x="6" y="60" width="1.02" height="1.02" fill="#3a2a14"/><rect x="7" y="60" width="1.02" height="1.02" fill="#202128"/><rect x="8" y="60" width="1.02" height="1.02" fill="#1b140c"/><rect x="9" y="60" width="1.02" height="1.02" fill="#181109"/><rect x="10" y="60" width="1.02" height="1.02" fill="#1e1f26"/><rect x="11" y="60" width="1.02" height="1.02" fill="#393939"/><rect x="12" y="60" width="1.02" height="1.02" fill="#191b06"/><rect x="13" y="60" width="1.02" height="1.02" fill="#1e1a13"/><rect x="14" y="60" width="1.02" height="1.02" fill="#181a05"/><rect x="15" y="60" width="1.02" height="1.02" fill="#1e1f27"/><rect x="16" y="60" width="1.02" height="1.02" fill="#332512"/><rect x="17" y="60" width="1.02" height="1.02" fill="#23252e"/><rect x="18" y="60" width="1.02" height="1.02" fill="#392913"/><rect x="19" y="60" width="1.02" height="1.02" fill="#150e05"/><rect x="20" y="60" width="1.02" height="1.02" fill="#1b1d08"/><rect x="21" y="60" width="1.02" height="1.02" fill="#1f1f09"/><rect x="22" y="60" width="1.02" height="1.02" fill="#22170b"/><rect x="23" y="60" width="1.02" height="1.02" fill="#21160a"/><rect x="24" y="60" width="1.02" height="1.02" fill="#2e2213"/><rect x="25" y="60" width="1.02" height="1.02" fill="#271c10"/><rect x="26" y="60" width="1.02" height="1.02" fill="#2f3131"/><rect x="27" y="60" width="1.02" height="1.02" fill="#17120b"/><rect x="28" y="60" width="1.02" height="1.02" fill="#0d0903"/><rect x="29" y="60" width="1.02" height="1.02" fill="#3c2c16"/><rect x="30" y="60" width="1.02" height="1.02" fill="#20200a"/><rect x="31" y="60" width="1.02" height="1.02" fill="#201c15"/><rect x="32" y="60" width="1.02" height="1.02" fill="#424240"/><rect x="33" y="60" width="1.02" height="1.02" fill="#1e1e08"/><rect x="34" y="60" width="1.02" height="1.02" fill="#160f07"/><rect x="35" y="60" width="1.02" height="1.02" fill="#434341"/><rect x="36" y="60" width="1.02" height="1.02" fill="#151009"/><rect x="37" y="60" width="1.02" height="1.02" fill="#20222b"/><rect x="38" y="60" width="1.02" height="1.02" fill="#1c140a"/><rect x="39" y="60" width="1.02" height="1.02" fill="#2c2011"/><rect x="40" y="60" width="1.02" height="1.02" fill="#2e2213"/><rect x="41" y="60" width="1.02" height="1.02" fill="#23180c"/><rect x="42" y="60" width="1.02" height="1.02" fill="#303247"/><rect x="43" y="60" width="1.02" height="1.02" fill="#181109"/><rect x="44" y="60" width="1.02" height="1.02" fill="#322411"/><rect x="45" y="60" width="1.02" height="1.02" fill="#3d2d17"/><rect x="46" y="60" width="1.02" height="1.02" fill="#1e200b"/><rect x="47" y="60" width="1.02" height="1.02" fill="#272834"/><rect x="48" y="60" width="1.02" height="1.02" fill="#1d1912"/><rect x="49" y="60" width="1.02" height="1.02" fill="#2f3146"/><rect x="50" y="60" width="1.02" height="1.02" fill="#2d2112"/><rect x="51" y="60" width="1.02" height="1.02" fill="#1e160c"/><rect x="52" y="60" width="1.02" height="1.02" fill="#3f2f19"/><rect x="53" y="60" width="1.02" height="1.02" fill="#19120a"/><rect x="54" y="60" width="1.02" height="1.02" fill="#110c05"/><rect x="55" y="60" width="1.02" height="1.02" fill="#22210a"/><rect x="56" y="60" width="1.02" height="1.02" fill="#252632"/><rect x="57" y="60" width="1.02" height="1.02" fill="#27260f"/><rect x="58" y="60" width="1.02" height="1.02" fill="#3a2a14"/><rect x="59" y="60" width="1.02" height="1.02" fill="#201c15"/><rect x="60" y="60" width="1.02" height="1.02" fill="#262637"/><rect x="61" y="60" width="1.02" height="1.02" fill="#342613"/><rect x="62" y="60" width="1.02" height="1.02" fill="#23230d"/><rect x="63" y="60" width="1.02" height="1.02" fill="#1e1e08"/><rect x="0" y="61" width="1.02" height="1.02" fill="#23180c"/><rect x="1" y="61" width="1.02" height="1.02" fill="#332512"/><rect x="2" y="61" width="1.02" height="1.02" fill="#1b1309"/><rect x="3" y="61" width="1.02" height="1.02" fill="#1f1f09"/><rect x="4" y="61" width="1.02" height="1.02" fill="#201c15"/><rect x="5" y="61" width="1.02" height="1.02" fill="#100c06"/><rect x="6" y="61" width="1.02" height="1.02" fill="#1e160c"/><rect x="7" y="61" width="1.02" height="1.02" fill="#181109"/><rect x="8" y="61" width="1.02" height="1.02" fill="#1f1b14"/><rect x="9" y="61" width="1.02" height="1.02" fill="#303247"/><rect x="10" y="61" width="1.02" height="1.02" fill="#1b1710"/><rect x="11" y="61" width="1.02" height="1.02" fill="#1e1a13"/><rect x="12" y="61" width="1.02" height="1.02" fill="#2f3131"/><rect x="13" y="61" width="1.02" height="1.02" fill="#1b1812"/><rect x="14" y="61" width="1.02" height="1.02" fill="#1d1d07"/><rect x="15" y="61" width="1.02" height="1.02" fill="#1c150d"/><rect x="16" y="61" width="1.02" height="1.02" fill="#25240d"/><rect x="17" y="61" width="1.02" height="1.02" fill="#292a3d"/><rect x="18" y="61" width="1.02" height="1.02" fill="#1d1f28"/><rect x="19" y="61" width="1.02" height="1.02" fill="#1e1f26"/><rect x="20" y="61" width="1.02" height="1.02" fill="#261b0f"/><rect x="21" y="61" width="1.02" height="1.02" fill="#171704"/><rect x="22" y="61" width="1.02" height="1.02" fill="#3e2e18"/><rect x="23" y="61" width="1.02" height="1.02" fill="#23180c"/><rect x="24" y="61" width="1.02" height="1.02" fill="#291f12"/><rect x="25" y="61" width="1.02" height="1.02" fill="#1d1e25"/><rect x="26" y="61" width="1.02" height="1.02" fill="#21222e"/><rect x="27" y="61" width="1.02" height="1.02" fill="#1e160c"/><rect x="28" y="61" width="1.02" height="1.02" fill="#090500"/><rect x="29" y="61" width="1.02" height="1.02" fill="#20180e"/><rect x="30" y="61" width="1.02" height="1.02" fill="#141009"/><rect x="31" y="61" width="1.02" height="1.02" fill="#18150f"/><rect x="32" y="61" width="1.02" height="1.02" fill="#2a1e0f"/><rect x="33" y="61" width="1.02" height="1.02" fill="#1f212a"/><rect x="34" y="61" width="1.02" height="1.02" fill="#1b1710"/><rect x="35" y="61" width="1.02" height="1.02" fill="#1d1d07"/><rect x="36" y="61" width="1.02" height="1.02" fill="#151009"/><rect x="37" y="61" width="1.02" height="1.02" fill="#26250e"/><rect x="38" y="61" width="1.02" height="1.02" fill="#272834"/><rect x="39" y="61" width="1.02" height="1.02" fill="#241a0d"/><rect x="40" y="61" width="1.02" height="1.02" fill="#24230c"/><rect x="41" y="61" width="1.02" height="1.02" fill="#110c05"/><rect x="42" y="61" width="1.02" height="1.02" fill="#271c10"/><rect x="43" y="61" width="1.02" height="1.02" fill="#120c05"/><rect x="44" y="61" width="1.02" height="1.02" fill="#362815"/><rect x="45" y="61" width="1.02" height="1.02" fill="#181109"/><rect x="46" y="61" width="1.02" height="1.02" fill="#251a0e"/><rect x="47" y="61" width="1.02" height="1.02" fill="#17120b"/><rect x="48" y="61" width="1.02" height="1.02" fill="#18150f"/><rect x="49" y="61" width="1.02" height="1.02" fill="#2a2c3e"/><rect x="50" y="61" width="1.02" height="1.02" fill="#27260f"/><rect x="51" y="61" width="1.02" height="1.02" fill="#1b1309"/><rect x="52" y="61" width="1.02" height="1.02" fill="#120e07"/><rect x="53" y="61" width="1.02" height="1.02" fill="#21222e"/><rect x="54" y="61" width="1.02" height="1.02" fill="#181109"/><rect x="55" y="61" width="1.02" height="1.02" fill="#1e1d09"/><rect x="56" y="61" width="1.02" height="1.02" fill="#322411"/><rect x="57" y="61" width="1.02" height="1.02" fill="#1a1c07"/><rect x="58" y="61" width="1.02" height="1.02" fill="#19120a"/><rect x="59" y="61" width="1.02" height="1.02" fill="#3f2f19"/><rect x="60" y="61" width="1.02" height="1.02" fill="#2a2c2c"/><rect x="61" y="61" width="1.02" height="1.02" fill="#130e07"/><rect x="62" y="61" width="1.02" height="1.02" fill="#352714"/><rect x="63" y="61" width="1.02" height="1.02" fill="#1c140a"/><rect x="0" y="62" width="1.02" height="1.02" fill="#22170b"/><rect x="1" y="62" width="1.02" height="1.02" fill="#2e3045"/><rect x="2" y="62" width="1.02" height="1.02" fill="#434341"/><rect x="3" y="62" width="1.02" height="1.02" fill="#3e2e18"/><rect x="4" y="62" width="1.02" height="1.02" fill="#3c2c16"/><rect x="5" y="62" width="1.02" height="1.02" fill="#2d2112"/><rect x="6" y="62" width="1.02" height="1.02" fill="#40403e"/><rect x="7" y="62" width="1.02" height="1.02" fill="#261b0f"/><rect x="8" y="62" width="1.02" height="1.02" fill="#362815"/><rect x="9" y="62" width="1.02" height="1.02" fill="#303247"/><rect x="10" y="62" width="1.02" height="1.02" fill="#1c150d"/><rect x="11" y="62" width="1.02" height="1.02" fill="#22170b"/><rect x="12" y="62" width="1.02" height="1.02" fill="#1c1811"/><rect x="13" y="62" width="1.02" height="1.02" fill="#1b140c"/><rect x="14" y="62" width="1.02" height="1.02" fill="#464644"/><rect x="15" y="62" width="1.02" height="1.02" fill="#2c2011"/><rect x="16" y="62" width="1.02" height="1.02" fill="#373737"/><rect x="17" y="62" width="1.02" height="1.02" fill="#201c15"/><rect x="18" y="62" width="1.02" height="1.02" fill="#161820"/><rect x="19" y="62" width="1.02" height="1.02" fill="#392913"/><rect x="20" y="62" width="1.02" height="1.02" fill="#120d06"/><rect x="21" y="62" width="1.02" height="1.02" fill="#23180c"/><rect x="22" y="62" width="1.02" height="1.02" fill="#271c10"/><rect x="23" y="62" width="1.02" height="1.02" fill="#3f2f19"/><rect x="24" y="62" width="1.02" height="1.02" fill="#1c150d"/><rect x="25" y="62" width="1.02" height="1.02" fill="#24230c"/><rect x="26" y="62" width="1.02" height="1.02" fill="#261b0f"/><rect x="27" y="62" width="1.02" height="1.02" fill="#21232c"/><rect x="28" y="62" width="1.02" height="1.02" fill="#342613"/><rect x="29" y="62" width="1.02" height="1.02" fill="#3b2b15"/><rect x="30" y="62" width="1.02" height="1.02" fill="#352714"/><rect x="31" y="62" width="1.02" height="1.02" fill="#454543"/><rect x="32" y="62" width="1.02" height="1.02" fill="#1d1912"/><rect x="33" y="62" width="1.02" height="1.02" fill="#1d1f28"/><rect x="34" y="62" width="1.02" height="1.02" fill="#22170b"/><rect x="35" y="62" width="1.02" height="1.02" fill="#292a3d"/><rect x="36" y="62" width="1.02" height="1.02" fill="#0f0b04"/><rect x="37" y="62" width="1.02" height="1.02" fill="#434341"/><rect x="38" y="62" width="1.02" height="1.02" fill="#2e2f42"/><rect x="39" y="62" width="1.02" height="1.02" fill="#21160a"/><rect x="40" y="62" width="1.02" height="1.02" fill="#20180e"/><rect x="41" y="62" width="1.02" height="1.02" fill="#41413f"/><rect x="42" y="62" width="1.02" height="1.02" fill="#1d1e25"/><rect x="43" y="62" width="1.02" height="1.02" fill="#1e160c"/><rect x="44" y="62" width="1.02" height="1.02" fill="#1a1b22"/><rect x="45" y="62" width="1.02" height="1.02" fill="#1b1710"/><rect x="46" y="62" width="1.02" height="1.02" fill="#343434"/><rect x="47" y="62" width="1.02" height="1.02" fill="#27260f"/><rect x="48" y="62" width="1.02" height="1.02" fill="#151009"/><rect x="49" y="62" width="1.02" height="1.02" fill="#20180e"/><rect x="50" y="62" width="1.02" height="1.02" fill="#242531"/><rect x="51" y="62" width="1.02" height="1.02" fill="#1a160f"/><rect x="52" y="62" width="1.02" height="1.02" fill="#21190f"/><rect x="53" y="62" width="1.02" height="1.02" fill="#3c2c16"/><rect x="54" y="62" width="1.02" height="1.02" fill="#40403e"/><rect x="55" y="62" width="1.02" height="1.02" fill="#130f08"/><rect x="56" y="62" width="1.02" height="1.02" fill="#1f1f09"/><rect x="57" y="62" width="1.02" height="1.02" fill="#130f08"/><rect x="58" y="62" width="1.02" height="1.02" fill="#100c05"/><rect x="59" y="62" width="1.02" height="1.02" fill="#1b1d08"/><rect x="60" y="62" width="1.02" height="1.02" fill="#140f08"/><rect x="61" y="62" width="1.02" height="1.02" fill="#1a130b"/><rect x="62" y="62" width="1.02" height="1.02" fill="#392913"/><rect x="63" y="62" width="1.02" height="1.02" fill="#353535"/><rect x="0" y="63" width="1.02" height="1.02" fill="#0c080b"/><rect x="1" y="63" width="1.02" height="1.02" fill="#050305"/><rect x="2" y="63" width="1.02" height="1.02" fill="#080707"/><rect x="3" y="63" width="1.02" height="1.02" fill="#0a0f09"/><rect x="4" y="63" width="1.02" height="1.02" fill="#0c090b"/><rect x="5" y="63" width="1.02" height="1.02" fill="#070807"/><rect x="6" y="63" width="1.02" height="1.02" fill="#0d0c07"/><rect x="7" y="63" width="1.02" height="1.02" fill="#0c0709"/><rect x="8" y="63" width="1.02" height="1.02" fill="#090a04"/><rect x="9" y="63" width="1.02" height="1.02" fill="#050800"/><rect x="10" y="63" width="1.02" height="1.02" fill="#090809"/><rect x="11" y="63" width="1.02" height="1.02" fill="#0b0504"/><rect x="12" y="63" width="1.02" height="1.02" fill="#040404"/><rect x="13" y="63" width="1.02" height="1.02" fill="#050904"/><rect x="14" y="63" width="1.02" height="1.02" fill="#0f090b"/><rect x="15" y="63" width="1.02" height="1.02" fill="#090a06"/><rect x="16" y="63" width="1.02" height="1.02" fill="#090402"/><rect x="17" y="63" width="1.02" height="1.02" fill="#050400"/><rect x="18" y="63" width="1.02" height="1.02" fill="#060406"/><rect x="19" y="63" width="1.02" height="1.02" fill="#0e0f0b"/><rect x="20" y="63" width="1.02" height="1.02" fill="#080503"/><rect x="21" y="63" width="1.02" height="1.02" fill="#0b0805"/><rect x="22" y="63" width="1.02" height="1.02" fill="#100e08"/><rect x="23" y="63" width="1.02" height="1.02" fill="#060a02"/><rect x="24" y="63" width="1.02" height="1.02" fill="#0a0702"/><rect x="25" y="63" width="1.02" height="1.02" fill="#080907"/><rect x="26" y="63" width="1.02" height="1.02" fill="#070404"/><rect x="27" y="63" width="1.02" height="1.02" fill="#080a0a"/><rect x="28" y="63" width="1.02" height="1.02" fill="#0b0c04"/><rect x="29" y="63" width="1.02" height="1.02" fill="#060605"/><rect x="30" y="63" width="1.02" height="1.02" fill="#030301"/><rect x="31" y="63" width="1.02" height="1.02" fill="#050607"/><rect x="32" y="63" width="1.02" height="1.02" fill="#060604"/><rect x="33" y="63" width="1.02" height="1.02" fill="#0d0508"/><rect x="34" y="63" width="1.02" height="1.02" fill="#0a0800"/><rect x="35" y="63" width="1.02" height="1.02" fill="#080702"/><rect x="36" y="63" width="1.02" height="1.02" fill="#0b0906"/><rect x="37" y="63" width="1.02" height="1.02" fill="#0d0e07"/><rect x="38" y="63" width="1.02" height="1.02" fill="#050902"/><rect x="39" y="63" width="1.02" height="1.02" fill="#0c0a07"/><rect x="40" y="63" width="1.02" height="1.02" fill="#050605"/><rect x="41" y="63" width="1.02" height="1.02" fill="#0e0b07"/><rect x="42" y="63" width="1.02" height="1.02" fill="#0d0b05"/><rect x="43" y="63" width="1.02" height="1.02" fill="#0c0603"/><rect x="44" y="63" width="1.02" height="1.02" fill="#060b08"/><rect x="45" y="63" width="1.02" height="1.02" fill="#080b05"/><rect x="46" y="63" width="1.02" height="1.02" fill="#080908"/><rect x="47" y="63" width="1.02" height="1.02" fill="#0d0606"/><rect x="48" y="63" width="1.02" height="1.02" fill="#070506"/><rect x="49" y="63" width="1.02" height="1.02" fill="#060704"/><rect x="50" y="63" width="1.02" height="1.02" fill="#0e0808"/><rect x="51" y="63" width="1.02" height="1.02" fill="#070907"/><rect x="52" y="63" width="1.02" height="1.02" fill="#060805"/><rect x="53" y="63" width="1.02" height="1.02" fill="#0e0b0b"/><rect x="54" y="63" width="1.02" height="1.02" fill="#0d0c07"/><rect x="55" y="63" width="1.02" height="1.02" fill="#080807"/><rect x="56" y="63" width="1.02" height="1.02" fill="#0e0708"/><rect x="57" y="63" width="1.02" height="1.02" fill="#060909"/><rect x="58" y="63" width="1.02" height="1.02" fill="#0e0c0b"/><rect x="59" y="63" width="1.02" height="1.02" fill="#040705"/><rect x="60" y="63" width="1.02" height="1.02" fill="#090805"/><rect x="61" y="63" width="1.02" height="1.02" fill="#0f0805"/><rect x="62" y="63" width="1.02" height="1.02" fill="#050604"/><rect x="63" y="63" width="1.02" height="1.02" fill="#0c0b08"/></svg></div>
<div class="b" style="left:298px;top:428px;width:249px;height:314px;border:1px solid #161616;background:#323232"></div>
<div class="b" style="left:298px;top:403px;width:77px;height:26px;background:#323232;border:1px solid #1c1c1c;border-bottom:none;border-radius:3px 3px 0 0"></div>
<div class="t" style="left:310.3px;top:411.69px;font-size:11px;line-height:11px;color:#e6e6e6;font-weight:normal;">Properties</div>
<div class="b" style="left:299px;top:434px;width:247px;height:21px;background:linear-gradient(#393939,#2f2f2f);border-top:1px solid #1c1c1c;border-bottom:1px solid #1c1c1c"></div>
<svg style="left:0;top:0" width="713" height="750"><path d="M302.8 447.3 L307.8 447.3 L307.8 442.3 Z" fill="#e0e0e0"/></svg>
<div class="t" style="left:315.8px;top:440.39px;font-size:11px;line-height:11px;color:#ffffff;font-weight:bold;">File Information</div>
<div class="b" style="left:299px;top:540px;width:247px;height:21px;background:linear-gradient(#393939,#2f2f2f);border-top:1px solid #1c1c1c;border-bottom:1px solid #1c1c1c"></div>
<svg style="left:0;top:0" width="713" height="750"><path d="M302.8 553.3 L307.8 553.3 L307.8 548.3 Z" fill="#e0e0e0"/></svg>
<div class="t" style="left:315.8px;top:545.39px;font-size:11px;line-height:11px;color:#ffffff;font-weight:bold;">Texture</div>
<div class="t" style="left:305.4px;top:463.19px;font-size:11px;line-height:11px;color:#dcdcdc;font-weight:normal;">File</div>
<div class="t" style="left:305.4px;top:483.69px;font-size:11px;line-height:11px;color:#dcdcdc;font-weight:normal;">Folder</div>
<div class="t" style="left:305.4px;top:504.19px;font-size:11px;line-height:11px;color:#dcdcdc;font-weight:normal;">File size</div>
<div class="t" style="left:379.5px;top:501.69px;font-size:11px;line-height:11px;color:#e6e6e6;font-weight:normal;">0 bytes</div>
<div class="t" style="left:305.4px;top:524.69px;font-size:11px;line-height:11px;color:#dcdcdc;font-weight:normal;">Modified</div>
<div class="t" style="left:379.5px;top:522.19px;font-size:11px;line-height:11px;color:#e6e6e6;font-weight:normal;letter-spacing:-0.27px">Jan 01, 1970, 04:00 AM</div>
<div class="t" style="left:305.4px;top:568.19px;font-size:11px;line-height:11px;color:#dcdcdc;font-weight:normal;">Type</div>
<div class="t" style="left:379.5px;top:565.69px;font-size:11px;line-height:11px;color:#e6e6e6;font-weight:normal;">2D</div>
<div class="t" style="left:305.4px;top:588.19px;font-size:11px;line-height:11px;color:#dcdcdc;font-weight:normal;">Size</div>
<div class="t" style="left:379.5px;top:585.69px;font-size:11px;line-height:11px;color:#e6e6e6;font-weight:normal;">64 x 64</div>
<div class="t" style="left:305.4px;top:609.69px;font-size:11px;line-height:11px;color:#dcdcdc;font-weight:normal;">Format</div>
<div class="b" style="left:379px;top:604.3px;width:163px;height:17px;background:linear-gradient(#2a2a2a,#232323);border:1px solid #121212"></div>
<div class="t" style="left:382.5px;top:607.99px;font-size:11px;line-height:11px;color:#e6e6e6;font-weight:normal;letter-spacing:-0.5px">B8G8R8A8_UNORM</div>
<svg style="left:0;top:0" width="713" height="750"><path d="M529.5 610.8 L540.5 610.8 L535 616.8 Z" fill="#f0f0f0"/></svg>
<div class="t" style="left:305.4px;top:630.19px;font-size:11px;line-height:11px;color:#dcdcdc;font-weight:normal;">VRAM</div>
<div class="t" style="left:379.5px;top:627.69px;font-size:11px;line-height:11px;color:#e6e6e6;font-weight:normal;">16 kilobytes</div>
<div class="t" style="left:305.4px;top:650.99px;font-size:11px;line-height:11px;color:#dcdcdc;font-weight:normal;">Filter</div>
<div class="b" style="left:379px;top:645.5999999999999px;width:163px;height:17px;background:linear-gradient(#2a2a2a,#232323);border:1px solid #121212"></div>
<div class="t" style="left:382.5px;top:649.29px;font-size:11px;line-height:11px;color:#e6e6e6;font-weight:normal;">Linear</div>
<svg style="left:0;top:0" width="713" height="750"><path d="M529.5 652.0999999999999 L540.5 652.0999999999999 L535 658.0999999999999 Z" fill="#f0f0f0"/></svg>
<div class="t" style="left:305.4px;top:671.69px;font-size:11px;line-height:11px;color:#dcdcdc;font-weight:normal;">Clamp U</div>
<div class="b" style="left:380.3px;top:671px;width:15.2px;height:13px;background:#2a2a2a;border:1px solid #1c1c1c"></div>
<div class="t" style="left:402.7px;top:673.69px;font-size:11px;line-height:11px;color:#e6e6e6;font-weight:normal;">False</div>
<div class="t" style="left:305.4px;top:692.49px;font-size:11px;line-height:11px;color:#dcdcdc;font-weight:normal;">Clamp V</div>
<div class="b" style="left:380.3px;top:691.8px;width:15.2px;height:13px;background:#2a2a2a;border:1px solid #1c1c1c"></div>
<div class="t" style="left:402.7px;top:694.49px;font-size:11px;line-height:11px;color:#e6e6e6;font-weight:normal;">False</div>
<div class="t" style="left:305.4px;top:713.29px;font-size:11px;line-height:11px;color:#dcdcdc;font-weight:normal;">Clamp W</div>
<div class="b" style="left:380.3px;top:712.6px;width:15.2px;height:13px;background:#2a2a2a;border:1px solid #1c1c1c"></div>
<div class="t" style="left:402.7px;top:715.29px;font-size:11px;line-height:11px;color:#e6e6e6;font-weight:normal;">False</div>
</body></html>
